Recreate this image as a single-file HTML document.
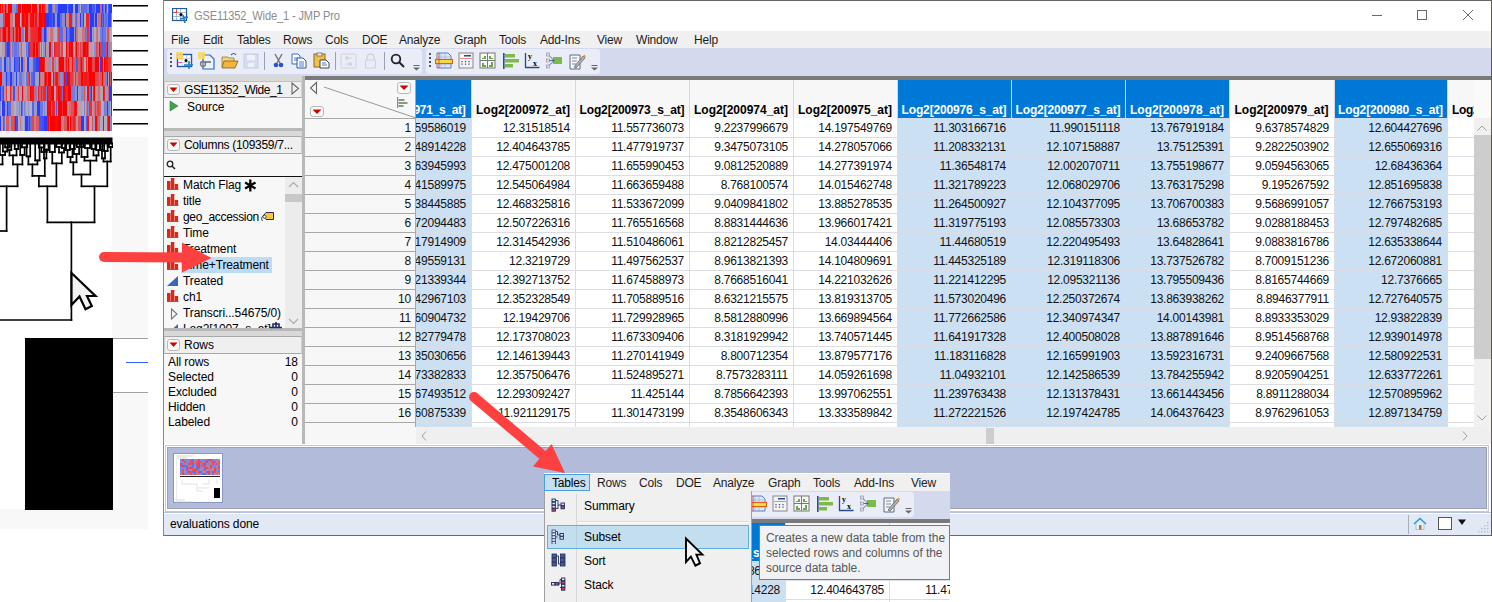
<!DOCTYPE html><html><head><meta charset="utf-8"><style>
html,body{margin:0;padding:0;}
body{width:1492px;height:602px;position:relative;overflow:hidden;background:#fff;font-family:"Liberation Sans",sans-serif;}
div,span,svg{position:absolute;box-sizing:border-box;}
.t{white-space:nowrap;line-height:14px;}
</style></head><body>

<div style="left:0px;top:131px;width:112px;height:7px;background:#f4f4f4;"></div>
<div style="left:112px;top:137px;width:36px;height:392px;background:#f8f8f8;"></div>
<div style="left:0px;top:509px;width:148px;height:20px;background:#f8f8f8;"></div>
<svg style="left:0;top:0" width="112" height="131" shape-rendering="crispEdges"><rect x="0" y="4" width="1" height="9" fill="rgb(255, 0, 0)"/><rect x="1" y="4" width="1" height="9" fill="rgb(222, 73, 79)"/><rect x="2" y="4" width="1" height="9" fill="rgb(247, 16, 17)"/><rect x="3" y="4" width="2" height="9" fill="rgb(219, 82, 89)"/><rect x="5" y="4" width="1" height="9" fill="rgb(255, 0, 0)"/><rect x="6" y="4" width="1" height="9" fill="rgb(220, 79, 85)"/><rect x="7" y="4" width="1" height="9" fill="rgb(207, 110, 118)"/><rect x="8" y="4" width="2" height="9" fill="rgb(255, 0, 0)"/><rect x="10" y="4" width="1" height="9" fill="rgb(255, 0, 0)"/><rect x="11" y="4" width="1" height="9" fill="rgb(255, 0, 0)"/><rect x="12" y="4" width="2" height="9" fill="rgb(139, 145, 209)"/><rect x="14" y="4" width="2" height="9" fill="rgb(135, 141, 211)"/><rect x="16" y="4" width="2" height="9" fill="rgb(97, 108, 228)"/><rect x="18" y="4" width="1" height="9" fill="rgb(255, 0, 0)"/><rect x="19" y="4" width="2" height="9" fill="rgb(255, 0, 0)"/><rect x="21" y="4" width="1" height="9" fill="rgb(207, 109, 118)"/><rect x="22" y="4" width="2" height="9" fill="rgb(255, 0, 0)"/><rect x="24" y="4" width="3" height="9" fill="rgb(255, 0, 0)"/><rect x="27" y="4" width="2" height="9" fill="rgb(255, 0, 0)"/><rect x="29" y="4" width="2" height="9" fill="rgb(255, 0, 0)"/><rect x="31" y="4" width="1" height="9" fill="rgb(196, 136, 146)"/><rect x="32" y="4" width="1" height="9" fill="rgb(255, 0, 0)"/><rect x="33" y="4" width="2" height="9" fill="rgb(255, 0, 0)"/><rect x="35" y="4" width="2" height="9" fill="rgb(250, 9, 10)"/><rect x="37" y="4" width="2" height="9" fill="rgb(200, 125, 135)"/><rect x="39" y="4" width="2" height="9" fill="rgb(255, 0, 0)"/><rect x="41" y="4" width="1" height="9" fill="rgb(214, 92, 99)"/><rect x="42" y="4" width="1" height="9" fill="rgb(255, 0, 0)"/><rect x="43" y="4" width="2" height="9" fill="rgb(242, 29, 31)"/><rect x="45" y="4" width="1" height="9" fill="rgb(218, 83, 89)"/><rect x="46" y="4" width="2" height="9" fill="rgb(194, 140, 151)"/><rect x="48" y="4" width="1" height="9" fill="rgb(79, 93, 237)"/><rect x="49" y="4" width="1" height="9" fill="rgb(50, 68, 250)"/><rect x="50" y="4" width="2" height="9" fill="rgb(55, 72, 248)"/><rect x="52" y="4" width="1" height="9" fill="rgb(117, 125, 219)"/><rect x="53" y="4" width="1" height="9" fill="rgb(145, 149, 207)"/><rect x="54" y="4" width="1" height="9" fill="rgb(191, 147, 158)"/><rect x="55" y="4" width="3" height="9" fill="rgb(108, 118, 223)"/><rect x="58" y="4" width="2" height="9" fill="rgb(40, 60, 255)"/><rect x="60" y="4" width="1" height="9" fill="rgb(40, 60, 255)"/><rect x="61" y="4" width="1" height="9" fill="rgb(40, 60, 255)"/><rect x="62" y="4" width="2" height="9" fill="rgb(40, 60, 255)"/><rect x="64" y="4" width="3" height="9" fill="rgb(40, 60, 255)"/><rect x="67" y="4" width="1" height="9" fill="rgb(121, 129, 217)"/><rect x="68" y="4" width="1" height="9" fill="rgb(66, 82, 243)"/><rect x="69" y="4" width="2" height="9" fill="rgb(46, 65, 252)"/><rect x="71" y="4" width="2" height="9" fill="rgb(40, 60, 255)"/><rect x="73" y="4" width="2" height="9" fill="rgb(180, 171, 185)"/><rect x="75" y="4" width="3" height="9" fill="rgb(40, 60, 255)"/><rect x="78" y="4" width="2" height="9" fill="rgb(122, 130, 217)"/><rect x="80" y="4" width="1" height="9" fill="rgb(172, 173, 194)"/><rect x="81" y="4" width="1" height="9" fill="rgb(90, 102, 232)"/><rect x="82" y="4" width="2" height="9" fill="rgb(99, 110, 228)"/><rect x="84" y="4" width="3" height="9" fill="rgb(96, 108, 229)"/><rect x="87" y="4" width="1" height="9" fill="rgb(121, 129, 217)"/><rect x="88" y="4" width="1" height="9" fill="rgb(124, 131, 216)"/><rect x="89" y="4" width="3" height="9" fill="rgb(40, 60, 255)"/><rect x="92" y="4" width="1" height="9" fill="rgb(77, 92, 237)"/><rect x="93" y="4" width="2" height="9" fill="rgb(68, 84, 242)"/><rect x="95" y="4" width="1" height="9" fill="rgb(123, 130, 217)"/><rect x="96" y="4" width="3" height="9" fill="rgb(40, 60, 255)"/><rect x="99" y="4" width="1" height="9" fill="rgb(40, 60, 255)"/><rect x="100" y="4" width="2" height="9" fill="rgb(212, 98, 105)"/><rect x="102" y="4" width="1" height="9" fill="rgb(40, 60, 255)"/><rect x="103" y="4" width="1" height="9" fill="rgb(104, 115, 225)"/><rect x="104" y="4" width="1" height="9" fill="rgb(133, 139, 212)"/><rect x="105" y="4" width="1" height="9" fill="rgb(40, 60, 255)"/><rect x="106" y="4" width="1" height="9" fill="rgb(87, 100, 233)"/><rect x="107" y="4" width="1" height="9" fill="rgb(167, 168, 196)"/><rect x="108" y="4" width="1" height="9" fill="rgb(78, 93, 237)"/><rect x="109" y="4" width="2" height="9" fill="rgb(40, 60, 255)"/><rect x="111" y="4" width="2" height="9" fill="rgb(40, 60, 255)"/><rect x="0" y="13" width="3" height="14" fill="rgb(152, 155, 203)"/><rect x="3" y="13" width="2" height="14" fill="rgb(224, 71, 77)"/><rect x="5" y="13" width="2" height="14" fill="rgb(255, 0, 0)"/><rect x="7" y="13" width="3" height="14" fill="rgb(255, 0, 0)"/><rect x="10" y="13" width="3" height="14" fill="rgb(204, 117, 126)"/><rect x="13" y="13" width="1" height="14" fill="rgb(171, 172, 195)"/><rect x="14" y="13" width="1" height="14" fill="rgb(186, 157, 170)"/><rect x="15" y="13" width="1" height="14" fill="rgb(255, 0, 0)"/><rect x="16" y="13" width="1" height="14" fill="rgb(255, 0, 0)"/><rect x="17" y="13" width="1" height="14" fill="rgb(255, 0, 0)"/><rect x="18" y="13" width="1" height="14" fill="rgb(255, 0, 0)"/><rect x="19" y="13" width="1" height="14" fill="rgb(255, 0, 0)"/><rect x="20" y="13" width="1" height="14" fill="rgb(173, 174, 193)"/><rect x="21" y="13" width="1" height="14" fill="rgb(206, 113, 122)"/><rect x="22" y="13" width="2" height="14" fill="rgb(255, 0, 0)"/><rect x="24" y="13" width="2" height="14" fill="rgb(246, 20, 21)"/><rect x="26" y="13" width="1" height="14" fill="rgb(252, 5, 6)"/><rect x="27" y="13" width="1" height="14" fill="rgb(255, 0, 0)"/><rect x="28" y="13" width="2" height="14" fill="rgb(214, 94, 101)"/><rect x="30" y="13" width="3" height="14" fill="rgb(249, 13, 14)"/><rect x="33" y="13" width="1" height="14" fill="rgb(255, 0, 0)"/><rect x="34" y="13" width="1" height="14" fill="rgb(228, 61, 66)"/><rect x="35" y="13" width="1" height="14" fill="rgb(249, 11, 12)"/><rect x="36" y="13" width="1" height="14" fill="rgb(242, 29, 32)"/><rect x="37" y="13" width="2" height="14" fill="rgb(222, 76, 82)"/><rect x="39" y="13" width="1" height="14" fill="rgb(255, 0, 0)"/><rect x="40" y="13" width="2" height="14" fill="rgb(255, 0, 0)"/><rect x="42" y="13" width="2" height="14" fill="rgb(247, 16, 18)"/><rect x="44" y="13" width="1" height="14" fill="rgb(255, 0, 0)"/><rect x="45" y="13" width="1" height="14" fill="rgb(255, 0, 0)"/><rect x="46" y="13" width="3" height="14" fill="rgb(40, 60, 255)"/><rect x="49" y="13" width="3" height="14" fill="rgb(55, 73, 247)"/><rect x="52" y="13" width="1" height="14" fill="rgb(75, 90, 238)"/><rect x="53" y="13" width="1" height="14" fill="rgb(40, 60, 255)"/><rect x="54" y="13" width="1" height="14" fill="rgb(60, 77, 245)"/><rect x="55" y="13" width="2" height="14" fill="rgb(146, 151, 206)"/><rect x="57" y="13" width="3" height="14" fill="rgb(40, 60, 255)"/><rect x="60" y="13" width="2" height="14" fill="rgb(96, 108, 229)"/><rect x="62" y="13" width="3" height="14" fill="rgb(133, 139, 212)"/><rect x="65" y="13" width="1" height="14" fill="rgb(40, 60, 255)"/><rect x="66" y="13" width="3" height="14" fill="rgb(197, 133, 143)"/><rect x="69" y="13" width="3" height="14" fill="rgb(243, 27, 29)"/><rect x="72" y="13" width="1" height="14" fill="rgb(129, 136, 214)"/><rect x="73" y="13" width="2" height="14" fill="rgb(187, 156, 168)"/><rect x="75" y="13" width="1" height="14" fill="rgb(219, 83, 89)"/><rect x="76" y="13" width="1" height="14" fill="rgb(88, 101, 232)"/><rect x="77" y="13" width="1" height="14" fill="rgb(139, 144, 209)"/><rect x="78" y="13" width="1" height="14" fill="rgb(195, 137, 148)"/><rect x="79" y="13" width="1" height="14" fill="rgb(148, 152, 205)"/><rect x="80" y="13" width="1" height="14" fill="rgb(40, 60, 255)"/><rect x="81" y="13" width="1" height="14" fill="rgb(133, 140, 212)"/><rect x="82" y="13" width="1" height="14" fill="rgb(117, 126, 219)"/><rect x="83" y="13" width="1" height="14" fill="rgb(46, 65, 252)"/><rect x="84" y="13" width="2" height="14" fill="rgb(180, 171, 184)"/><rect x="86" y="13" width="3" height="14" fill="rgb(239, 35, 37)"/><rect x="89" y="13" width="1" height="14" fill="rgb(100, 111, 227)"/><rect x="90" y="13" width="3" height="14" fill="rgb(40, 60, 255)"/><rect x="93" y="13" width="1" height="14" fill="rgb(40, 60, 255)"/><rect x="94" y="13" width="1" height="14" fill="rgb(127, 134, 215)"/><rect x="95" y="13" width="1" height="14" fill="rgb(40, 60, 255)"/><rect x="96" y="13" width="1" height="14" fill="rgb(40, 60, 255)"/><rect x="97" y="13" width="1" height="14" fill="rgb(148, 152, 205)"/><rect x="98" y="13" width="3" height="14" fill="rgb(206, 111, 120)"/><rect x="101" y="13" width="1" height="14" fill="rgb(52, 70, 249)"/><rect x="102" y="13" width="1" height="14" fill="rgb(96, 108, 229)"/><rect x="103" y="13" width="1" height="14" fill="rgb(61, 78, 245)"/><rect x="104" y="13" width="1" height="14" fill="rgb(118, 127, 219)"/><rect x="105" y="13" width="2" height="14" fill="rgb(97, 109, 228)"/><rect x="107" y="13" width="1" height="14" fill="rgb(115, 124, 220)"/><rect x="108" y="13" width="3" height="14" fill="rgb(52, 70, 249)"/><rect x="111" y="13" width="2" height="14" fill="rgb(203, 117, 127)"/><rect x="0" y="27" width="1" height="15" fill="rgb(225, 67, 72)"/><rect x="1" y="27" width="1" height="15" fill="rgb(210, 103, 112)"/><rect x="2" y="27" width="1" height="15" fill="rgb(226, 65, 70)"/><rect x="3" y="27" width="3" height="15" fill="rgb(255, 0, 0)"/><rect x="6" y="27" width="2" height="15" fill="rgb(221, 76, 82)"/><rect x="8" y="27" width="2" height="15" fill="rgb(255, 0, 0)"/><rect x="10" y="27" width="3" height="15" fill="rgb(213, 95, 103)"/><rect x="13" y="27" width="1" height="15" fill="rgb(249, 11, 12)"/><rect x="14" y="27" width="1" height="15" fill="rgb(204, 115, 124)"/><rect x="15" y="27" width="1" height="15" fill="rgb(224, 69, 74)"/><rect x="16" y="27" width="2" height="15" fill="rgb(255, 0, 0)"/><rect x="18" y="27" width="1" height="15" fill="rgb(231, 54, 58)"/><rect x="19" y="27" width="1" height="15" fill="rgb(255, 0, 0)"/><rect x="20" y="27" width="1" height="15" fill="rgb(255, 0, 0)"/><rect x="21" y="27" width="1" height="15" fill="rgb(210, 103, 111)"/><rect x="22" y="27" width="2" height="15" fill="rgb(116, 125, 220)"/><rect x="24" y="27" width="1" height="15" fill="rgb(182, 168, 181)"/><rect x="25" y="27" width="3" height="15" fill="rgb(255, 0, 0)"/><rect x="28" y="27" width="2" height="15" fill="rgb(206, 112, 121)"/><rect x="30" y="27" width="1" height="15" fill="rgb(225, 68, 74)"/><rect x="31" y="27" width="1" height="15" fill="rgb(233, 50, 54)"/><rect x="32" y="27" width="3" height="15" fill="rgb(236, 43, 46)"/><rect x="35" y="27" width="3" height="15" fill="rgb(238, 38, 41)"/><rect x="38" y="27" width="1" height="15" fill="rgb(255, 0, 0)"/><rect x="39" y="27" width="2" height="15" fill="rgb(255, 0, 0)"/><rect x="41" y="27" width="1" height="15" fill="rgb(76, 91, 238)"/><rect x="42" y="27" width="2" height="15" fill="rgb(122, 130, 217)"/><rect x="44" y="27" width="2" height="15" fill="rgb(40, 60, 255)"/><rect x="46" y="27" width="1" height="15" fill="rgb(97, 108, 228)"/><rect x="47" y="27" width="2" height="15" fill="rgb(191, 146, 158)"/><rect x="49" y="27" width="1" height="15" fill="rgb(168, 170, 196)"/><rect x="50" y="27" width="3" height="15" fill="rgb(205, 114, 123)"/><rect x="53" y="27" width="1" height="15" fill="rgb(192, 144, 155)"/><rect x="54" y="27" width="3" height="15" fill="rgb(173, 174, 193)"/><rect x="57" y="27" width="1" height="15" fill="rgb(129, 136, 214)"/><rect x="58" y="27" width="2" height="15" fill="rgb(227, 64, 69)"/><rect x="60" y="27" width="1" height="15" fill="rgb(93, 105, 230)"/><rect x="61" y="27" width="2" height="15" fill="rgb(95, 107, 229)"/><rect x="63" y="27" width="3" height="15" fill="rgb(198, 130, 140)"/><rect x="66" y="27" width="1" height="15" fill="rgb(47, 66, 251)"/><rect x="67" y="27" width="2" height="15" fill="rgb(109, 119, 223)"/><rect x="69" y="27" width="1" height="15" fill="rgb(232, 52, 56)"/><rect x="70" y="27" width="1" height="15" fill="rgb(40, 60, 255)"/><rect x="71" y="27" width="3" height="15" fill="rgb(40, 60, 255)"/><rect x="74" y="27" width="1" height="15" fill="rgb(142, 147, 208)"/><rect x="75" y="27" width="1" height="15" fill="rgb(60, 77, 245)"/><rect x="76" y="27" width="1" height="15" fill="rgb(207, 109, 117)"/><rect x="77" y="27" width="1" height="15" fill="rgb(129, 136, 213)"/><rect x="78" y="27" width="1" height="15" fill="rgb(181, 169, 182)"/><rect x="79" y="27" width="3" height="15" fill="rgb(185, 161, 174)"/><rect x="82" y="27" width="2" height="15" fill="rgb(205, 115, 124)"/><rect x="84" y="27" width="1" height="15" fill="rgb(204, 117, 126)"/><rect x="85" y="27" width="1" height="15" fill="rgb(220, 80, 86)"/><rect x="86" y="27" width="1" height="15" fill="rgb(111, 121, 222)"/><rect x="87" y="27" width="1" height="15" fill="rgb(74, 89, 239)"/><rect x="88" y="27" width="1" height="15" fill="rgb(233, 50, 54)"/><rect x="89" y="27" width="1" height="15" fill="rgb(102, 113, 226)"/><rect x="90" y="27" width="2" height="15" fill="rgb(40, 60, 255)"/><rect x="92" y="27" width="1" height="15" fill="rgb(156, 159, 201)"/><rect x="93" y="27" width="1" height="15" fill="rgb(138, 144, 210)"/><rect x="94" y="27" width="2" height="15" fill="rgb(181, 169, 182)"/><rect x="96" y="27" width="1" height="15" fill="rgb(202, 120, 130)"/><rect x="97" y="27" width="1" height="15" fill="rgb(126, 133, 215)"/><rect x="98" y="27" width="2" height="15" fill="rgb(184, 162, 174)"/><rect x="100" y="27" width="2" height="15" fill="rgb(121, 129, 217)"/><rect x="102" y="27" width="1" height="15" fill="rgb(81, 95, 236)"/><rect x="103" y="27" width="3" height="15" fill="rgb(110, 120, 222)"/><rect x="106" y="27" width="1" height="15" fill="rgb(153, 156, 203)"/><rect x="107" y="27" width="1" height="15" fill="rgb(105, 116, 225)"/><rect x="108" y="27" width="1" height="15" fill="rgb(223, 73, 79)"/><rect x="109" y="27" width="1" height="15" fill="rgb(149, 154, 204)"/><rect x="110" y="27" width="3" height="15" fill="rgb(175, 175, 193)"/><rect x="0" y="42" width="2" height="15" fill="rgb(178, 176, 190)"/><rect x="2" y="42" width="3" height="15" fill="rgb(188, 154, 166)"/><rect x="5" y="42" width="2" height="15" fill="rgb(83, 96, 235)"/><rect x="7" y="42" width="2" height="15" fill="rgb(40, 60, 255)"/><rect x="9" y="42" width="1" height="15" fill="rgb(54, 72, 248)"/><rect x="10" y="42" width="1" height="15" fill="rgb(210, 101, 109)"/><rect x="11" y="42" width="1" height="15" fill="rgb(159, 162, 200)"/><rect x="12" y="42" width="1" height="15" fill="rgb(110, 120, 222)"/><rect x="13" y="42" width="1" height="15" fill="rgb(128, 135, 214)"/><rect x="14" y="42" width="3" height="15" fill="rgb(104, 115, 225)"/><rect x="17" y="42" width="1" height="15" fill="rgb(207, 108, 117)"/><rect x="18" y="42" width="1" height="15" fill="rgb(108, 118, 223)"/><rect x="19" y="42" width="1" height="15" fill="rgb(156, 159, 201)"/><rect x="20" y="42" width="1" height="15" fill="rgb(192, 145, 156)"/><rect x="21" y="42" width="1" height="15" fill="rgb(109, 119, 223)"/><rect x="22" y="42" width="2" height="15" fill="rgb(182, 167, 180)"/><rect x="24" y="42" width="1" height="15" fill="rgb(184, 162, 175)"/><rect x="25" y="42" width="1" height="15" fill="rgb(178, 176, 190)"/><rect x="26" y="42" width="1" height="15" fill="rgb(99, 111, 227)"/><rect x="27" y="42" width="1" height="15" fill="rgb(203, 118, 127)"/><rect x="28" y="42" width="2" height="15" fill="rgb(62, 79, 244)"/><rect x="30" y="42" width="3" height="15" fill="rgb(232, 51, 55)"/><rect x="33" y="42" width="2" height="15" fill="rgb(255, 0, 0)"/><rect x="35" y="42" width="1" height="15" fill="rgb(207, 110, 119)"/><rect x="36" y="42" width="1" height="15" fill="rgb(255, 0, 0)"/><rect x="37" y="42" width="1" height="15" fill="rgb(255, 0, 0)"/><rect x="38" y="42" width="2" height="15" fill="rgb(226, 67, 72)"/><rect x="40" y="42" width="1" height="15" fill="rgb(182, 168, 181)"/><rect x="41" y="42" width="1" height="15" fill="rgb(215, 92, 99)"/><rect x="42" y="42" width="1" height="15" fill="rgb(180, 173, 186)"/><rect x="43" y="42" width="2" height="15" fill="rgb(144, 149, 207)"/><rect x="45" y="42" width="1" height="15" fill="rgb(75, 90, 238)"/><rect x="46" y="42" width="2" height="15" fill="rgb(189, 151, 163)"/><rect x="48" y="42" width="1" height="15" fill="rgb(156, 159, 201)"/><rect x="49" y="42" width="1" height="15" fill="rgb(40, 60, 255)"/><rect x="50" y="42" width="1" height="15" fill="rgb(255, 0, 0)"/><rect x="51" y="42" width="2" height="15" fill="rgb(132, 138, 212)"/><rect x="53" y="42" width="1" height="15" fill="rgb(181, 170, 183)"/><rect x="54" y="42" width="1" height="15" fill="rgb(243, 26, 28)"/><rect x="55" y="42" width="3" height="15" fill="rgb(231, 55, 59)"/><rect x="58" y="42" width="2" height="15" fill="rgb(231, 53, 57)"/><rect x="60" y="42" width="1" height="15" fill="rgb(203, 118, 128)"/><rect x="61" y="42" width="2" height="15" fill="rgb(225, 68, 73)"/><rect x="63" y="42" width="3" height="15" fill="rgb(174, 175, 193)"/><rect x="66" y="42" width="1" height="15" fill="rgb(255, 0, 0)"/><rect x="67" y="42" width="2" height="15" fill="rgb(220, 79, 86)"/><rect x="69" y="42" width="1" height="15" fill="rgb(255, 0, 0)"/><rect x="70" y="42" width="1" height="15" fill="rgb(247, 17, 19)"/><rect x="71" y="42" width="1" height="15" fill="rgb(255, 0, 0)"/><rect x="72" y="42" width="1" height="15" fill="rgb(255, 0, 0)"/><rect x="73" y="42" width="2" height="15" fill="rgb(187, 156, 168)"/><rect x="75" y="42" width="1" height="15" fill="rgb(222, 74, 80)"/><rect x="76" y="42" width="1" height="15" fill="rgb(255, 0, 0)"/><rect x="77" y="42" width="1" height="15" fill="rgb(217, 87, 94)"/><rect x="78" y="42" width="1" height="15" fill="rgb(220, 80, 86)"/><rect x="79" y="42" width="1" height="15" fill="rgb(148, 153, 205)"/><rect x="80" y="42" width="1" height="15" fill="rgb(227, 63, 68)"/><rect x="81" y="42" width="1" height="15" fill="rgb(213, 95, 103)"/><rect x="82" y="42" width="1" height="15" fill="rgb(218, 84, 91)"/><rect x="83" y="42" width="3" height="15" fill="rgb(255, 0, 0)"/><rect x="86" y="42" width="1" height="15" fill="rgb(244, 24, 25)"/><rect x="87" y="42" width="1" height="15" fill="rgb(255, 0, 0)"/><rect x="88" y="42" width="1" height="15" fill="rgb(224, 71, 76)"/><rect x="89" y="42" width="1" height="15" fill="rgb(158, 161, 200)"/><rect x="90" y="42" width="3" height="15" fill="rgb(187, 155, 167)"/><rect x="93" y="42" width="1" height="15" fill="rgb(174, 175, 193)"/><rect x="94" y="42" width="2" height="15" fill="rgb(135, 141, 211)"/><rect x="96" y="42" width="1" height="15" fill="rgb(225, 68, 73)"/><rect x="97" y="42" width="1" height="15" fill="rgb(112, 121, 222)"/><rect x="98" y="42" width="1" height="15" fill="rgb(204, 117, 126)"/><rect x="99" y="42" width="1" height="15" fill="rgb(255, 0, 0)"/><rect x="100" y="42" width="1" height="15" fill="rgb(229, 60, 64)"/><rect x="101" y="42" width="2" height="15" fill="rgb(84, 97, 234)"/><rect x="103" y="42" width="2" height="15" fill="rgb(85, 98, 234)"/><rect x="105" y="42" width="2" height="15" fill="rgb(226, 65, 70)"/><rect x="107" y="42" width="1" height="15" fill="rgb(255, 0, 0)"/><rect x="108" y="42" width="2" height="15" fill="rgb(129, 136, 214)"/><rect x="110" y="42" width="3" height="15" fill="rgb(197, 132, 143)"/><rect x="0" y="57" width="2" height="15" fill="rgb(112, 122, 221)"/><rect x="2" y="57" width="2" height="15" fill="rgb(167, 169, 196)"/><rect x="4" y="57" width="2" height="15" fill="rgb(40, 60, 255)"/><rect x="6" y="57" width="2" height="15" fill="rgb(130, 136, 213)"/><rect x="8" y="57" width="1" height="15" fill="rgb(148, 153, 205)"/><rect x="9" y="57" width="2" height="15" fill="rgb(101, 112, 227)"/><rect x="11" y="57" width="3" height="15" fill="rgb(158, 161, 200)"/><rect x="14" y="57" width="1" height="15" fill="rgb(40, 60, 255)"/><rect x="15" y="57" width="2" height="15" fill="rgb(83, 97, 235)"/><rect x="17" y="57" width="2" height="15" fill="rgb(84, 98, 234)"/><rect x="19" y="57" width="1" height="15" fill="rgb(40, 60, 255)"/><rect x="20" y="57" width="1" height="15" fill="rgb(169, 171, 195)"/><rect x="21" y="57" width="2" height="15" fill="rgb(40, 60, 255)"/><rect x="23" y="57" width="2" height="15" fill="rgb(199, 128, 138)"/><rect x="25" y="57" width="2" height="15" fill="rgb(182, 168, 181)"/><rect x="27" y="57" width="2" height="15" fill="rgb(40, 60, 255)"/><rect x="29" y="57" width="3" height="15" fill="rgb(153, 156, 203)"/><rect x="32" y="57" width="1" height="15" fill="rgb(141, 146, 208)"/><rect x="33" y="57" width="1" height="15" fill="rgb(230, 55, 60)"/><rect x="34" y="57" width="2" height="15" fill="rgb(70, 86, 241)"/><rect x="36" y="57" width="3" height="15" fill="rgb(49, 67, 250)"/><rect x="39" y="57" width="1" height="15" fill="rgb(255, 0, 0)"/><rect x="40" y="57" width="1" height="15" fill="rgb(255, 0, 0)"/><rect x="41" y="57" width="3" height="15" fill="rgb(255, 0, 0)"/><rect x="44" y="57" width="1" height="15" fill="rgb(242, 29, 31)"/><rect x="45" y="57" width="1" height="15" fill="rgb(187, 156, 169)"/><rect x="46" y="57" width="2" height="15" fill="rgb(196, 134, 144)"/><rect x="48" y="57" width="2" height="15" fill="rgb(198, 130, 140)"/><rect x="50" y="57" width="1" height="15" fill="rgb(144, 149, 207)"/><rect x="51" y="57" width="1" height="15" fill="rgb(158, 160, 201)"/><rect x="52" y="57" width="2" height="15" fill="rgb(228, 60, 65)"/><rect x="54" y="57" width="1" height="15" fill="rgb(196, 135, 145)"/><rect x="55" y="57" width="1" height="15" fill="rgb(135, 141, 211)"/><rect x="56" y="57" width="2" height="15" fill="rgb(161, 163, 199)"/><rect x="58" y="57" width="1" height="15" fill="rgb(216, 88, 95)"/><rect x="59" y="57" width="3" height="15" fill="rgb(255, 0, 0)"/><rect x="62" y="57" width="1" height="15" fill="rgb(255, 0, 0)"/><rect x="63" y="57" width="1" height="15" fill="rgb(255, 0, 0)"/><rect x="64" y="57" width="1" height="15" fill="rgb(206, 111, 120)"/><rect x="65" y="57" width="1" height="15" fill="rgb(102, 113, 226)"/><rect x="66" y="57" width="1" height="15" fill="rgb(245, 22, 24)"/><rect x="67" y="57" width="1" height="15" fill="rgb(110, 120, 222)"/><rect x="68" y="57" width="1" height="15" fill="rgb(255, 0, 0)"/><rect x="69" y="57" width="1" height="15" fill="rgb(199, 129, 139)"/><rect x="70" y="57" width="2" height="15" fill="rgb(209, 105, 113)"/><rect x="72" y="57" width="1" height="15" fill="rgb(247, 18, 19)"/><rect x="73" y="57" width="3" height="15" fill="rgb(214, 92, 99)"/><rect x="76" y="57" width="2" height="15" fill="rgb(76, 91, 238)"/><rect x="78" y="57" width="2" height="15" fill="rgb(216, 88, 94)"/><rect x="80" y="57" width="1" height="15" fill="rgb(234, 47, 50)"/><rect x="81" y="57" width="1" height="15" fill="rgb(255, 0, 0)"/><rect x="82" y="57" width="1" height="15" fill="rgb(226, 65, 70)"/><rect x="83" y="57" width="1" height="15" fill="rgb(223, 73, 79)"/><rect x="84" y="57" width="2" height="15" fill="rgb(183, 165, 178)"/><rect x="86" y="57" width="1" height="15" fill="rgb(234, 46, 49)"/><rect x="87" y="57" width="1" height="15" fill="rgb(198, 129, 139)"/><rect x="88" y="57" width="3" height="15" fill="rgb(255, 0, 0)"/><rect x="91" y="57" width="1" height="15" fill="rgb(255, 0, 0)"/><rect x="92" y="57" width="3" height="15" fill="rgb(223, 73, 78)"/><rect x="95" y="57" width="1" height="15" fill="rgb(255, 0, 0)"/><rect x="96" y="57" width="2" height="15" fill="rgb(255, 0, 0)"/><rect x="98" y="57" width="1" height="15" fill="rgb(255, 0, 0)"/><rect x="99" y="57" width="1" height="15" fill="rgb(199, 128, 139)"/><rect x="100" y="57" width="1" height="15" fill="rgb(40, 60, 255)"/><rect x="101" y="57" width="2" height="15" fill="rgb(255, 0, 0)"/><rect x="103" y="57" width="1" height="15" fill="rgb(189, 151, 163)"/><rect x="104" y="57" width="1" height="15" fill="rgb(255, 0, 0)"/><rect x="105" y="57" width="3" height="15" fill="rgb(243, 25, 27)"/><rect x="108" y="57" width="3" height="15" fill="rgb(229, 59, 64)"/><rect x="111" y="57" width="2" height="15" fill="rgb(197, 133, 143)"/><rect x="0" y="72" width="1" height="14" fill="rgb(252, 6, 6)"/><rect x="1" y="72" width="1" height="14" fill="rgb(43, 62, 253)"/><rect x="2" y="72" width="3" height="14" fill="rgb(142, 147, 208)"/><rect x="5" y="72" width="1" height="14" fill="rgb(132, 139, 212)"/><rect x="6" y="72" width="1" height="14" fill="rgb(40, 60, 255)"/><rect x="7" y="72" width="3" height="14" fill="rgb(119, 127, 218)"/><rect x="10" y="72" width="2" height="14" fill="rgb(40, 60, 255)"/><rect x="12" y="72" width="2" height="14" fill="rgb(123, 131, 217)"/><rect x="14" y="72" width="2" height="14" fill="rgb(146, 151, 206)"/><rect x="16" y="72" width="1" height="14" fill="rgb(40, 60, 255)"/><rect x="17" y="72" width="2" height="14" fill="rgb(156, 160, 201)"/><rect x="19" y="72" width="3" height="14" fill="rgb(106, 116, 224)"/><rect x="22" y="72" width="2" height="14" fill="rgb(139, 145, 209)"/><rect x="24" y="72" width="1" height="14" fill="rgb(155, 158, 202)"/><rect x="25" y="72" width="1" height="14" fill="rgb(185, 160, 172)"/><rect x="26" y="72" width="1" height="14" fill="rgb(107, 117, 224)"/><rect x="27" y="72" width="2" height="14" fill="rgb(221, 78, 84)"/><rect x="29" y="72" width="1" height="14" fill="rgb(59, 76, 246)"/><rect x="30" y="72" width="1" height="14" fill="rgb(148, 152, 205)"/><rect x="31" y="72" width="2" height="14" fill="rgb(91, 103, 231)"/><rect x="33" y="72" width="2" height="14" fill="rgb(74, 89, 239)"/><rect x="35" y="72" width="1" height="14" fill="rgb(192, 144, 155)"/><rect x="36" y="72" width="3" height="14" fill="rgb(159, 162, 200)"/><rect x="39" y="72" width="1" height="14" fill="rgb(40, 60, 255)"/><rect x="40" y="72" width="1" height="14" fill="rgb(205, 113, 122)"/><rect x="41" y="72" width="3" height="14" fill="rgb(197, 133, 144)"/><rect x="44" y="72" width="1" height="14" fill="rgb(230, 56, 60)"/><rect x="45" y="72" width="1" height="14" fill="rgb(255, 0, 0)"/><rect x="46" y="72" width="1" height="14" fill="rgb(246, 19, 21)"/><rect x="47" y="72" width="1" height="14" fill="rgb(225, 69, 74)"/><rect x="48" y="72" width="2" height="14" fill="rgb(255, 0, 0)"/><rect x="50" y="72" width="1" height="14" fill="rgb(255, 0, 0)"/><rect x="51" y="72" width="1" height="14" fill="rgb(163, 165, 198)"/><rect x="52" y="72" width="1" height="14" fill="rgb(166, 168, 197)"/><rect x="53" y="72" width="1" height="14" fill="rgb(252, 4, 5)"/><rect x="54" y="72" width="1" height="14" fill="rgb(213, 96, 103)"/><rect x="55" y="72" width="1" height="14" fill="rgb(237, 41, 44)"/><rect x="56" y="72" width="2" height="14" fill="rgb(247, 18, 19)"/><rect x="58" y="72" width="2" height="14" fill="rgb(217, 86, 93)"/><rect x="60" y="72" width="2" height="14" fill="rgb(138, 144, 209)"/><rect x="62" y="72" width="1" height="14" fill="rgb(131, 138, 213)"/><rect x="63" y="72" width="1" height="14" fill="rgb(217, 86, 93)"/><rect x="64" y="72" width="1" height="14" fill="rgb(255, 0, 0)"/><rect x="65" y="72" width="2" height="14" fill="rgb(54, 72, 248)"/><rect x="67" y="72" width="3" height="14" fill="rgb(255, 0, 0)"/><rect x="70" y="72" width="3" height="14" fill="rgb(229, 58, 63)"/><rect x="73" y="72" width="1" height="14" fill="rgb(215, 92, 99)"/><rect x="74" y="72" width="1" height="14" fill="rgb(196, 135, 145)"/><rect x="75" y="72" width="1" height="14" fill="rgb(78, 93, 237)"/><rect x="76" y="72" width="2" height="14" fill="rgb(203, 118, 128)"/><rect x="78" y="72" width="3" height="14" fill="rgb(223, 72, 78)"/><rect x="81" y="72" width="2" height="14" fill="rgb(255, 0, 0)"/><rect x="83" y="72" width="1" height="14" fill="rgb(74, 89, 239)"/><rect x="84" y="72" width="3" height="14" fill="rgb(244, 24, 26)"/><rect x="87" y="72" width="2" height="14" fill="rgb(240, 34, 36)"/><rect x="89" y="72" width="2" height="14" fill="rgb(255, 0, 0)"/><rect x="91" y="72" width="2" height="14" fill="rgb(255, 0, 0)"/><rect x="93" y="72" width="2" height="14" fill="rgb(255, 0, 0)"/><rect x="95" y="72" width="1" height="14" fill="rgb(106, 116, 224)"/><rect x="96" y="72" width="2" height="14" fill="rgb(222, 74, 80)"/><rect x="98" y="72" width="1" height="14" fill="rgb(219, 80, 87)"/><rect x="99" y="72" width="1" height="14" fill="rgb(210, 103, 111)"/><rect x="100" y="72" width="2" height="14" fill="rgb(216, 88, 95)"/><rect x="102" y="72" width="1" height="14" fill="rgb(255, 0, 0)"/><rect x="103" y="72" width="2" height="14" fill="rgb(206, 112, 120)"/><rect x="105" y="72" width="2" height="14" fill="rgb(121, 129, 217)"/><rect x="107" y="72" width="1" height="14" fill="rgb(254, 2, 2)"/><rect x="108" y="72" width="1" height="14" fill="rgb(186, 158, 171)"/><rect x="109" y="72" width="1" height="14" fill="rgb(255, 0, 0)"/><rect x="110" y="72" width="1" height="14" fill="rgb(216, 88, 95)"/><rect x="111" y="72" width="1" height="14" fill="rgb(255, 0, 0)"/><rect x="0" y="86" width="1" height="15" fill="rgb(40, 60, 255)"/><rect x="1" y="86" width="1" height="15" fill="rgb(131, 138, 213)"/><rect x="2" y="86" width="1" height="15" fill="rgb(88, 101, 232)"/><rect x="3" y="86" width="1" height="15" fill="rgb(57, 74, 247)"/><rect x="4" y="86" width="2" height="15" fill="rgb(193, 141, 153)"/><rect x="6" y="86" width="1" height="15" fill="rgb(226, 65, 71)"/><rect x="7" y="86" width="2" height="15" fill="rgb(180, 172, 185)"/><rect x="9" y="86" width="1" height="15" fill="rgb(176, 176, 192)"/><rect x="10" y="86" width="1" height="15" fill="rgb(242, 28, 30)"/><rect x="11" y="86" width="1" height="15" fill="rgb(116, 125, 220)"/><rect x="12" y="86" width="1" height="15" fill="rgb(197, 133, 144)"/><rect x="13" y="86" width="1" height="15" fill="rgb(240, 33, 35)"/><rect x="14" y="86" width="1" height="15" fill="rgb(65, 82, 243)"/><rect x="15" y="86" width="2" height="15" fill="rgb(193, 142, 153)"/><rect x="17" y="86" width="1" height="15" fill="rgb(143, 148, 207)"/><rect x="18" y="86" width="1" height="15" fill="rgb(227, 64, 69)"/><rect x="19" y="86" width="3" height="15" fill="rgb(155, 159, 202)"/><rect x="22" y="86" width="1" height="15" fill="rgb(255, 0, 0)"/><rect x="23" y="86" width="1" height="15" fill="rgb(141, 146, 208)"/><rect x="24" y="86" width="3" height="15" fill="rgb(191, 147, 159)"/><rect x="27" y="86" width="3" height="15" fill="rgb(208, 106, 115)"/><rect x="30" y="86" width="1" height="15" fill="rgb(255, 0, 0)"/><rect x="31" y="86" width="3" height="15" fill="rgb(244, 24, 26)"/><rect x="34" y="86" width="2" height="15" fill="rgb(211, 100, 108)"/><rect x="36" y="86" width="1" height="15" fill="rgb(122, 130, 217)"/><rect x="37" y="86" width="1" height="15" fill="rgb(146, 151, 206)"/><rect x="38" y="86" width="1" height="15" fill="rgb(240, 33, 36)"/><rect x="39" y="86" width="2" height="15" fill="rgb(217, 86, 93)"/><rect x="41" y="86" width="1" height="15" fill="rgb(240, 32, 35)"/><rect x="42" y="86" width="1" height="15" fill="rgb(218, 83, 90)"/><rect x="43" y="86" width="2" height="15" fill="rgb(236, 42, 46)"/><rect x="45" y="86" width="1" height="15" fill="rgb(238, 37, 40)"/><rect x="46" y="86" width="1" height="15" fill="rgb(119, 127, 218)"/><rect x="47" y="86" width="1" height="15" fill="rgb(255, 0, 0)"/><rect x="48" y="86" width="2" height="15" fill="rgb(241, 31, 33)"/><rect x="50" y="86" width="1" height="15" fill="rgb(239, 36, 38)"/><rect x="51" y="86" width="1" height="15" fill="rgb(252, 6, 7)"/><rect x="52" y="86" width="2" height="15" fill="rgb(255, 0, 0)"/><rect x="54" y="86" width="2" height="15" fill="rgb(185, 160, 173)"/><rect x="56" y="86" width="2" height="15" fill="rgb(234, 46, 49)"/><rect x="58" y="86" width="1" height="15" fill="rgb(255, 0, 0)"/><rect x="59" y="86" width="1" height="15" fill="rgb(51, 69, 249)"/><rect x="60" y="86" width="1" height="15" fill="rgb(241, 30, 33)"/><rect x="61" y="86" width="1" height="15" fill="rgb(238, 37, 40)"/><rect x="62" y="86" width="1" height="15" fill="rgb(106, 116, 224)"/><rect x="63" y="86" width="2" height="15" fill="rgb(255, 0, 0)"/><rect x="65" y="86" width="3" height="15" fill="rgb(238, 38, 40)"/><rect x="68" y="86" width="3" height="15" fill="rgb(255, 0, 0)"/><rect x="71" y="86" width="1" height="15" fill="rgb(212, 97, 105)"/><rect x="72" y="86" width="1" height="15" fill="rgb(116, 125, 220)"/><rect x="73" y="86" width="2" height="15" fill="rgb(116, 125, 219)"/><rect x="75" y="86" width="1" height="15" fill="rgb(197, 131, 142)"/><rect x="76" y="86" width="1" height="15" fill="rgb(136, 142, 210)"/><rect x="77" y="86" width="1" height="15" fill="rgb(255, 0, 0)"/><rect x="78" y="86" width="1" height="15" fill="rgb(155, 158, 202)"/><rect x="79" y="86" width="2" height="15" fill="rgb(151, 155, 204)"/><rect x="81" y="86" width="3" height="15" fill="rgb(130, 136, 213)"/><rect x="84" y="86" width="1" height="15" fill="rgb(216, 88, 95)"/><rect x="85" y="86" width="1" height="15" fill="rgb(195, 136, 147)"/><rect x="86" y="86" width="1" height="15" fill="rgb(170, 171, 195)"/><rect x="87" y="86" width="2" height="15" fill="rgb(251, 8, 9)"/><rect x="89" y="86" width="1" height="15" fill="rgb(215, 91, 98)"/><rect x="90" y="86" width="1" height="15" fill="rgb(90, 102, 232)"/><rect x="91" y="86" width="1" height="15" fill="rgb(255, 0, 0)"/><rect x="92" y="86" width="1" height="15" fill="rgb(188, 153, 165)"/><rect x="93" y="86" width="1" height="15" fill="rgb(66, 82, 242)"/><rect x="94" y="86" width="1" height="15" fill="rgb(255, 0, 0)"/><rect x="95" y="86" width="3" height="15" fill="rgb(192, 145, 156)"/><rect x="98" y="86" width="2" height="15" fill="rgb(206, 111, 119)"/><rect x="100" y="86" width="3" height="15" fill="rgb(184, 163, 176)"/><rect x="103" y="86" width="1" height="15" fill="rgb(250, 11, 11)"/><rect x="104" y="86" width="1" height="15" fill="rgb(238, 38, 42)"/><rect x="105" y="86" width="3" height="15" fill="rgb(149, 153, 204)"/><rect x="108" y="86" width="1" height="15" fill="rgb(214, 94, 101)"/><rect x="109" y="86" width="3" height="15" fill="rgb(40, 60, 255)"/><rect x="0" y="101" width="1" height="15" fill="rgb(135, 141, 211)"/><rect x="1" y="101" width="1" height="15" fill="rgb(173, 174, 194)"/><rect x="2" y="101" width="3" height="15" fill="rgb(40, 60, 255)"/><rect x="5" y="101" width="2" height="15" fill="rgb(144, 149, 207)"/><rect x="7" y="101" width="1" height="15" fill="rgb(40, 60, 255)"/><rect x="8" y="101" width="3" height="15" fill="rgb(92, 104, 231)"/><rect x="11" y="101" width="3" height="15" fill="rgb(191, 147, 158)"/><rect x="14" y="101" width="2" height="15" fill="rgb(177, 177, 192)"/><rect x="16" y="101" width="3" height="15" fill="rgb(154, 158, 202)"/><rect x="19" y="101" width="1" height="15" fill="rgb(127, 135, 214)"/><rect x="20" y="101" width="1" height="15" fill="rgb(159, 161, 200)"/><rect x="21" y="101" width="1" height="15" fill="rgb(54, 72, 248)"/><rect x="22" y="101" width="1" height="15" fill="rgb(102, 113, 226)"/><rect x="23" y="101" width="1" height="15" fill="rgb(187, 155, 167)"/><rect x="24" y="101" width="1" height="15" fill="rgb(122, 130, 217)"/><rect x="25" y="101" width="1" height="15" fill="rgb(196, 135, 145)"/><rect x="26" y="101" width="2" height="15" fill="rgb(182, 168, 181)"/><rect x="28" y="101" width="1" height="15" fill="rgb(148, 153, 205)"/><rect x="29" y="101" width="1" height="15" fill="rgb(168, 169, 196)"/><rect x="30" y="101" width="2" height="15" fill="rgb(176, 176, 192)"/><rect x="32" y="101" width="2" height="15" fill="rgb(87, 100, 233)"/><rect x="34" y="101" width="3" height="15" fill="rgb(149, 153, 205)"/><rect x="37" y="101" width="3" height="15" fill="rgb(40, 60, 255)"/><rect x="40" y="101" width="3" height="15" fill="rgb(108, 118, 223)"/><rect x="43" y="101" width="1" height="15" fill="rgb(187, 156, 168)"/><rect x="44" y="101" width="1" height="15" fill="rgb(125, 133, 215)"/><rect x="45" y="101" width="1" height="15" fill="rgb(187, 156, 168)"/><rect x="46" y="101" width="1" height="15" fill="rgb(152, 156, 203)"/><rect x="47" y="101" width="1" height="15" fill="rgb(255, 0, 0)"/><rect x="48" y="101" width="2" height="15" fill="rgb(249, 12, 13)"/><rect x="50" y="101" width="1" height="15" fill="rgb(255, 0, 0)"/><rect x="51" y="101" width="1" height="15" fill="rgb(207, 109, 118)"/><rect x="52" y="101" width="3" height="15" fill="rgb(241, 32, 34)"/><rect x="55" y="101" width="1" height="15" fill="rgb(141, 146, 208)"/><rect x="56" y="101" width="1" height="15" fill="rgb(74, 89, 239)"/><rect x="57" y="101" width="1" height="15" fill="rgb(135, 141, 211)"/><rect x="58" y="101" width="3" height="15" fill="rgb(255, 0, 0)"/><rect x="61" y="101" width="1" height="15" fill="rgb(254, 0, 0)"/><rect x="62" y="101" width="1" height="15" fill="rgb(235, 44, 48)"/><rect x="63" y="101" width="1" height="15" fill="rgb(255, 0, 0)"/><rect x="64" y="101" width="3" height="15" fill="rgb(255, 0, 0)"/><rect x="67" y="101" width="2" height="15" fill="rgb(196, 134, 145)"/><rect x="69" y="101" width="2" height="15" fill="rgb(208, 108, 116)"/><rect x="71" y="101" width="3" height="15" fill="rgb(219, 83, 89)"/><rect x="74" y="101" width="3" height="15" fill="rgb(249, 12, 13)"/><rect x="77" y="101" width="3" height="15" fill="rgb(187, 156, 168)"/><rect x="80" y="101" width="2" height="15" fill="rgb(185, 160, 173)"/><rect x="82" y="101" width="2" height="15" fill="rgb(178, 176, 189)"/><rect x="84" y="101" width="1" height="15" fill="rgb(121, 129, 217)"/><rect x="85" y="101" width="1" height="15" fill="rgb(182, 168, 181)"/><rect x="86" y="101" width="1" height="15" fill="rgb(202, 121, 131)"/><rect x="87" y="101" width="1" height="15" fill="rgb(97, 109, 228)"/><rect x="88" y="101" width="1" height="15" fill="rgb(125, 133, 215)"/><rect x="89" y="101" width="3" height="15" fill="rgb(233, 50, 54)"/><rect x="92" y="101" width="2" height="15" fill="rgb(193, 142, 154)"/><rect x="94" y="101" width="1" height="15" fill="rgb(206, 111, 120)"/><rect x="95" y="101" width="1" height="15" fill="rgb(228, 60, 65)"/><rect x="96" y="101" width="1" height="15" fill="rgb(207, 110, 118)"/><rect x="97" y="101" width="1" height="15" fill="rgb(94, 106, 230)"/><rect x="98" y="101" width="1" height="15" fill="rgb(229, 59, 64)"/><rect x="99" y="101" width="2" height="15" fill="rgb(219, 83, 89)"/><rect x="101" y="101" width="1" height="15" fill="rgb(175, 175, 193)"/><rect x="102" y="101" width="1" height="15" fill="rgb(170, 171, 195)"/><rect x="103" y="101" width="1" height="15" fill="rgb(169, 170, 195)"/><rect x="104" y="101" width="1" height="15" fill="rgb(115, 124, 220)"/><rect x="105" y="101" width="2" height="15" fill="rgb(123, 131, 216)"/><rect x="107" y="101" width="1" height="15" fill="rgb(255, 0, 0)"/><rect x="108" y="101" width="2" height="15" fill="rgb(125, 132, 216)"/><rect x="110" y="101" width="1" height="15" fill="rgb(166, 168, 197)"/><rect x="111" y="101" width="1" height="15" fill="rgb(255, 0, 0)"/><rect x="0" y="116" width="1" height="15" fill="rgb(40, 60, 255)"/><rect x="1" y="116" width="2" height="15" fill="rgb(187, 156, 168)"/><rect x="3" y="116" width="1" height="15" fill="rgb(235, 44, 47)"/><rect x="4" y="116" width="1" height="15" fill="rgb(102, 113, 226)"/><rect x="5" y="116" width="1" height="15" fill="rgb(169, 170, 195)"/><rect x="6" y="116" width="3" height="15" fill="rgb(215, 91, 98)"/><rect x="9" y="116" width="1" height="15" fill="rgb(196, 136, 146)"/><rect x="10" y="116" width="1" height="15" fill="rgb(155, 158, 202)"/><rect x="11" y="116" width="1" height="15" fill="rgb(103, 114, 225)"/><rect x="12" y="116" width="2" height="15" fill="rgb(216, 88, 95)"/><rect x="14" y="116" width="1" height="15" fill="rgb(230, 56, 61)"/><rect x="15" y="116" width="1" height="15" fill="rgb(40, 60, 255)"/><rect x="16" y="116" width="2" height="15" fill="rgb(61, 77, 245)"/><rect x="18" y="116" width="2" height="15" fill="rgb(183, 166, 179)"/><rect x="20" y="116" width="1" height="15" fill="rgb(201, 123, 133)"/><rect x="21" y="116" width="2" height="15" fill="rgb(164, 166, 198)"/><rect x="23" y="116" width="1" height="15" fill="rgb(177, 177, 192)"/><rect x="24" y="116" width="1" height="15" fill="rgb(152, 156, 203)"/><rect x="25" y="116" width="3" height="15" fill="rgb(40, 60, 255)"/><rect x="28" y="116" width="1" height="15" fill="rgb(96, 108, 229)"/><rect x="29" y="116" width="1" height="15" fill="rgb(249, 12, 13)"/><rect x="30" y="116" width="1" height="15" fill="rgb(102, 113, 226)"/><rect x="31" y="116" width="2" height="15" fill="rgb(222, 74, 80)"/><rect x="33" y="116" width="1" height="15" fill="rgb(227, 63, 68)"/><rect x="34" y="116" width="2" height="15" fill="rgb(201, 124, 133)"/><rect x="36" y="116" width="3" height="15" fill="rgb(215, 91, 98)"/><rect x="39" y="116" width="3" height="15" fill="rgb(70, 86, 241)"/><rect x="42" y="116" width="1" height="15" fill="rgb(62, 78, 244)"/><rect x="43" y="116" width="1" height="15" fill="rgb(66, 82, 243)"/><rect x="44" y="116" width="3" height="15" fill="rgb(40, 60, 255)"/><rect x="47" y="116" width="1" height="15" fill="rgb(245, 22, 24)"/><rect x="48" y="116" width="1" height="15" fill="rgb(255, 0, 0)"/><rect x="49" y="116" width="1" height="15" fill="rgb(223, 71, 77)"/><rect x="50" y="116" width="1" height="15" fill="rgb(255, 0, 0)"/><rect x="51" y="116" width="3" height="15" fill="rgb(255, 0, 0)"/><rect x="54" y="116" width="1" height="15" fill="rgb(255, 0, 0)"/><rect x="55" y="116" width="3" height="15" fill="rgb(250, 10, 11)"/><rect x="58" y="116" width="2" height="15" fill="rgb(255, 0, 0)"/><rect x="60" y="116" width="1" height="15" fill="rgb(255, 0, 0)"/><rect x="61" y="116" width="1" height="15" fill="rgb(184, 162, 174)"/><rect x="62" y="116" width="2" height="15" fill="rgb(198, 130, 140)"/><rect x="64" y="116" width="3" height="15" fill="rgb(217, 87, 94)"/><rect x="67" y="116" width="2" height="15" fill="rgb(255, 0, 0)"/><rect x="69" y="116" width="1" height="15" fill="rgb(165, 167, 197)"/><rect x="70" y="116" width="1" height="15" fill="rgb(255, 0, 0)"/><rect x="71" y="116" width="2" height="15" fill="rgb(224, 69, 75)"/><rect x="73" y="116" width="2" height="15" fill="rgb(238, 37, 40)"/><rect x="75" y="116" width="1" height="15" fill="rgb(92, 105, 230)"/><rect x="76" y="116" width="2" height="15" fill="rgb(193, 142, 153)"/><rect x="78" y="116" width="3" height="15" fill="rgb(220, 79, 85)"/><rect x="81" y="116" width="3" height="15" fill="rgb(40, 60, 255)"/><rect x="84" y="116" width="1" height="15" fill="rgb(158, 161, 200)"/><rect x="85" y="116" width="1" height="15" fill="rgb(192, 144, 155)"/><rect x="86" y="116" width="1" height="15" fill="rgb(81, 95, 236)"/><rect x="87" y="116" width="2" height="15" fill="rgb(247, 17, 18)"/><rect x="89" y="116" width="2" height="15" fill="rgb(171, 172, 194)"/><rect x="91" y="116" width="1" height="15" fill="rgb(164, 166, 198)"/><rect x="92" y="116" width="1" height="15" fill="rgb(219, 82, 89)"/><rect x="93" y="116" width="2" height="15" fill="rgb(149, 153, 204)"/><rect x="95" y="116" width="2" height="15" fill="rgb(253, 4, 4)"/><rect x="97" y="116" width="1" height="15" fill="rgb(221, 78, 84)"/><rect x="98" y="116" width="2" height="15" fill="rgb(207, 110, 119)"/><rect x="100" y="116" width="3" height="15" fill="rgb(170, 171, 195)"/><rect x="103" y="116" width="1" height="15" fill="rgb(255, 0, 0)"/><rect x="104" y="116" width="3" height="15" fill="rgb(180, 173, 186)"/><rect x="107" y="116" width="1" height="15" fill="rgb(229, 58, 63)"/><rect x="108" y="116" width="1" height="15" fill="rgb(255, 0, 0)"/><rect x="109" y="116" width="1" height="15" fill="rgb(255, 0, 0)"/><rect x="110" y="116" width="1" height="15" fill="rgb(133, 139, 212)"/><rect x="111" y="116" width="2" height="15" fill="rgb(208, 106, 115)"/></svg>
<div style="left:113px;top:5px;width:35px;height:1px;background:#000;"></div>
<div style="left:113px;top:6px;width:35px;height:1px;background:#777;"></div>
<div style="left:113px;top:20px;width:35px;height:1px;background:#000;"></div>
<div style="left:113px;top:21px;width:35px;height:1px;background:#777;"></div>
<div style="left:113px;top:35px;width:35px;height:1px;background:#000;"></div>
<div style="left:113px;top:36px;width:35px;height:1px;background:#777;"></div>
<div style="left:113px;top:50px;width:35px;height:1px;background:#000;"></div>
<div style="left:113px;top:51px;width:35px;height:1px;background:#777;"></div>
<div style="left:113px;top:64px;width:35px;height:1px;background:#000;"></div>
<div style="left:113px;top:65px;width:35px;height:1px;background:#777;"></div>
<div style="left:113px;top:79px;width:35px;height:1px;background:#000;"></div>
<div style="left:113px;top:80px;width:35px;height:1px;background:#777;"></div>
<div style="left:113px;top:94px;width:35px;height:1px;background:#000;"></div>
<div style="left:113px;top:95px;width:35px;height:1px;background:#777;"></div>
<div style="left:113px;top:109px;width:35px;height:1px;background:#000;"></div>
<div style="left:113px;top:110px;width:35px;height:1px;background:#777;"></div>
<div style="left:113px;top:123px;width:35px;height:1px;background:#000;"></div>
<div style="left:113px;top:124px;width:35px;height:1px;background:#777;"></div>
<svg style="left:0;top:0" width="113" height="340"><rect x="0" y="137.5" width="112.5" height="7" fill="#000"/><line x1="2.5" y1="155" x2="2.5" y2="164.4" stroke="#000" stroke-width="1.7" stroke-linecap="square"/><line x1="0" y1="164.4" x2="2.5" y2="164.4" stroke="#000" stroke-width="1.7" stroke-linecap="square"/><line x1="-0.10000000000000009" y1="155" x2="5.1" y2="155" stroke="#000" stroke-width="1.7" stroke-linecap="square"/><line x1="-0.10000000000000009" y1="155" x2="-0.10000000000000009" y2="143" stroke="#000" stroke-width="1.7" stroke-linecap="square"/><line x1="2.8999999999999995" y1="151.5" x2="7.3" y2="151.5" stroke="#000" stroke-width="1.7" stroke-linecap="square"/><line x1="2.8999999999999995" y1="151.5" x2="2.8999999999999995" y2="143" stroke="#000" stroke-width="1.7" stroke-linecap="square"/><line x1="5.1" y1="147.3" x2="9.5" y2="147.3" stroke="#000" stroke-width="1.7" stroke-linecap="square"/><line x1="5.1" y1="147.3" x2="5.1" y2="143" stroke="#000" stroke-width="1.7" stroke-linecap="square"/><line x1="9.5" y1="143" x2="9.5" y2="144.99" stroke="#000" stroke-width="1.7" stroke-linecap="square"/><line x1="9.5" y1="147.3" x2="9.5" y2="144.99" stroke="#000" stroke-width="1.7" stroke-linecap="square"/><line x1="7.3" y1="151.5" x2="7.3" y2="147.3" stroke="#000" stroke-width="1.7" stroke-linecap="square"/><line x1="5.1" y1="155" x2="5.1" y2="151.5" stroke="#000" stroke-width="1.7" stroke-linecap="square"/><line x1="9.5" y1="155.4" x2="16.5" y2="155.4" stroke="#000" stroke-width="1.7" stroke-linecap="square"/><line x1="7.7" y1="150" x2="11.3" y2="150" stroke="#000" stroke-width="1.7" stroke-linecap="square"/><line x1="7.7" y1="143" x2="7.7" y2="145.8" stroke="#000" stroke-width="1.7" stroke-linecap="square"/><line x1="7.7" y1="150" x2="7.7" y2="145.8" stroke="#000" stroke-width="1.7" stroke-linecap="square"/><line x1="11.3" y1="143" x2="11.3" y2="145.8" stroke="#000" stroke-width="1.7" stroke-linecap="square"/><line x1="11.3" y1="150" x2="11.3" y2="145.8" stroke="#000" stroke-width="1.7" stroke-linecap="square"/><line x1="14.7" y1="149" x2="18.3" y2="149" stroke="#000" stroke-width="1.7" stroke-linecap="square"/><line x1="14.7" y1="143" x2="14.7" y2="145.5" stroke="#000" stroke-width="1.7" stroke-linecap="square"/><line x1="14.7" y1="149" x2="14.7" y2="145.5" stroke="#000" stroke-width="1.7" stroke-linecap="square"/><line x1="18.3" y1="143" x2="18.3" y2="145.5" stroke="#000" stroke-width="1.7" stroke-linecap="square"/><line x1="18.3" y1="149" x2="18.3" y2="145.5" stroke="#000" stroke-width="1.7" stroke-linecap="square"/><line x1="9.5" y1="155.4" x2="9.5" y2="150" stroke="#000" stroke-width="1.7" stroke-linecap="square"/><line x1="16.5" y1="155.4" x2="16.5" y2="149" stroke="#000" stroke-width="1.7" stroke-linecap="square"/><line x1="13" y1="155.4" x2="13" y2="164.4" stroke="#000" stroke-width="1.7" stroke-linecap="square"/><line x1="22.4" y1="155" x2="22.4" y2="164.4" stroke="#000" stroke-width="1.7" stroke-linecap="square"/><line x1="20.2" y1="155" x2="24.599999999999998" y2="155" stroke="#000" stroke-width="1.7" stroke-linecap="square"/><line x1="20.2" y1="155" x2="20.2" y2="143" stroke="#000" stroke-width="1.7" stroke-linecap="square"/><line x1="21.999999999999996" y1="147.3" x2="27.2" y2="147.3" stroke="#000" stroke-width="1.7" stroke-linecap="square"/><line x1="21.999999999999996" y1="143" x2="21.999999999999996" y2="144.99" stroke="#000" stroke-width="1.7" stroke-linecap="square"/><line x1="21.999999999999996" y1="147.3" x2="21.999999999999996" y2="144.99" stroke="#000" stroke-width="1.7" stroke-linecap="square"/><line x1="27.2" y1="143" x2="27.2" y2="144.99" stroke="#000" stroke-width="1.7" stroke-linecap="square"/><line x1="27.2" y1="147.3" x2="27.2" y2="144.99" stroke="#000" stroke-width="1.7" stroke-linecap="square"/><line x1="24.599999999999998" y1="155" x2="24.599999999999998" y2="147.3" stroke="#000" stroke-width="1.7" stroke-linecap="square"/><line x1="13" y1="164.4" x2="22.4" y2="164.4" stroke="#000" stroke-width="1.7" stroke-linecap="square"/><line x1="17.5" y1="164.4" x2="17.5" y2="186.3" stroke="#000" stroke-width="1.7" stroke-linecap="square"/><line x1="28.4" y1="156.4" x2="28.4" y2="164.4" stroke="#000" stroke-width="1.7" stroke-linecap="square"/><line x1="26.599999999999998" y1="156.4" x2="30.2" y2="156.4" stroke="#000" stroke-width="1.7" stroke-linecap="square"/><line x1="26.599999999999998" y1="156.4" x2="26.599999999999998" y2="143" stroke="#000" stroke-width="1.7" stroke-linecap="square"/><line x1="30.2" y1="156.4" x2="30.2" y2="143" stroke="#000" stroke-width="1.7" stroke-linecap="square"/><line x1="37.4" y1="160.4" x2="37.4" y2="164.4" stroke="#000" stroke-width="1.7" stroke-linecap="square"/><line x1="35.199999999999996" y1="160.4" x2="39.6" y2="160.4" stroke="#000" stroke-width="1.7" stroke-linecap="square"/><line x1="35.199999999999996" y1="160.4" x2="35.199999999999996" y2="143" stroke="#000" stroke-width="1.7" stroke-linecap="square"/><line x1="39.6" y1="160.4" x2="39.6" y2="143" stroke="#000" stroke-width="1.7" stroke-linecap="square"/><line x1="28.4" y1="164.4" x2="37.4" y2="164.4" stroke="#000" stroke-width="1.7" stroke-linecap="square"/><line x1="32.4" y1="164.4" x2="32.4" y2="175.9" stroke="#000" stroke-width="1.7" stroke-linecap="square"/><line x1="44" y1="158.4" x2="46.4" y2="158.4" stroke="#000" stroke-width="1.7" stroke-linecap="square"/><line x1="41.4" y1="152" x2="46.6" y2="152" stroke="#000" stroke-width="1.7" stroke-linecap="square"/><line x1="38.8" y1="147.45" x2="44.0" y2="147.45" stroke="#000" stroke-width="1.7" stroke-linecap="square"/><line x1="38.8" y1="143" x2="38.8" y2="145.035" stroke="#000" stroke-width="1.7" stroke-linecap="square"/><line x1="38.8" y1="147.45" x2="38.8" y2="145.035" stroke="#000" stroke-width="1.7" stroke-linecap="square"/><line x1="44.0" y1="147.45" x2="44.0" y2="143" stroke="#000" stroke-width="1.7" stroke-linecap="square"/><line x1="41.4" y1="152" x2="41.4" y2="147.45" stroke="#000" stroke-width="1.7" stroke-linecap="square"/><line x1="44.4" y1="149.55" x2="48.800000000000004" y2="149.55" stroke="#000" stroke-width="1.7" stroke-linecap="square"/><line x1="44.4" y1="143" x2="44.4" y2="145.665" stroke="#000" stroke-width="1.7" stroke-linecap="square"/><line x1="44.4" y1="149.55" x2="44.4" y2="145.665" stroke="#000" stroke-width="1.7" stroke-linecap="square"/><line x1="48.800000000000004" y1="149.55" x2="48.800000000000004" y2="143" stroke="#000" stroke-width="1.7" stroke-linecap="square"/><line x1="46.6" y1="152" x2="46.6" y2="149.55" stroke="#000" stroke-width="1.7" stroke-linecap="square"/><line x1="44.199999999999996" y1="150" x2="48.6" y2="150" stroke="#000" stroke-width="1.7" stroke-linecap="square"/><line x1="44.199999999999996" y1="143" x2="44.199999999999996" y2="145.8" stroke="#000" stroke-width="1.7" stroke-linecap="square"/><line x1="44.199999999999996" y1="150" x2="44.199999999999996" y2="145.8" stroke="#000" stroke-width="1.7" stroke-linecap="square"/><line x1="48.6" y1="143" x2="48.6" y2="145.8" stroke="#000" stroke-width="1.7" stroke-linecap="square"/><line x1="48.6" y1="150" x2="48.6" y2="145.8" stroke="#000" stroke-width="1.7" stroke-linecap="square"/><line x1="44" y1="158.4" x2="44" y2="152" stroke="#000" stroke-width="1.7" stroke-linecap="square"/><line x1="46.4" y1="158.4" x2="46.4" y2="150" stroke="#000" stroke-width="1.7" stroke-linecap="square"/><line x1="44.8" y1="158.4" x2="44.8" y2="175.9" stroke="#000" stroke-width="1.7" stroke-linecap="square"/><line x1="32.4" y1="175.9" x2="44.8" y2="175.9" stroke="#000" stroke-width="1.7" stroke-linecap="square"/><line x1="38.9" y1="175.9" x2="38.9" y2="186.3" stroke="#000" stroke-width="1.7" stroke-linecap="square"/><line x1="52.3" y1="152" x2="52.3" y2="163.4" stroke="#000" stroke-width="1.7" stroke-linecap="square"/><line x1="49.699999999999996" y1="152" x2="54.9" y2="152" stroke="#000" stroke-width="1.7" stroke-linecap="square"/><line x1="49.699999999999996" y1="152" x2="49.699999999999996" y2="143" stroke="#000" stroke-width="1.7" stroke-linecap="square"/><line x1="54.9" y1="143" x2="54.9" y2="146.4" stroke="#000" stroke-width="1.7" stroke-linecap="square"/><line x1="54.9" y1="152" x2="54.9" y2="146.4" stroke="#000" stroke-width="1.7" stroke-linecap="square"/><line x1="59" y1="152.5" x2="64" y2="152.5" stroke="#000" stroke-width="1.7" stroke-linecap="square"/><line x1="56.4" y1="147" x2="61.6" y2="147" stroke="#000" stroke-width="1.7" stroke-linecap="square"/><line x1="56.4" y1="143" x2="56.4" y2="144" stroke="#000" stroke-width="1.7" stroke-linecap="square"/><line x1="56.4" y1="147" x2="56.4" y2="144" stroke="#000" stroke-width="1.7" stroke-linecap="square"/><line x1="61.6" y1="143" x2="61.6" y2="144" stroke="#000" stroke-width="1.7" stroke-linecap="square"/><line x1="61.6" y1="147" x2="61.6" y2="144" stroke="#000" stroke-width="1.7" stroke-linecap="square"/><line x1="61.8" y1="148" x2="66.2" y2="148" stroke="#000" stroke-width="1.7" stroke-linecap="square"/><line x1="61.8" y1="143" x2="61.8" y2="145.2" stroke="#000" stroke-width="1.7" stroke-linecap="square"/><line x1="61.8" y1="148" x2="61.8" y2="145.2" stroke="#000" stroke-width="1.7" stroke-linecap="square"/><line x1="66.2" y1="143" x2="66.2" y2="145.2" stroke="#000" stroke-width="1.7" stroke-linecap="square"/><line x1="66.2" y1="148" x2="66.2" y2="145.2" stroke="#000" stroke-width="1.7" stroke-linecap="square"/><line x1="59" y1="152.5" x2="59" y2="147" stroke="#000" stroke-width="1.7" stroke-linecap="square"/><line x1="64" y1="152.5" x2="64" y2="148" stroke="#000" stroke-width="1.7" stroke-linecap="square"/><line x1="61.8" y1="152.5" x2="61.8" y2="163.4" stroke="#000" stroke-width="1.7" stroke-linecap="square"/><line x1="52.3" y1="163.4" x2="61.8" y2="163.4" stroke="#000" stroke-width="1.7" stroke-linecap="square"/><line x1="56.4" y1="163.4" x2="56.4" y2="186.3" stroke="#000" stroke-width="1.7" stroke-linecap="square"/><line x1="0" y1="186.3" x2="17.5" y2="186.3" stroke="#000" stroke-width="1.7" stroke-linecap="square"/><line x1="38.9" y1="186.3" x2="56.4" y2="186.3" stroke="#000" stroke-width="1.7" stroke-linecap="square"/><line x1="6.6" y1="186.3" x2="6.6" y2="231" stroke="#000" stroke-width="1.7" stroke-linecap="square"/><line x1="0" y1="231" x2="6.6" y2="231" stroke="#000" stroke-width="1.7" stroke-linecap="square"/><line x1="67.5" y1="157" x2="72.5" y2="157" stroke="#000" stroke-width="1.7" stroke-linecap="square"/><line x1="65.3" y1="150" x2="69.7" y2="150" stroke="#000" stroke-width="1.7" stroke-linecap="square"/><line x1="65.3" y1="143" x2="65.3" y2="145.8" stroke="#000" stroke-width="1.7" stroke-linecap="square"/><line x1="65.3" y1="150" x2="65.3" y2="145.8" stroke="#000" stroke-width="1.7" stroke-linecap="square"/><line x1="69.7" y1="143" x2="69.7" y2="145.8" stroke="#000" stroke-width="1.7" stroke-linecap="square"/><line x1="69.7" y1="150" x2="69.7" y2="145.8" stroke="#000" stroke-width="1.7" stroke-linecap="square"/><line x1="70.3" y1="149" x2="74.7" y2="149" stroke="#000" stroke-width="1.7" stroke-linecap="square"/><line x1="70.3" y1="149" x2="70.3" y2="143" stroke="#000" stroke-width="1.7" stroke-linecap="square"/><line x1="74.7" y1="143" x2="74.7" y2="145.5" stroke="#000" stroke-width="1.7" stroke-linecap="square"/><line x1="74.7" y1="149" x2="74.7" y2="145.5" stroke="#000" stroke-width="1.7" stroke-linecap="square"/><line x1="67.5" y1="157" x2="67.5" y2="150" stroke="#000" stroke-width="1.7" stroke-linecap="square"/><line x1="72.5" y1="157" x2="72.5" y2="149" stroke="#000" stroke-width="1.7" stroke-linecap="square"/><line x1="70.5" y1="157" x2="70.5" y2="162.3" stroke="#000" stroke-width="1.7" stroke-linecap="square"/><line x1="76.5" y1="154" x2="76.5" y2="162.3" stroke="#000" stroke-width="1.7" stroke-linecap="square"/><line x1="73.9" y1="154" x2="79.1" y2="154" stroke="#000" stroke-width="1.7" stroke-linecap="square"/><line x1="73.9" y1="154" x2="73.9" y2="143" stroke="#000" stroke-width="1.7" stroke-linecap="square"/><line x1="76.89999999999999" y1="147.0" x2="81.3" y2="147.0" stroke="#000" stroke-width="1.7" stroke-linecap="square"/><line x1="76.89999999999999" y1="143" x2="76.89999999999999" y2="144" stroke="#000" stroke-width="1.7" stroke-linecap="square"/><line x1="76.89999999999999" y1="147.0" x2="76.89999999999999" y2="144" stroke="#000" stroke-width="1.7" stroke-linecap="square"/><line x1="81.3" y1="143" x2="81.3" y2="144" stroke="#000" stroke-width="1.7" stroke-linecap="square"/><line x1="81.3" y1="147.0" x2="81.3" y2="144" stroke="#000" stroke-width="1.7" stroke-linecap="square"/><line x1="79.1" y1="154" x2="79.1" y2="147.0" stroke="#000" stroke-width="1.7" stroke-linecap="square"/><line x1="70.5" y1="162.3" x2="76.5" y2="162.3" stroke="#000" stroke-width="1.7" stroke-linecap="square"/><line x1="73.3" y1="162.3" x2="73.3" y2="174.5" stroke="#000" stroke-width="1.7" stroke-linecap="square"/><line x1="81.5" y1="147" x2="81.5" y2="156.9" stroke="#000" stroke-width="1.7" stroke-linecap="square"/><line x1="79.7" y1="147" x2="83.3" y2="147" stroke="#000" stroke-width="1.7" stroke-linecap="square"/><line x1="79.7" y1="143" x2="79.7" y2="144" stroke="#000" stroke-width="1.7" stroke-linecap="square"/><line x1="79.7" y1="147" x2="79.7" y2="144" stroke="#000" stroke-width="1.7" stroke-linecap="square"/><line x1="83.3" y1="147" x2="83.3" y2="143" stroke="#000" stroke-width="1.7" stroke-linecap="square"/><line x1="87.5" y1="148" x2="87.5" y2="156.9" stroke="#000" stroke-width="1.7" stroke-linecap="square"/><line x1="84.9" y1="148" x2="90.1" y2="148" stroke="#000" stroke-width="1.7" stroke-linecap="square"/><line x1="84.9" y1="148" x2="84.9" y2="143" stroke="#000" stroke-width="1.7" stroke-linecap="square"/><line x1="90.1" y1="143" x2="90.1" y2="145.2" stroke="#000" stroke-width="1.7" stroke-linecap="square"/><line x1="90.1" y1="148" x2="90.1" y2="145.2" stroke="#000" stroke-width="1.7" stroke-linecap="square"/><line x1="81.5" y1="156.9" x2="87.5" y2="156.9" stroke="#000" stroke-width="1.7" stroke-linecap="square"/><line x1="84.5" y1="156.9" x2="84.5" y2="160.6" stroke="#000" stroke-width="1.7" stroke-linecap="square"/><line x1="93.5" y1="155.4" x2="98.5" y2="155.4" stroke="#000" stroke-width="1.7" stroke-linecap="square"/><line x1="91.7" y1="149" x2="95.3" y2="149" stroke="#000" stroke-width="1.7" stroke-linecap="square"/><line x1="91.7" y1="149" x2="91.7" y2="143" stroke="#000" stroke-width="1.7" stroke-linecap="square"/><line x1="95.3" y1="149" x2="95.3" y2="143" stroke="#000" stroke-width="1.7" stroke-linecap="square"/><line x1="96.3" y1="150" x2="100.7" y2="150" stroke="#000" stroke-width="1.7" stroke-linecap="square"/><line x1="96.3" y1="143" x2="96.3" y2="145.8" stroke="#000" stroke-width="1.7" stroke-linecap="square"/><line x1="96.3" y1="150" x2="96.3" y2="145.8" stroke="#000" stroke-width="1.7" stroke-linecap="square"/><line x1="100.7" y1="150" x2="100.7" y2="143" stroke="#000" stroke-width="1.7" stroke-linecap="square"/><line x1="93.5" y1="155.4" x2="93.5" y2="149" stroke="#000" stroke-width="1.7" stroke-linecap="square"/><line x1="98.5" y1="155.4" x2="98.5" y2="150" stroke="#000" stroke-width="1.7" stroke-linecap="square"/><line x1="96.4" y1="155.4" x2="96.4" y2="160.6" stroke="#000" stroke-width="1.7" stroke-linecap="square"/><line x1="84.5" y1="160.6" x2="96.4" y2="160.6" stroke="#000" stroke-width="1.7" stroke-linecap="square"/><line x1="90.3" y1="160.6" x2="90.3" y2="174.5" stroke="#000" stroke-width="1.7" stroke-linecap="square"/><line x1="73.3" y1="174.5" x2="90.3" y2="174.5" stroke="#000" stroke-width="1.7" stroke-linecap="square"/><line x1="81.5" y1="174.5" x2="81.5" y2="186.3" stroke="#000" stroke-width="1.7" stroke-linecap="square"/><line x1="102" y1="158.4" x2="105" y2="158.4" stroke="#000" stroke-width="1.7" stroke-linecap="square"/><line x1="99.8" y1="150" x2="104.2" y2="150" stroke="#000" stroke-width="1.7" stroke-linecap="square"/><line x1="99.8" y1="150" x2="99.8" y2="143" stroke="#000" stroke-width="1.7" stroke-linecap="square"/><line x1="104.2" y1="143" x2="104.2" y2="145.8" stroke="#000" stroke-width="1.7" stroke-linecap="square"/><line x1="104.2" y1="150" x2="104.2" y2="145.8" stroke="#000" stroke-width="1.7" stroke-linecap="square"/><line x1="102.4" y1="151" x2="107.6" y2="151" stroke="#000" stroke-width="1.7" stroke-linecap="square"/><line x1="102.4" y1="151" x2="102.4" y2="143" stroke="#000" stroke-width="1.7" stroke-linecap="square"/><line x1="107.6" y1="143" x2="107.6" y2="146.1" stroke="#000" stroke-width="1.7" stroke-linecap="square"/><line x1="107.6" y1="151" x2="107.6" y2="146.1" stroke="#000" stroke-width="1.7" stroke-linecap="square"/><line x1="102" y1="158.4" x2="102" y2="150" stroke="#000" stroke-width="1.7" stroke-linecap="square"/><line x1="105" y1="158.4" x2="105" y2="151" stroke="#000" stroke-width="1.7" stroke-linecap="square"/><line x1="103.5" y1="158.4" x2="103.5" y2="161.5" stroke="#000" stroke-width="1.7" stroke-linecap="square"/><line x1="110.7" y1="147" x2="110.7" y2="161.5" stroke="#000" stroke-width="1.7" stroke-linecap="square"/><line x1="108.9" y1="147" x2="112.5" y2="147" stroke="#000" stroke-width="1.7" stroke-linecap="square"/><line x1="108.9" y1="143" x2="108.9" y2="144" stroke="#000" stroke-width="1.7" stroke-linecap="square"/><line x1="108.9" y1="147" x2="108.9" y2="144" stroke="#000" stroke-width="1.7" stroke-linecap="square"/><line x1="112.5" y1="143" x2="112.5" y2="144" stroke="#000" stroke-width="1.7" stroke-linecap="square"/><line x1="112.5" y1="147" x2="112.5" y2="144" stroke="#000" stroke-width="1.7" stroke-linecap="square"/><line x1="103.5" y1="161.5" x2="110.7" y2="161.5" stroke="#000" stroke-width="1.7" stroke-linecap="square"/><line x1="107.3" y1="161.5" x2="107.3" y2="186.3" stroke="#000" stroke-width="1.7" stroke-linecap="square"/><line x1="81.5" y1="186.3" x2="107.3" y2="186.3" stroke="#000" stroke-width="1.7" stroke-linecap="square"/><line x1="47.4" y1="186.3" x2="47.4" y2="222.3" stroke="#000" stroke-width="1.7" stroke-linecap="square"/><line x1="94.5" y1="186.3" x2="94.5" y2="222.3" stroke="#000" stroke-width="1.7" stroke-linecap="square"/><line x1="47.4" y1="222.3" x2="94.5" y2="222.3" stroke="#000" stroke-width="1.7" stroke-linecap="square"/><line x1="71.4" y1="222.3" x2="71.4" y2="320" stroke="#000" stroke-width="1.7" stroke-linecap="square"/><line x1="0" y1="320" x2="71.4" y2="320" stroke="#000" stroke-width="1.7" stroke-linecap="square"/></svg>
<div style="left:25px;top:338px;width:88px;height:172px;background:#000;"></div>
<div style="left:113px;top:338px;width:35px;height:55px;background:#fff;border-top:1px solid #a0a0a0;border-bottom:1px solid #a0a0a0;"></div>
<div style="left:126px;top:362px;width:22px;height:1px;background:#3060ff;"></div>
<div style="left:163px;top:0px;width:1329px;height:536px;background:#fff;border-left:1px solid #8a8a8a;border-top:1px solid #666;border-right:1px solid #5a5a4a;border-bottom:1px solid #6a6a6a;"></div>
<svg style="left:172px;top:8px" width="17" height="16"><rect x="0.5" y="0.5" width="14" height="12" fill="#fff" stroke="#1e5aa8" stroke-width="1.2"/><path d="M1 4.5H14M1 8.5H14M4.5 1V12M8.5 1V12" stroke="#9ab" stroke-width="0.8"/><path d="M1 4.5H5M4.5 1V5" stroke="#e33" stroke-width="0.8"/><circle cx="9" cy="6.5" r="1.6" fill="#000"/><path d="M8 11L16 9M11 7L13 15" stroke="#1e7ad0" stroke-width="1.6"/></svg>
<span class="t" style="left:194px;top:9px;font-size:12.3px;color:#8c8c8c;font-weight:400;letter-spacing:-0.15px;transform:scaleX(0.9);transform-origin:0 0;">GSE11352_Wide_1 - JMP Pro</span>
<div style="left:1372px;top:15px;width:10px;height:1px;background:#6a6a6a;"></div>
<div style="left:1417px;top:10px;width:10px;height:10px;background:transparent;border:1px solid #6a6a6a;"></div>
<svg style="left:1462px;top:9px" width="12" height="12"><path d="M1 1L11 11M11 1L1 11" stroke="#6a6a6a" stroke-width="1"/></svg>
<div style="left:164px;top:31px;width:1327px;height:17px;background:#f0f0f0;"></div>
<span class="t" style="left:171px;top:33px;font-size:12px;color:#1c1c1c;font-weight:400;letter-spacing:-0.2px;">File</span>
<span class="t" style="left:203px;top:33px;font-size:12px;color:#1c1c1c;font-weight:400;letter-spacing:-0.2px;">Edit</span>
<span class="t" style="left:237px;top:33px;font-size:12px;color:#1c1c1c;font-weight:400;letter-spacing:-0.2px;">Tables</span>
<span class="t" style="left:283px;top:33px;font-size:12px;color:#1c1c1c;font-weight:400;letter-spacing:-0.2px;">Rows</span>
<span class="t" style="left:325px;top:33px;font-size:12px;color:#1c1c1c;font-weight:400;letter-spacing:-0.2px;">Cols</span>
<span class="t" style="left:362px;top:33px;font-size:12px;color:#1c1c1c;font-weight:400;letter-spacing:-0.2px;">DOE</span>
<span class="t" style="left:399px;top:33px;font-size:12px;color:#1c1c1c;font-weight:400;letter-spacing:-0.2px;">Analyze</span>
<span class="t" style="left:454px;top:33px;font-size:12px;color:#1c1c1c;font-weight:400;letter-spacing:-0.2px;">Graph</span>
<span class="t" style="left:499px;top:33px;font-size:12px;color:#1c1c1c;font-weight:400;letter-spacing:-0.2px;">Tools</span>
<span class="t" style="left:540px;top:33px;font-size:12px;color:#1c1c1c;font-weight:400;letter-spacing:-0.2px;">Add-Ins</span>
<span class="t" style="left:597px;top:33px;font-size:12px;color:#1c1c1c;font-weight:400;letter-spacing:-0.2px;">View</span>
<span class="t" style="left:636px;top:33px;font-size:12px;color:#1c1c1c;font-weight:400;letter-spacing:-0.2px;">Window</span>
<span class="t" style="left:694px;top:33px;font-size:12px;color:#1c1c1c;font-weight:400;letter-spacing:-0.2px;">Help</span>
<div style="left:164px;top:48px;width:1327px;height:28px;background:#d4daed;"></div>
<div style="left:167px;top:49px;width:255px;height:25px;background:#eaedf7;border-radius:3px;"></div>
<div style="left:426px;top:49px;width:174px;height:25px;background:#eaedf7;border-radius:3px;"></div>
<div style="left:170px;top:53px;width:2px;height:2px;background:#555;"></div>
<div style="left:170px;top:57px;width:2px;height:2px;background:#555;"></div>
<div style="left:170px;top:61px;width:2px;height:2px;background:#555;"></div>
<div style="left:170px;top:65px;width:2px;height:2px;background:#555;"></div>
<div style="left:429px;top:53px;width:2px;height:2px;background:#555;"></div>
<div style="left:429px;top:57px;width:2px;height:2px;background:#555;"></div>
<div style="left:429px;top:61px;width:2px;height:2px;background:#555;"></div>
<div style="left:429px;top:65px;width:2px;height:2px;background:#555;"></div>
<svg style="left:176px;top:52px" width="18" height="18"><rect x="1.5" y="2.5" width="14" height="12" fill="#fff" stroke="#1d5cad" stroke-width="1.4"/><path d="M2 6.5H15M2 10.5H15M6 3V14M10.5 3V14" stroke="#c9d4e6" stroke-width="1"/><path d="M2 6.5H6M2 10.5H6" stroke="#f29" stroke-width="0.7"/><rect x="0" y="0" width="7" height="7" fill="#f7d768" opacity="0.9"/><circle cx="10" cy="8.5" r="1.5" fill="#000"/><path d="M8 13H17M13 9V17" stroke="#1d7fd0" stroke-width="1.6"/></svg>
<svg style="left:198px;top:52px" width="18" height="18"><path d="M5 3H12L16 7V17H5Z" fill="#eaf2fb" stroke="#2b6cc0" stroke-width="1.2"/><rect x="0" y="0" width="7" height="7" fill="#f7d768" opacity="0.9"/><circle cx="5" cy="12" r="2.5" fill="none" stroke="#777" stroke-width="1.3"/><path d="M7 10H13" stroke="#666" stroke-width="1.5"/></svg>
<svg style="left:221px;top:52px" width="18" height="18"><path d="M1 5H7L8 6H13V15H1Z" fill="#f5d27a" stroke="#8c7a40" stroke-width="0.8"/><path d="M3 9H17L14 16H1Z" fill="#f2b53a" stroke="#7a6020" stroke-width="0.8"/><path d="M10 3Q13 0 15 3" stroke="#2a5aa0" fill="none" stroke-width="1.2"/></svg>
<svg style="left:243px;top:53px" width="16" height="16"><rect x="1" y="1" width="14" height="14" fill="#d8dcf0" stroke="#c6cbe6"/><rect x="4" y="2" width="8" height="5" fill="#eef0fa"/><rect x="5" y="10" width="6" height="4" fill="#eef0fa"/></svg>
<div style="left:264px;top:52px;width:1px;height:18px;background:#9aa0b4;"></div>
<svg style="left:272px;top:53px" width="13" height="16"><path d="M3 1L8 10M10 1L5 10" stroke="#777" stroke-width="1.5"/><circle cx="4" cy="12" r="2.3" fill="#2a55c0"/><circle cx="9" cy="12" r="2.3" fill="#2a55c0"/></svg>
<svg style="left:291px;top:53px" width="17" height="16"><path d="M1 1H7L9 3V11H1Z" fill="#fff" stroke="#3a6cc8"/><path d="M6 5H12L15 8V15H6Z" fill="#fff" stroke="#2a55b0"/><path d="M3 5H7M3 7H7M8 9H13M8 11H13M8 13H13" stroke="#3a6cc8" stroke-width="0.9"/></svg>
<svg style="left:313px;top:52px" width="18" height="17"><rect x="1" y="2" width="11" height="13" fill="#f2c04a" stroke="#8a6a20"/><rect x="4" y="1" width="5" height="3" fill="#eee" stroke="#666" stroke-width="0.8"/><path d="M7 8H13L16 11V16H7Z" fill="#fff" stroke="#444"/><path d="M9 11H13M9 13H14" stroke="#3a6cc8" stroke-width="0.9"/></svg>
<div style="left:335px;top:52px;width:1px;height:18px;background:#9aa0b4;"></div>
<svg style="left:340px;top:53px" width="17" height="16"><rect x="1" y="1" width="15" height="14" rx="1.5" fill="none" stroke="#cfd2dc"/><path d="M5 5H12M5 11H12" stroke="#cfd2dc"/><circle cx="7" cy="5" r="1.5" fill="none" stroke="#cfd2dc"/><circle cx="10" cy="11" r="1.5" fill="none" stroke="#cfd2dc"/></svg>
<svg style="left:364px;top:53px" width="14" height="16"><path d="M3 7V4.5A3.5 3.5 0 0 1 10 4.5V7" fill="none" stroke="#d0d3dd" stroke-width="1.4"/><rect x="1.5" y="7" width="10" height="8" rx="1" fill="none" stroke="#d0d3dd" stroke-width="1.2"/></svg>
<div style="left:384px;top:52px;width:1px;height:18px;background:#9aa0b4;"></div>
<svg style="left:390px;top:53px" width="16" height="16"><circle cx="6" cy="6" r="4.3" fill="none" stroke="#222" stroke-width="1.8"/><path d="M9 9L14 14" stroke="#222" stroke-width="2"/></svg>
<svg style="left:413px;top:64px" width="7" height="7"><path d="M0.5 1.5H6.5" stroke="#666" stroke-width="1"/><path d="M0 3.5H7L3.5 6.5Z" fill="#666"/></svg>
<svg style="left:591px;top:64px" width="7" height="7"><path d="M0.5 1.5H6.5" stroke="#666" stroke-width="1"/><path d="M0 3.5H7L3.5 6.5Z" fill="#666"/></svg>
<svg style="left:435px;top:52px" width="18" height="17"><path d="M2 1H13L16 4V16H2Z" fill="#dfe8f6" stroke="#5a7ec0" stroke-width="1"/><path d="M2 5H16M2 12H16M6 1V16M10 1V16" stroke="#9fb7de" stroke-width="0.8"/><rect x="0.5" y="7.5" width="17" height="4" fill="#f4e04a" stroke="#e0601a" stroke-width="1.2"/><path d="M4 1V16" stroke="#e33" stroke-width="0.8"/></svg>
<svg style="left:458px;top:52px" width="16" height="17"><rect x="1" y="1" width="14" height="15" fill="#f4f4f4" stroke="#888"/><rect x="6" y="3" width="7" height="1.5" fill="#2a4a8a"/><path d="M2 6.5H14" stroke="#e88" stroke-width="1"/><path d="M4 9V14M7.5 9V14M11 9V14" stroke="#2a4a8a" stroke-width="1.2" stroke-dasharray="1.2 1.3"/></svg>
<svg style="left:479px;top:52px" width="17" height="17"><rect x="1" y="1" width="15" height="15" fill="#f7f7f7" stroke="#777"/><path d="M8.5 1V16M1 8.5H16" stroke="#777"/><path d="M3 7H7V4H5V6H3Z" fill="#6aa84f"/><path d="M10 4V7H14V6H12V4Z" fill="#6aa84f"/><path d="M3 11V15H7V13H5V11Z" fill="#6aa84f"/><path d="M10 15H14V10H12V13H10Z" fill="#6aa84f"/></svg>
<svg style="left:502px;top:53px" width="17" height="16"><rect x="1" y="0" width="1.6" height="16" fill="#2a4a8a"/><rect x="3" y="1" width="10" height="3.5" fill="#7cba4a"/><rect x="3" y="6" width="14" height="3.5" fill="#7cba4a"/><rect x="3" y="11" width="8" height="3.5" fill="#7cba4a"/></svg>
<svg style="left:524px;top:52px" width="16" height="17"><path d="M1.5 1V15.5H15.5" fill="none" stroke="#2a4a8a" stroke-width="1.3"/><text x="4" y="7" font-family="Liberation Serif" font-weight="700" font-size="8" fill="#000">y</text><text x="9" y="14" font-family="Liberation Serif" font-weight="700" font-size="8" fill="#000">x</text></svg>
<svg style="left:546px;top:52px" width="17" height="17"><rect x="7" y="5" width="9" height="7" fill="#7cba4a"/><path d="M2.5 3L8 8.5M2.5 8.5H8M2.5 14L8 8.5" stroke="#3a5a8a" stroke-width="0.9"/><rect x="0.5" y="1" width="3" height="3" fill="#dde" stroke="#889" stroke-width="0.6"/><rect x="0.5" y="7" width="3" height="3" fill="#dde" stroke="#889" stroke-width="0.6"/><rect x="0.5" y="13" width="3" height="3" fill="#dde" stroke="#889" stroke-width="0.6"/></svg>
<svg style="left:569px;top:52px" width="17" height="18"><path d="M1 3H11V17H1Z" fill="#f6f8fb" stroke="#5a6a80"/><path d="M3 6H8M3 9H8M3 12H7" stroke="#5a6a80" stroke-width="0.8"/><path d="M5 15L14 4L16 6L7 16Z" fill="#b0b0b0" stroke="#555" stroke-width="0.7"/><path d="M14 4L15.5 2.5L17 4L16 6Z" fill="#f39a3a"/></svg>
<div style="left:164px;top:76px;width:1327px;height:459px;background:#d9d9d9;"></div>
<div style="left:305px;top:76px;width:1186px;height:4px;background:#7a7a7a;"></div>
<div style="left:302px;top:76px;width:3px;height:370px;background:#b8b8b8;"></div>
<div style="left:164px;top:81px;width:138px;height:17px;background:#efefef;border-top:1px solid #c0c0c0;border-bottom:1px solid #a8a8a8;border-left:1px solid #d0d0d0;border-right:1px solid #d0d0d0;"></div>
<div style="left:167px;top:84px;width:13px;height:11px;background:#fafafa;border:1px solid #b8b8b8;border-radius:3px;"></div>
<svg style="left:169px;top:87px" width="9" height="6"><path d="M0.5 0.5H8.5L4.5 5Z" fill="#d40000"/></svg>
<span class="t" style="left:184px;top:83px;font-size:12px;color:#000;font-weight:400;letter-spacing:-0.45px;">GSE11352_Wide_1</span>
<svg style="left:291px;top:82px" width="9" height="13"><path d="M1 1L7.5 6.5L1 12Z" fill="none" stroke="#666" stroke-width="1.1"/></svg>
<div style="left:164px;top:98px;width:138px;height:30px;background:#f7f7f7;"></div>
<svg style="left:169px;top:100px" width="10" height="12"><path d="M1 1L9 6L1 11Z" fill="#3fa34d" stroke="#2b7a36" stroke-width="0.6"/></svg>
<span class="t" style="left:187px;top:100px;font-size:12px;color:#000;font-weight:400;letter-spacing:-0.1px;">Source</span>
<div style="left:164px;top:128px;width:138px;height:3px;background:#b8b8b8;"></div>
<div style="left:164px;top:136px;width:138px;height:18px;background:#efefef;border-top:1px solid #a8a8a8;border-bottom:1px solid #a8a8a8;border-left:1px solid #d0d0d0;border-right:1px solid #d0d0d0;"></div>
<div style="left:167px;top:139px;width:13px;height:12px;background:#fafafa;border:1px solid #b8b8b8;border-radius:3px;"></div>
<svg style="left:169px;top:142px" width="9" height="6"><path d="M0.5 0.5H8.5L4.5 5Z" fill="#d40000"/></svg>
<span class="t" style="left:184px;top:138px;font-size:12px;color:#000;font-weight:400;letter-spacing:-0.3px;">Columns (109359/7...</span>
<div style="left:164px;top:154px;width:138px;height:22px;background:#f7f7f7;"></div>
<svg style="left:166px;top:160px" width="10" height="10"><circle cx="4" cy="4" r="2.8" fill="none" stroke="#222" stroke-width="1.3"/><path d="M6 6L9 9" stroke="#222" stroke-width="1.5"/></svg>
<div style="left:164px;top:176px;width:138px;height:1px;background:#111;"></div>
<div style="left:164px;top:177px;width:138px;height:151px;background:#f7f7f7;"></div>
<div style="left:285px;top:177px;width:17px;height:151px;background:#ececec;"></div>
<svg style="left:288px;top:181px" width="11" height="7"><path d="M1 6L5.5 1.5L10 6" fill="none" stroke="#aaa" stroke-width="1.1"/></svg>
<div style="left:285px;top:194px;width:17px;height:8px;background:#c8c8c8;"></div>
<svg style="left:288px;top:318px" width="11" height="7"><path d="M1 1L5.5 5.5L10 1" fill="none" stroke="#aaa" stroke-width="1.1"/></svg>
<div style="left:181px;top:257px;width:91px;height:16px;background:#bcdcf8;"></div>
<svg style="left:166px;top:178px" width="13" height="12"><rect x="1" y="3" width="3.5" height="8" fill="#d42a1a"/><rect x="4.8" y="0" width="3.5" height="11" fill="#d42a1a"/><rect x="8.6" y="6" width="3.5" height="5" fill="#d42a1a"/><path d="M1 11.5H12.5" stroke="#6a3a30" stroke-width="0.8"/></svg>
<span class="t" style="left:183px;top:178px;font-size:12px;color:#000;font-weight:400;letter-spacing:-0.12px;">Match Flag</span>
<svg style="left:166px;top:194px" width="13" height="12"><rect x="1" y="3" width="3.5" height="8" fill="#d42a1a"/><rect x="4.8" y="0" width="3.5" height="11" fill="#d42a1a"/><rect x="8.6" y="6" width="3.5" height="5" fill="#d42a1a"/><path d="M1 11.5H12.5" stroke="#6a3a30" stroke-width="0.8"/></svg>
<span class="t" style="left:183px;top:194px;font-size:12px;color:#000;font-weight:400;letter-spacing:-0.12px;">title</span>
<svg style="left:166px;top:210px" width="13" height="12"><rect x="1" y="3" width="3.5" height="8" fill="#d42a1a"/><rect x="4.8" y="0" width="3.5" height="11" fill="#d42a1a"/><rect x="8.6" y="6" width="3.5" height="5" fill="#d42a1a"/><path d="M1 11.5H12.5" stroke="#6a3a30" stroke-width="0.8"/></svg>
<span class="t" style="left:183px;top:210px;font-size:12px;color:#000;font-weight:400;letter-spacing:-0.32px;">geo_accession</span>
<svg style="left:166px;top:226px" width="13" height="12"><rect x="1" y="3" width="3.5" height="8" fill="#d42a1a"/><rect x="4.8" y="0" width="3.5" height="11" fill="#d42a1a"/><rect x="8.6" y="6" width="3.5" height="5" fill="#d42a1a"/><path d="M1 11.5H12.5" stroke="#6a3a30" stroke-width="0.8"/></svg>
<span class="t" style="left:183px;top:226px;font-size:12px;color:#000;font-weight:400;letter-spacing:-0.12px;">Time</span>
<svg style="left:166px;top:242px" width="13" height="12"><rect x="1" y="3" width="3.5" height="8" fill="#d42a1a"/><rect x="4.8" y="0" width="3.5" height="11" fill="#d42a1a"/><rect x="8.6" y="6" width="3.5" height="5" fill="#d42a1a"/><path d="M1 11.5H12.5" stroke="#6a3a30" stroke-width="0.8"/></svg>
<span class="t" style="left:183px;top:242px;font-size:12px;color:#000;font-weight:400;letter-spacing:-0.12px;">Treatment</span>
<svg style="left:166px;top:258px" width="13" height="12"><rect x="1" y="3" width="3.5" height="8" fill="#d42a1a"/><rect x="4.8" y="0" width="3.5" height="11" fill="#d42a1a"/><rect x="8.6" y="6" width="3.5" height="5" fill="#d42a1a"/><path d="M1 11.5H12.5" stroke="#6a3a30" stroke-width="0.8"/></svg>
<span class="t" style="left:183px;top:258px;font-size:12px;color:#000;font-weight:400;letter-spacing:-0.12px;">Time+Treatment</span>
<svg style="left:166px;top:275px" width="13" height="12"><path d="M1 11L12 1V11Z" fill="#3566b8"/></svg>
<span class="t" style="left:183px;top:274px;font-size:12px;color:#000;font-weight:400;letter-spacing:-0.12px;">Treated</span>
<svg style="left:166px;top:290px" width="13" height="12"><rect x="1" y="3" width="3.5" height="8" fill="#d42a1a"/><rect x="4.8" y="0" width="3.5" height="11" fill="#d42a1a"/><rect x="8.6" y="6" width="3.5" height="5" fill="#d42a1a"/><path d="M1 11.5H12.5" stroke="#6a3a30" stroke-width="0.8"/></svg>
<span class="t" style="left:183px;top:290px;font-size:12px;color:#000;font-weight:400;letter-spacing:-0.12px;">ch1</span>
<svg style="left:170px;top:308px" width="9" height="13"><path d="M1.5 1L7 6L1.5 11Z" fill="none" stroke="#777" stroke-width="1.1"/></svg>
<span class="t" style="left:183px;top:306px;font-size:12px;color:#000;font-weight:400;letter-spacing:-0.12px;">Transcri...54675/0)</span>
<svg style="left:166px;top:323px" width="13" height="12"><path d="M1 11L12 1V11Z" fill="#3566b8"/></svg>
<span class="t" style="left:183px;top:322px;font-size:12px;color:#000;font-weight:400;letter-spacing:-0.12px;">Log2[1007_s_at]</span>
<svg style="left:244px;top:179px" width="13" height="13"><path d="M6.3 0.5V12.5M1.1 3.5L11.5 9.5M1.1 9.5L11.5 3.5" stroke="#000" stroke-width="2.3"/></svg>
<svg style="left:259px;top:210px" width="16" height="13"><path d="M4 6L7 2.5H14.5V9.5H7Z" fill="#f7c53a" stroke="#2a2a50" stroke-width="1"/><path d="M6.5 5.5A1.6 1.6 0 1 0 6.6 5.6" fill="#fff" stroke="#222" stroke-width="0.8"/><path d="M5.5 5Q1 7 3.5 11" fill="none" stroke="#2a2a50" stroke-width="0.9"/></svg>
<div style="left:164px;top:328px;width:138px;height:8px;background:#d8d8d8;"></div>
<div style="left:164px;top:328px;width:138px;height:3px;background:#b8b8b8;"></div>
<svg style="left:269px;top:321px" width="14" height="8"><path d="M1 6.5H13M7 1V6.5M4 6.5V3H10V6.5" stroke="#1e2a60" stroke-width="1.6" fill="none"/></svg>
<div style="left:164px;top:336px;width:138px;height:18px;background:#efefef;border-top:1px solid #a8a8a8;border-bottom:1px solid #a8a8a8;border-left:1px solid #d0d0d0;border-right:1px solid #d0d0d0;"></div>
<div style="left:167px;top:339px;width:13px;height:12px;background:#fafafa;border:1px solid #b8b8b8;border-radius:3px;"></div>
<svg style="left:169px;top:342px" width="9" height="6"><path d="M0.5 0.5H8.5L4.5 5Z" fill="#d40000"/></svg>
<span class="t" style="left:184px;top:338px;font-size:12px;color:#000;font-weight:400;letter-spacing:0px;">Rows</span>
<div style="left:164px;top:354px;width:138px;height:91px;background:#f7f7f7;"></div>
<span class="t" style="left:168px;top:355px;font-size:12px;color:#000;font-weight:400;letter-spacing:-0.1px;">All rows</span>
<span class="t" style="right:1194px;top:355px;font-size:12px;color:#000;font-weight:400;letter-spacing:0px;">18</span>
<span class="t" style="left:168px;top:370px;font-size:12px;color:#000;font-weight:400;letter-spacing:-0.1px;">Selected</span>
<span class="t" style="right:1194px;top:370px;font-size:12px;color:#000;font-weight:400;letter-spacing:0px;">0</span>
<span class="t" style="left:168px;top:385px;font-size:12px;color:#000;font-weight:400;letter-spacing:-0.1px;">Excluded</span>
<span class="t" style="right:1194px;top:385px;font-size:12px;color:#000;font-weight:400;letter-spacing:0px;">0</span>
<span class="t" style="left:168px;top:400px;font-size:12px;color:#000;font-weight:400;letter-spacing:-0.1px;">Hidden</span>
<span class="t" style="right:1194px;top:400px;font-size:12px;color:#000;font-weight:400;letter-spacing:0px;">0</span>
<span class="t" style="left:168px;top:415px;font-size:12px;color:#000;font-weight:400;letter-spacing:-0.1px;">Labeled</span>
<span class="t" style="right:1194px;top:415px;font-size:12px;color:#000;font-weight:400;letter-spacing:0px;">0</span>
<div style="left:305px;top:80px;width:111px;height:364px;background:#f7f7f7;"></div>
<div style="left:416px;top:80px;width:1058px;height:38px;background:#f7f7f7;"></div>
<div style="left:416px;top:118px;width:1058px;height:309px;background:#fff;"></div>
<div style="left:416px;top:80px;width:55px;height:38px;background:#0078d7;"></div>
<div style="left:416px;top:118px;width:55px;height:309px;background:#cce0f4;"></div>
<div style="left:897px;top:80px;width:114px;height:38px;background:#0078d7;"></div>
<div style="left:897px;top:118px;width:114px;height:309px;background:#cce0f4;"></div>
<div style="left:1011px;top:80px;width:114px;height:38px;background:#0078d7;"></div>
<div style="left:1011px;top:118px;width:114px;height:309px;background:#cce0f4;"></div>
<div style="left:1125px;top:80px;width:104px;height:38px;background:#0078d7;"></div>
<div style="left:1125px;top:118px;width:104px;height:309px;background:#cce0f4;"></div>
<div style="left:1334px;top:80px;width:113px;height:38px;background:#0078d7;"></div>
<div style="left:1334px;top:118px;width:113px;height:309px;background:#cce0f4;"></div>
<div style="left:416px;top:137px;width:1058px;height:1px;background:#dcdce4;"></div>
<div style="left:305px;top:137px;width:111px;height:1px;background:#a8a8a8;"></div>
<div style="left:416px;top:156px;width:1058px;height:1px;background:#dcdce4;"></div>
<div style="left:305px;top:156px;width:111px;height:1px;background:#a8a8a8;"></div>
<div style="left:416px;top:175px;width:1058px;height:1px;background:#dcdce4;"></div>
<div style="left:305px;top:175px;width:111px;height:1px;background:#a8a8a8;"></div>
<div style="left:416px;top:194px;width:1058px;height:1px;background:#dcdce4;"></div>
<div style="left:305px;top:194px;width:111px;height:1px;background:#a8a8a8;"></div>
<div style="left:416px;top:213px;width:1058px;height:1px;background:#dcdce4;"></div>
<div style="left:305px;top:213px;width:111px;height:1px;background:#a8a8a8;"></div>
<div style="left:416px;top:232px;width:1058px;height:1px;background:#dcdce4;"></div>
<div style="left:305px;top:232px;width:111px;height:1px;background:#a8a8a8;"></div>
<div style="left:416px;top:251px;width:1058px;height:1px;background:#dcdce4;"></div>
<div style="left:305px;top:251px;width:111px;height:1px;background:#a8a8a8;"></div>
<div style="left:416px;top:270px;width:1058px;height:1px;background:#dcdce4;"></div>
<div style="left:305px;top:270px;width:111px;height:1px;background:#a8a8a8;"></div>
<div style="left:416px;top:289px;width:1058px;height:1px;background:#dcdce4;"></div>
<div style="left:305px;top:289px;width:111px;height:1px;background:#a8a8a8;"></div>
<div style="left:416px;top:308px;width:1058px;height:1px;background:#dcdce4;"></div>
<div style="left:305px;top:308px;width:111px;height:1px;background:#a8a8a8;"></div>
<div style="left:416px;top:327px;width:1058px;height:1px;background:#dcdce4;"></div>
<div style="left:305px;top:327px;width:111px;height:1px;background:#a8a8a8;"></div>
<div style="left:416px;top:346px;width:1058px;height:1px;background:#dcdce4;"></div>
<div style="left:305px;top:346px;width:111px;height:1px;background:#a8a8a8;"></div>
<div style="left:416px;top:365px;width:1058px;height:1px;background:#dcdce4;"></div>
<div style="left:305px;top:365px;width:111px;height:1px;background:#a8a8a8;"></div>
<div style="left:416px;top:384px;width:1058px;height:1px;background:#dcdce4;"></div>
<div style="left:305px;top:384px;width:111px;height:1px;background:#a8a8a8;"></div>
<div style="left:416px;top:403px;width:1058px;height:1px;background:#dcdce4;"></div>
<div style="left:305px;top:403px;width:111px;height:1px;background:#a8a8a8;"></div>
<div style="left:416px;top:422px;width:1058px;height:1px;background:#dcdce4;"></div>
<div style="left:305px;top:422px;width:111px;height:1px;background:#a8a8a8;"></div>
<div style="left:305px;top:118px;width:111px;height:1px;background:#a8a8a8;"></div>
<div style="left:471px;top:80px;width:1px;height:38px;background:#d8d8d8;"></div>
<div style="left:471px;top:118px;width:1px;height:309px;background:#dcdce4;"></div>
<div style="left:575px;top:80px;width:1px;height:38px;background:#d8d8d8;"></div>
<div style="left:575px;top:118px;width:1px;height:309px;background:#dcdce4;"></div>
<div style="left:689px;top:80px;width:1px;height:38px;background:#d8d8d8;"></div>
<div style="left:689px;top:118px;width:1px;height:309px;background:#dcdce4;"></div>
<div style="left:793px;top:80px;width:1px;height:38px;background:#d8d8d8;"></div>
<div style="left:793px;top:118px;width:1px;height:309px;background:#dcdce4;"></div>
<div style="left:897px;top:80px;width:1px;height:38px;background:#d8d8d8;"></div>
<div style="left:897px;top:118px;width:1px;height:309px;background:#dcdce4;"></div>
<div style="left:1011px;top:80px;width:1px;height:38px;background:#d8d8d8;"></div>
<div style="left:1011px;top:118px;width:1px;height:309px;background:#dcdce4;"></div>
<div style="left:1125px;top:80px;width:1px;height:38px;background:#d8d8d8;"></div>
<div style="left:1125px;top:118px;width:1px;height:309px;background:#dcdce4;"></div>
<div style="left:1229px;top:80px;width:1px;height:38px;background:#d8d8d8;"></div>
<div style="left:1229px;top:118px;width:1px;height:309px;background:#dcdce4;"></div>
<div style="left:1334px;top:80px;width:1px;height:38px;background:#d8d8d8;"></div>
<div style="left:1334px;top:118px;width:1px;height:309px;background:#dcdce4;"></div>
<div style="left:1447px;top:80px;width:1px;height:38px;background:#d8d8d8;"></div>
<div style="left:1447px;top:118px;width:1px;height:309px;background:#dcdce4;"></div>
<div style="left:415px;top:80px;width:1px;height:347px;background:#a8a8a8;"></div>
<div style="left:416px;top:80px;width:1058px;height:347px;overflow:hidden">
<span class="t" style="right:1008.5px;top:22.5px;font-size:12px;font-weight:700;color:#fff;letter-spacing:-0.3px">Log2[200971_s_at]</span>
<span class="t" style="right:1008px;top:41px;font-size:12px;color:#111;letter-spacing:-0.25px">59586019</span>
<span class="t" style="right:1008px;top:60px;font-size:12px;color:#111;letter-spacing:-0.25px">48914228</span>
<span class="t" style="right:1008px;top:79px;font-size:12px;color:#111;letter-spacing:-0.25px">63945993</span>
<span class="t" style="right:1008px;top:98px;font-size:12px;color:#111;letter-spacing:-0.25px">41589975</span>
<span class="t" style="right:1008px;top:117px;font-size:12px;color:#111;letter-spacing:-0.25px">38445885</span>
<span class="t" style="right:1008px;top:136px;font-size:12px;color:#111;letter-spacing:-0.25px">72094483</span>
<span class="t" style="right:1008px;top:155px;font-size:12px;color:#111;letter-spacing:-0.25px">17914909</span>
<span class="t" style="right:1008px;top:174px;font-size:12px;color:#111;letter-spacing:-0.25px">49559131</span>
<span class="t" style="right:1008px;top:193px;font-size:12px;color:#111;letter-spacing:-0.25px">21339344</span>
<span class="t" style="right:1008px;top:212px;font-size:12px;color:#111;letter-spacing:-0.25px">42967103</span>
<span class="t" style="right:1008px;top:231px;font-size:12px;color:#111;letter-spacing:-0.25px">60904732</span>
<span class="t" style="right:1008px;top:250px;font-size:12px;color:#111;letter-spacing:-0.25px">82779478</span>
<span class="t" style="right:1008px;top:269px;font-size:12px;color:#111;letter-spacing:-0.25px">35030656</span>
<span class="t" style="right:1008px;top:288px;font-size:12px;color:#111;letter-spacing:-0.25px">73382833</span>
<span class="t" style="right:1008px;top:307px;font-size:12px;color:#111;letter-spacing:-0.25px">67493512</span>
<span class="t" style="right:1008px;top:326px;font-size:12px;color:#111;letter-spacing:-0.25px">60875339</span>
<div style="left:55px;top:22.5px;width:104px;height:16px;text-align:center;font-size:12px;line-height:14px;white-space:nowrap;"><span class="t" style="position:static;font-size:12px;font-weight:700;color:#000;letter-spacing:0px">Log2[200972_at]</span></div>
<span class="t" style="right:904px;top:41px;font-size:12px;color:#111;letter-spacing:-0.25px">12.31518514</span>
<span class="t" style="right:904px;top:60px;font-size:12px;color:#111;letter-spacing:-0.25px">12.404643785</span>
<span class="t" style="right:904px;top:79px;font-size:12px;color:#111;letter-spacing:-0.25px">12.475001208</span>
<span class="t" style="right:904px;top:98px;font-size:12px;color:#111;letter-spacing:-0.25px">12.545064984</span>
<span class="t" style="right:904px;top:117px;font-size:12px;color:#111;letter-spacing:-0.25px">12.468325816</span>
<span class="t" style="right:904px;top:136px;font-size:12px;color:#111;letter-spacing:-0.25px">12.507226316</span>
<span class="t" style="right:904px;top:155px;font-size:12px;color:#111;letter-spacing:-0.25px">12.314542936</span>
<span class="t" style="right:904px;top:174px;font-size:12px;color:#111;letter-spacing:-0.25px">12.3219729</span>
<span class="t" style="right:904px;top:193px;font-size:12px;color:#111;letter-spacing:-0.25px">12.392713752</span>
<span class="t" style="right:904px;top:212px;font-size:12px;color:#111;letter-spacing:-0.25px">12.352328549</span>
<span class="t" style="right:904px;top:231px;font-size:12px;color:#111;letter-spacing:-0.25px">12.19429706</span>
<span class="t" style="right:904px;top:250px;font-size:12px;color:#111;letter-spacing:-0.25px">12.173708023</span>
<span class="t" style="right:904px;top:269px;font-size:12px;color:#111;letter-spacing:-0.25px">12.146139443</span>
<span class="t" style="right:904px;top:288px;font-size:12px;color:#111;letter-spacing:-0.25px">12.357506476</span>
<span class="t" style="right:904px;top:307px;font-size:12px;color:#111;letter-spacing:-0.25px">12.293092427</span>
<span class="t" style="right:904px;top:326px;font-size:12px;color:#111;letter-spacing:-0.25px">11.921129175</span>
<div style="left:159px;top:22.5px;width:114px;height:16px;text-align:center;font-size:12px;line-height:14px;white-space:nowrap;"><span class="t" style="position:static;font-size:12px;font-weight:700;color:#000;letter-spacing:-0.15px">Log2[200973_s_at]</span></div>
<span class="t" style="right:790px;top:41px;font-size:12px;color:#111;letter-spacing:-0.25px">11.557736073</span>
<span class="t" style="right:790px;top:60px;font-size:12px;color:#111;letter-spacing:-0.25px">11.477919737</span>
<span class="t" style="right:790px;top:79px;font-size:12px;color:#111;letter-spacing:-0.25px">11.655990453</span>
<span class="t" style="right:790px;top:98px;font-size:12px;color:#111;letter-spacing:-0.25px">11.663659488</span>
<span class="t" style="right:790px;top:117px;font-size:12px;color:#111;letter-spacing:-0.25px">11.533672099</span>
<span class="t" style="right:790px;top:136px;font-size:12px;color:#111;letter-spacing:-0.25px">11.765516568</span>
<span class="t" style="right:790px;top:155px;font-size:12px;color:#111;letter-spacing:-0.25px">11.510486061</span>
<span class="t" style="right:790px;top:174px;font-size:12px;color:#111;letter-spacing:-0.25px">11.497562537</span>
<span class="t" style="right:790px;top:193px;font-size:12px;color:#111;letter-spacing:-0.25px">11.674588973</span>
<span class="t" style="right:790px;top:212px;font-size:12px;color:#111;letter-spacing:-0.25px">11.705889516</span>
<span class="t" style="right:790px;top:231px;font-size:12px;color:#111;letter-spacing:-0.25px">11.729928965</span>
<span class="t" style="right:790px;top:250px;font-size:12px;color:#111;letter-spacing:-0.25px">11.673309406</span>
<span class="t" style="right:790px;top:269px;font-size:12px;color:#111;letter-spacing:-0.25px">11.270141949</span>
<span class="t" style="right:790px;top:288px;font-size:12px;color:#111;letter-spacing:-0.25px">11.524895271</span>
<span class="t" style="right:790px;top:307px;font-size:12px;color:#111;letter-spacing:-0.25px">11.425144</span>
<span class="t" style="right:790px;top:326px;font-size:12px;color:#111;letter-spacing:-0.25px">11.301473199</span>
<div style="left:273px;top:22.5px;width:104px;height:16px;text-align:center;font-size:12px;line-height:14px;white-space:nowrap;"><span class="t" style="position:static;font-size:12px;font-weight:700;color:#000;letter-spacing:0px">Log2[200974_at]</span></div>
<span class="t" style="right:686px;top:41px;font-size:12px;color:#111;letter-spacing:-0.25px">9.2237996679</span>
<span class="t" style="right:686px;top:60px;font-size:12px;color:#111;letter-spacing:-0.25px">9.3475073105</span>
<span class="t" style="right:686px;top:79px;font-size:12px;color:#111;letter-spacing:-0.25px">9.0812520889</span>
<span class="t" style="right:686px;top:98px;font-size:12px;color:#111;letter-spacing:-0.25px">8.768100574</span>
<span class="t" style="right:686px;top:117px;font-size:12px;color:#111;letter-spacing:-0.25px">9.0409841802</span>
<span class="t" style="right:686px;top:136px;font-size:12px;color:#111;letter-spacing:-0.25px">8.8831444636</span>
<span class="t" style="right:686px;top:155px;font-size:12px;color:#111;letter-spacing:-0.25px">8.8212825457</span>
<span class="t" style="right:686px;top:174px;font-size:12px;color:#111;letter-spacing:-0.25px">8.9613821393</span>
<span class="t" style="right:686px;top:193px;font-size:12px;color:#111;letter-spacing:-0.25px">8.7668516041</span>
<span class="t" style="right:686px;top:212px;font-size:12px;color:#111;letter-spacing:-0.25px">8.6321215575</span>
<span class="t" style="right:686px;top:231px;font-size:12px;color:#111;letter-spacing:-0.25px">8.5812880996</span>
<span class="t" style="right:686px;top:250px;font-size:12px;color:#111;letter-spacing:-0.25px">8.3181929942</span>
<span class="t" style="right:686px;top:269px;font-size:12px;color:#111;letter-spacing:-0.25px">8.800712354</span>
<span class="t" style="right:686px;top:288px;font-size:12px;color:#111;letter-spacing:-0.25px">8.7573283111</span>
<span class="t" style="right:686px;top:307px;font-size:12px;color:#111;letter-spacing:-0.25px">8.7856642393</span>
<span class="t" style="right:686px;top:326px;font-size:12px;color:#111;letter-spacing:-0.25px">8.3548606343</span>
<div style="left:377px;top:22.5px;width:104px;height:16px;text-align:center;font-size:12px;line-height:14px;white-space:nowrap;"><span class="t" style="position:static;font-size:12px;font-weight:700;color:#000;letter-spacing:0px">Log2[200975_at]</span></div>
<span class="t" style="right:582px;top:41px;font-size:12px;color:#111;letter-spacing:-0.25px">14.197549769</span>
<span class="t" style="right:582px;top:60px;font-size:12px;color:#111;letter-spacing:-0.25px">14.278057066</span>
<span class="t" style="right:582px;top:79px;font-size:12px;color:#111;letter-spacing:-0.25px">14.277391974</span>
<span class="t" style="right:582px;top:98px;font-size:12px;color:#111;letter-spacing:-0.25px">14.015462748</span>
<span class="t" style="right:582px;top:117px;font-size:12px;color:#111;letter-spacing:-0.25px">13.885278535</span>
<span class="t" style="right:582px;top:136px;font-size:12px;color:#111;letter-spacing:-0.25px">13.966017421</span>
<span class="t" style="right:582px;top:155px;font-size:12px;color:#111;letter-spacing:-0.25px">14.03444406</span>
<span class="t" style="right:582px;top:174px;font-size:12px;color:#111;letter-spacing:-0.25px">14.104809691</span>
<span class="t" style="right:582px;top:193px;font-size:12px;color:#111;letter-spacing:-0.25px">14.221032626</span>
<span class="t" style="right:582px;top:212px;font-size:12px;color:#111;letter-spacing:-0.25px">13.819313705</span>
<span class="t" style="right:582px;top:231px;font-size:12px;color:#111;letter-spacing:-0.25px">13.669894564</span>
<span class="t" style="right:582px;top:250px;font-size:12px;color:#111;letter-spacing:-0.25px">13.740571445</span>
<span class="t" style="right:582px;top:269px;font-size:12px;color:#111;letter-spacing:-0.25px">13.879577176</span>
<span class="t" style="right:582px;top:288px;font-size:12px;color:#111;letter-spacing:-0.25px">14.059261698</span>
<span class="t" style="right:582px;top:307px;font-size:12px;color:#111;letter-spacing:-0.25px">13.997062551</span>
<span class="t" style="right:582px;top:326px;font-size:12px;color:#111;letter-spacing:-0.25px">13.333589842</span>
<div style="left:481px;top:22.5px;width:114px;height:16px;text-align:center;font-size:12px;line-height:14px;white-space:nowrap;"><span class="t" style="position:static;font-size:12px;font-weight:700;color:#fff;letter-spacing:-0.15px">Log2[200976_s_at]</span></div>
<span class="t" style="right:468px;top:41px;font-size:12px;color:#111;letter-spacing:-0.25px">11.303166716</span>
<span class="t" style="right:468px;top:60px;font-size:12px;color:#111;letter-spacing:-0.25px">11.208332131</span>
<span class="t" style="right:468px;top:79px;font-size:12px;color:#111;letter-spacing:-0.25px">11.36548174</span>
<span class="t" style="right:468px;top:98px;font-size:12px;color:#111;letter-spacing:-0.25px">11.321789223</span>
<span class="t" style="right:468px;top:117px;font-size:12px;color:#111;letter-spacing:-0.25px">11.264500927</span>
<span class="t" style="right:468px;top:136px;font-size:12px;color:#111;letter-spacing:-0.25px">11.319775193</span>
<span class="t" style="right:468px;top:155px;font-size:12px;color:#111;letter-spacing:-0.25px">11.44680519</span>
<span class="t" style="right:468px;top:174px;font-size:12px;color:#111;letter-spacing:-0.25px">11.445325189</span>
<span class="t" style="right:468px;top:193px;font-size:12px;color:#111;letter-spacing:-0.25px">11.221412295</span>
<span class="t" style="right:468px;top:212px;font-size:12px;color:#111;letter-spacing:-0.25px">11.573020496</span>
<span class="t" style="right:468px;top:231px;font-size:12px;color:#111;letter-spacing:-0.25px">11.772662586</span>
<span class="t" style="right:468px;top:250px;font-size:12px;color:#111;letter-spacing:-0.25px">11.641917328</span>
<span class="t" style="right:468px;top:269px;font-size:12px;color:#111;letter-spacing:-0.25px">11.183116828</span>
<span class="t" style="right:468px;top:288px;font-size:12px;color:#111;letter-spacing:-0.25px">11.04932101</span>
<span class="t" style="right:468px;top:307px;font-size:12px;color:#111;letter-spacing:-0.25px">11.239763438</span>
<span class="t" style="right:468px;top:326px;font-size:12px;color:#111;letter-spacing:-0.25px">11.272221526</span>
<div style="left:595px;top:22.5px;width:114px;height:16px;text-align:center;font-size:12px;line-height:14px;white-space:nowrap;"><span class="t" style="position:static;font-size:12px;font-weight:700;color:#fff;letter-spacing:-0.15px">Log2[200977_s_at]</span></div>
<span class="t" style="right:354px;top:41px;font-size:12px;color:#111;letter-spacing:-0.25px">11.990151118</span>
<span class="t" style="right:354px;top:60px;font-size:12px;color:#111;letter-spacing:-0.25px">12.107158887</span>
<span class="t" style="right:354px;top:79px;font-size:12px;color:#111;letter-spacing:-0.25px">12.002070711</span>
<span class="t" style="right:354px;top:98px;font-size:12px;color:#111;letter-spacing:-0.25px">12.068029706</span>
<span class="t" style="right:354px;top:117px;font-size:12px;color:#111;letter-spacing:-0.25px">12.104377095</span>
<span class="t" style="right:354px;top:136px;font-size:12px;color:#111;letter-spacing:-0.25px">12.085573303</span>
<span class="t" style="right:354px;top:155px;font-size:12px;color:#111;letter-spacing:-0.25px">12.220495493</span>
<span class="t" style="right:354px;top:174px;font-size:12px;color:#111;letter-spacing:-0.25px">12.319118306</span>
<span class="t" style="right:354px;top:193px;font-size:12px;color:#111;letter-spacing:-0.25px">12.095321136</span>
<span class="t" style="right:354px;top:212px;font-size:12px;color:#111;letter-spacing:-0.25px">12.250372674</span>
<span class="t" style="right:354px;top:231px;font-size:12px;color:#111;letter-spacing:-0.25px">12.340974347</span>
<span class="t" style="right:354px;top:250px;font-size:12px;color:#111;letter-spacing:-0.25px">12.400508028</span>
<span class="t" style="right:354px;top:269px;font-size:12px;color:#111;letter-spacing:-0.25px">12.165991903</span>
<span class="t" style="right:354px;top:288px;font-size:12px;color:#111;letter-spacing:-0.25px">12.142586539</span>
<span class="t" style="right:354px;top:307px;font-size:12px;color:#111;letter-spacing:-0.25px">12.131378431</span>
<span class="t" style="right:354px;top:326px;font-size:12px;color:#111;letter-spacing:-0.25px">12.197424785</span>
<div style="left:709px;top:22.5px;width:104px;height:16px;text-align:center;font-size:12px;line-height:14px;white-space:nowrap;"><span class="t" style="position:static;font-size:12px;font-weight:700;color:#fff;letter-spacing:0px">Log2[200978_at]</span></div>
<span class="t" style="right:250px;top:41px;font-size:12px;color:#111;letter-spacing:-0.25px">13.767919184</span>
<span class="t" style="right:250px;top:60px;font-size:12px;color:#111;letter-spacing:-0.25px">13.75125391</span>
<span class="t" style="right:250px;top:79px;font-size:12px;color:#111;letter-spacing:-0.25px">13.755198677</span>
<span class="t" style="right:250px;top:98px;font-size:12px;color:#111;letter-spacing:-0.25px">13.763175298</span>
<span class="t" style="right:250px;top:117px;font-size:12px;color:#111;letter-spacing:-0.25px">13.706700383</span>
<span class="t" style="right:250px;top:136px;font-size:12px;color:#111;letter-spacing:-0.25px">13.68653782</span>
<span class="t" style="right:250px;top:155px;font-size:12px;color:#111;letter-spacing:-0.25px">13.64828641</span>
<span class="t" style="right:250px;top:174px;font-size:12px;color:#111;letter-spacing:-0.25px">13.737526782</span>
<span class="t" style="right:250px;top:193px;font-size:12px;color:#111;letter-spacing:-0.25px">13.795509436</span>
<span class="t" style="right:250px;top:212px;font-size:12px;color:#111;letter-spacing:-0.25px">13.863938262</span>
<span class="t" style="right:250px;top:231px;font-size:12px;color:#111;letter-spacing:-0.25px">14.00143981</span>
<span class="t" style="right:250px;top:250px;font-size:12px;color:#111;letter-spacing:-0.25px">13.887891646</span>
<span class="t" style="right:250px;top:269px;font-size:12px;color:#111;letter-spacing:-0.25px">13.592316731</span>
<span class="t" style="right:250px;top:288px;font-size:12px;color:#111;letter-spacing:-0.25px">13.784255942</span>
<span class="t" style="right:250px;top:307px;font-size:12px;color:#111;letter-spacing:-0.25px">13.661443456</span>
<span class="t" style="right:250px;top:326px;font-size:12px;color:#111;letter-spacing:-0.25px">14.064376423</span>
<div style="left:813px;top:22.5px;width:105px;height:16px;text-align:center;font-size:12px;line-height:14px;white-space:nowrap;"><span class="t" style="position:static;font-size:12px;font-weight:700;color:#000;letter-spacing:0px">Log2[200979_at]</span></div>
<span class="t" style="right:145px;top:41px;font-size:12px;color:#111;letter-spacing:-0.25px">9.6378574829</span>
<span class="t" style="right:145px;top:60px;font-size:12px;color:#111;letter-spacing:-0.25px">9.2822503902</span>
<span class="t" style="right:145px;top:79px;font-size:12px;color:#111;letter-spacing:-0.25px">9.0594563065</span>
<span class="t" style="right:145px;top:98px;font-size:12px;color:#111;letter-spacing:-0.25px">9.195267592</span>
<span class="t" style="right:145px;top:117px;font-size:12px;color:#111;letter-spacing:-0.25px">9.5686991057</span>
<span class="t" style="right:145px;top:136px;font-size:12px;color:#111;letter-spacing:-0.25px">9.0288188453</span>
<span class="t" style="right:145px;top:155px;font-size:12px;color:#111;letter-spacing:-0.25px">9.0883816786</span>
<span class="t" style="right:145px;top:174px;font-size:12px;color:#111;letter-spacing:-0.25px">8.7009151236</span>
<span class="t" style="right:145px;top:193px;font-size:12px;color:#111;letter-spacing:-0.25px">8.8165744669</span>
<span class="t" style="right:145px;top:212px;font-size:12px;color:#111;letter-spacing:-0.25px">8.8946377911</span>
<span class="t" style="right:145px;top:231px;font-size:12px;color:#111;letter-spacing:-0.25px">8.8933353029</span>
<span class="t" style="right:145px;top:250px;font-size:12px;color:#111;letter-spacing:-0.25px">8.9514568768</span>
<span class="t" style="right:145px;top:269px;font-size:12px;color:#111;letter-spacing:-0.25px">9.2409667568</span>
<span class="t" style="right:145px;top:288px;font-size:12px;color:#111;letter-spacing:-0.25px">8.9205904251</span>
<span class="t" style="right:145px;top:307px;font-size:12px;color:#111;letter-spacing:-0.25px">8.8911288034</span>
<span class="t" style="right:145px;top:326px;font-size:12px;color:#111;letter-spacing:-0.25px">8.9762961053</span>
<div style="left:918px;top:22.5px;width:113px;height:16px;text-align:center;font-size:12px;line-height:14px;white-space:nowrap;"><span class="t" style="position:static;font-size:12px;font-weight:700;color:#fff;letter-spacing:-0.15px">Log2[200980_s_at]</span></div>
<span class="t" style="right:32px;top:41px;font-size:12px;color:#111;letter-spacing:-0.25px">12.604427696</span>
<span class="t" style="right:32px;top:60px;font-size:12px;color:#111;letter-spacing:-0.25px">12.655069316</span>
<span class="t" style="right:32px;top:79px;font-size:12px;color:#111;letter-spacing:-0.25px">12.68436364</span>
<span class="t" style="right:32px;top:98px;font-size:12px;color:#111;letter-spacing:-0.25px">12.851695838</span>
<span class="t" style="right:32px;top:117px;font-size:12px;color:#111;letter-spacing:-0.25px">12.766753193</span>
<span class="t" style="right:32px;top:136px;font-size:12px;color:#111;letter-spacing:-0.25px">12.797482685</span>
<span class="t" style="right:32px;top:155px;font-size:12px;color:#111;letter-spacing:-0.25px">12.635338644</span>
<span class="t" style="right:32px;top:174px;font-size:12px;color:#111;letter-spacing:-0.25px">12.672060881</span>
<span class="t" style="right:32px;top:193px;font-size:12px;color:#111;letter-spacing:-0.25px">12.7376665</span>
<span class="t" style="right:32px;top:212px;font-size:12px;color:#111;letter-spacing:-0.25px">12.727640575</span>
<span class="t" style="right:32px;top:231px;font-size:12px;color:#111;letter-spacing:-0.25px">12.93822839</span>
<span class="t" style="right:32px;top:250px;font-size:12px;color:#111;letter-spacing:-0.25px">12.939014978</span>
<span class="t" style="right:32px;top:269px;font-size:12px;color:#111;letter-spacing:-0.25px">12.580922531</span>
<span class="t" style="right:32px;top:288px;font-size:12px;color:#111;letter-spacing:-0.25px">12.633772261</span>
<span class="t" style="right:32px;top:307px;font-size:12px;color:#111;letter-spacing:-0.25px">12.570895962</span>
<span class="t" style="right:32px;top:326px;font-size:12px;color:#111;letter-spacing:-0.25px">12.897134759</span>
<span class="t" style="left:1036px;top:22.5px;font-size:12px;font-weight:700;color:#000;letter-spacing:-0.3px">Log2[200981_x_at]</span>
</div>
<span class="t" style="right:1081px;top:121px;font-size:12px;color:#111;font-weight:400;letter-spacing:-0.2px;">1</span>
<span class="t" style="right:1081px;top:140px;font-size:12px;color:#111;font-weight:400;letter-spacing:-0.2px;">2</span>
<span class="t" style="right:1081px;top:159px;font-size:12px;color:#111;font-weight:400;letter-spacing:-0.2px;">3</span>
<span class="t" style="right:1081px;top:178px;font-size:12px;color:#111;font-weight:400;letter-spacing:-0.2px;">4</span>
<span class="t" style="right:1081px;top:197px;font-size:12px;color:#111;font-weight:400;letter-spacing:-0.2px;">5</span>
<span class="t" style="right:1081px;top:216px;font-size:12px;color:#111;font-weight:400;letter-spacing:-0.2px;">6</span>
<span class="t" style="right:1081px;top:235px;font-size:12px;color:#111;font-weight:400;letter-spacing:-0.2px;">7</span>
<span class="t" style="right:1081px;top:254px;font-size:12px;color:#111;font-weight:400;letter-spacing:-0.2px;">8</span>
<span class="t" style="right:1081px;top:273px;font-size:12px;color:#111;font-weight:400;letter-spacing:-0.2px;">9</span>
<span class="t" style="right:1081px;top:292px;font-size:12px;color:#111;font-weight:400;letter-spacing:-0.2px;">10</span>
<span class="t" style="right:1081px;top:311px;font-size:12px;color:#111;font-weight:400;letter-spacing:-0.2px;">11</span>
<span class="t" style="right:1081px;top:330px;font-size:12px;color:#111;font-weight:400;letter-spacing:-0.2px;">12</span>
<span class="t" style="right:1081px;top:349px;font-size:12px;color:#111;font-weight:400;letter-spacing:-0.2px;">13</span>
<span class="t" style="right:1081px;top:368px;font-size:12px;color:#111;font-weight:400;letter-spacing:-0.2px;">14</span>
<span class="t" style="right:1081px;top:387px;font-size:12px;color:#111;font-weight:400;letter-spacing:-0.2px;">15</span>
<span class="t" style="right:1081px;top:406px;font-size:12px;color:#111;font-weight:400;letter-spacing:-0.2px;">16</span>
<svg style="left:309px;top:81px" width="10" height="15"><path d="M7.5 1.5L1.5 7L7.5 12.5Z" fill="none" stroke="#666" stroke-width="1.1"/></svg>
<svg style="left:305px;top:80px" width="112" height="40"><line x1="19" y1="7" x2="111" y2="38" stroke="#999" stroke-width="1"/></svg>
<div style="left:397px;top:82px;width:14px;height:12px;background:#fafafa;border:1px solid #b8b8b8;border-radius:3px;"></div>
<svg style="left:399px;top:85px" width="10" height="6"><path d="M0.5 0.5H9.5L5.0 5Z" fill="#d40000"/></svg>
<div style="left:310px;top:106px;width:14px;height:11px;background:#fafafa;border:1px solid #b8b8b8;border-radius:3px;"></div>
<svg style="left:312px;top:109px" width="10" height="6"><path d="M0.5 0.5H9.5L5.0 5Z" fill="#d40000"/></svg>
<svg style="left:396px;top:96px" width="14" height="14"><rect x="1" y="1" width="1.2" height="11" fill="#7a8ab0"/><rect x="2.5" y="3" width="6" height="2" fill="#8a9a80"/><rect x="2.5" y="6" width="9" height="2" fill="#8a9a80"/><rect x="2.5" y="9" width="5" height="2" fill="#8a9a80"/></svg>
<div style="left:1474px;top:118px;width:17px;height:309px;background:#f0f0f0;"></div>
<div style="left:1474px;top:80px;width:17px;height:38px;background:#fafafa;"></div>
<svg style="left:1476px;top:124px" width="12" height="8"><path d="M1.5 6.5L6 2L10.5 6.5" fill="none" stroke="#a0a0a0" stroke-width="1"/></svg>
<div style="left:1474px;top:135px;width:17px;height:224px;background:#cdcdcd;"></div>
<svg style="left:1476px;top:414px" width="12" height="8"><path d="M1.5 1.5L6 6L10.5 1.5" fill="none" stroke="#a0a0a0" stroke-width="1"/></svg>
<div style="left:416px;top:427px;width:1075px;height:18px;background:#efefef;"></div>
<svg style="left:420px;top:430px" width="8" height="12"><path d="M6 1.5L2 6L6 10.5" fill="none" stroke="#a0a0a0" stroke-width="1"/></svg>
<div style="left:986px;top:428px;width:8px;height:16px;background:#cdcdcd;"></div>
<svg style="left:1461px;top:430px" width="8" height="12"><path d="M2 1.5L6 6L2 10.5" fill="none" stroke="#a0a0a0" stroke-width="1"/></svg>
<div style="left:164px;top:444px;width:1327px;height:70px;background:#ffffff;"></div>
<div style="left:165px;top:445px;width:1324px;height:67px;background:transparent;border:1px solid #c0c8e4;"></div>
<div style="left:167px;top:447px;width:1320px;height:62px;background:#b3bbdb;border:1px solid #9ca0b0;"></div>
<div style="left:164px;top:512px;width:1327px;height:1px;background:#b8c2e0;"></div>
<div style="left:164px;top:514px;width:1327px;height:21px;background:#e3e9f4;"></div>
<div style="left:1408px;top:515px;width:1px;height:19px;background:#a8aec0;"></div>
<span class="t" style="left:170px;top:517px;font-size:12px;color:#000;font-weight:400;letter-spacing:-0.1px;">evaluations done</span>
<div style="left:173px;top:453px;width:50px;height:50px;background:#fff;border:1px solid #8a96c8;"></div>
<svg style="left:180px;top:459px" width="41" height="18" shape-rendering="crispEdges"><rect x="0" y="0" width="2" height="2" fill="#7886ea"/><rect x="2" y="0" width="2" height="2" fill="#ef4050"/><rect x="4" y="0" width="2" height="2" fill="#7886ea"/><rect x="6" y="0" width="2" height="2" fill="#7886ea"/><rect x="8" y="0" width="2" height="2" fill="#7886ea"/><rect x="10" y="0" width="2" height="2" fill="#e8505e"/><rect x="12" y="0" width="2" height="2" fill="#6070e8"/><rect x="14" y="0" width="2" height="2" fill="#a888b8"/><rect x="16" y="0" width="2" height="2" fill="#7886ea"/><rect x="18" y="0" width="2" height="2" fill="#ef4050"/><rect x="20" y="0" width="2" height="2" fill="#7886ea"/><rect x="22" y="0" width="2" height="2" fill="#7886ea"/><rect x="24" y="0" width="2" height="2" fill="#7886ea"/><rect x="26" y="0" width="2" height="2" fill="#e8505e"/><rect x="28" y="0" width="2" height="2" fill="#6070e8"/><rect x="30" y="0" width="2" height="2" fill="#ef4050"/><rect x="32" y="0" width="2" height="2" fill="#7886ea"/><rect x="34" y="0" width="2" height="2" fill="#7886ea"/><rect x="36" y="0" width="2" height="2" fill="#c07890"/><rect x="38" y="0" width="2" height="2" fill="#a888b8"/><rect x="0" y="2" width="2" height="2" fill="#a888b8"/><rect x="2" y="2" width="2" height="2" fill="#7886ea"/><rect x="4" y="2" width="2" height="2" fill="#e8505e"/><rect x="6" y="2" width="2" height="2" fill="#c07890"/><rect x="8" y="2" width="2" height="2" fill="#7886ea"/><rect x="10" y="2" width="2" height="2" fill="#e8505e"/><rect x="12" y="2" width="2" height="2" fill="#e8505e"/><rect x="14" y="2" width="2" height="2" fill="#c07890"/><rect x="16" y="2" width="2" height="2" fill="#e8505e"/><rect x="18" y="2" width="2" height="2" fill="#e8505e"/><rect x="20" y="2" width="2" height="2" fill="#e8505e"/><rect x="22" y="2" width="2" height="2" fill="#a888b8"/><rect x="24" y="2" width="2" height="2" fill="#e8505e"/><rect x="26" y="2" width="2" height="2" fill="#6070e8"/><rect x="28" y="2" width="2" height="2" fill="#c07890"/><rect x="30" y="2" width="2" height="2" fill="#c07890"/><rect x="32" y="2" width="2" height="2" fill="#ef4050"/><rect x="34" y="2" width="2" height="2" fill="#e8505e"/><rect x="36" y="2" width="2" height="2" fill="#a888b8"/><rect x="38" y="2" width="2" height="2" fill="#e8505e"/><rect x="0" y="4" width="2" height="2" fill="#ef4050"/><rect x="2" y="4" width="2" height="2" fill="#7886ea"/><rect x="4" y="4" width="2" height="2" fill="#7886ea"/><rect x="6" y="4" width="2" height="2" fill="#a888b8"/><rect x="8" y="4" width="2" height="2" fill="#ef4050"/><rect x="10" y="4" width="2" height="2" fill="#e8505e"/><rect x="12" y="4" width="2" height="2" fill="#6070e8"/><rect x="14" y="4" width="2" height="2" fill="#7886ea"/><rect x="16" y="4" width="2" height="2" fill="#e8505e"/><rect x="18" y="4" width="2" height="2" fill="#ef4050"/><rect x="20" y="4" width="2" height="2" fill="#7886ea"/><rect x="22" y="4" width="2" height="2" fill="#e8505e"/><rect x="24" y="4" width="2" height="2" fill="#6070e8"/><rect x="26" y="4" width="2" height="2" fill="#c07890"/><rect x="28" y="4" width="2" height="2" fill="#7886ea"/><rect x="30" y="4" width="2" height="2" fill="#c07890"/><rect x="32" y="4" width="2" height="2" fill="#e8505e"/><rect x="34" y="4" width="2" height="2" fill="#7886ea"/><rect x="36" y="4" width="2" height="2" fill="#e8505e"/><rect x="38" y="4" width="2" height="2" fill="#c07890"/><rect x="0" y="6" width="2" height="2" fill="#6070e8"/><rect x="2" y="6" width="2" height="2" fill="#ef4050"/><rect x="4" y="6" width="2" height="2" fill="#6070e8"/><rect x="6" y="6" width="2" height="2" fill="#6070e8"/><rect x="8" y="6" width="2" height="2" fill="#c07890"/><rect x="10" y="6" width="2" height="2" fill="#7886ea"/><rect x="12" y="6" width="2" height="2" fill="#6070e8"/><rect x="14" y="6" width="2" height="2" fill="#a888b8"/><rect x="16" y="6" width="2" height="2" fill="#6070e8"/><rect x="18" y="6" width="2" height="2" fill="#ef4050"/><rect x="20" y="6" width="2" height="2" fill="#7886ea"/><rect x="22" y="6" width="2" height="2" fill="#e8505e"/><rect x="24" y="6" width="2" height="2" fill="#e8505e"/><rect x="26" y="6" width="2" height="2" fill="#c07890"/><rect x="28" y="6" width="2" height="2" fill="#a888b8"/><rect x="30" y="6" width="2" height="2" fill="#ef4050"/><rect x="32" y="6" width="2" height="2" fill="#7886ea"/><rect x="34" y="6" width="2" height="2" fill="#7886ea"/><rect x="36" y="6" width="2" height="2" fill="#a888b8"/><rect x="38" y="6" width="2" height="2" fill="#6070e8"/><rect x="0" y="8" width="2" height="2" fill="#7886ea"/><rect x="2" y="8" width="2" height="2" fill="#7886ea"/><rect x="4" y="8" width="2" height="2" fill="#c07890"/><rect x="6" y="8" width="2" height="2" fill="#6070e8"/><rect x="8" y="8" width="2" height="2" fill="#e8505e"/><rect x="10" y="8" width="2" height="2" fill="#ef4050"/><rect x="12" y="8" width="2" height="2" fill="#e8505e"/><rect x="14" y="8" width="2" height="2" fill="#c07890"/><rect x="16" y="8" width="2" height="2" fill="#6070e8"/><rect x="18" y="8" width="2" height="2" fill="#6070e8"/><rect x="20" y="8" width="2" height="2" fill="#c07890"/><rect x="22" y="8" width="2" height="2" fill="#a888b8"/><rect x="24" y="8" width="2" height="2" fill="#6070e8"/><rect x="26" y="8" width="2" height="2" fill="#e8505e"/><rect x="28" y="8" width="2" height="2" fill="#c07890"/><rect x="30" y="8" width="2" height="2" fill="#e8505e"/><rect x="32" y="8" width="2" height="2" fill="#a888b8"/><rect x="34" y="8" width="2" height="2" fill="#e8505e"/><rect x="36" y="8" width="2" height="2" fill="#c07890"/><rect x="38" y="8" width="2" height="2" fill="#e8505e"/><rect x="0" y="10" width="2" height="2" fill="#7886ea"/><rect x="2" y="10" width="2" height="2" fill="#e8505e"/><rect x="4" y="10" width="2" height="2" fill="#a888b8"/><rect x="6" y="10" width="2" height="2" fill="#6070e8"/><rect x="8" y="10" width="2" height="2" fill="#c07890"/><rect x="10" y="10" width="2" height="2" fill="#a888b8"/><rect x="12" y="10" width="2" height="2" fill="#e8505e"/><rect x="14" y="10" width="2" height="2" fill="#ef4050"/><rect x="16" y="10" width="2" height="2" fill="#e8505e"/><rect x="18" y="10" width="2" height="2" fill="#7886ea"/><rect x="20" y="10" width="2" height="2" fill="#a888b8"/><rect x="22" y="10" width="2" height="2" fill="#7886ea"/><rect x="24" y="10" width="2" height="2" fill="#e8505e"/><rect x="26" y="10" width="2" height="2" fill="#a888b8"/><rect x="28" y="10" width="2" height="2" fill="#c07890"/><rect x="30" y="10" width="2" height="2" fill="#a888b8"/><rect x="32" y="10" width="2" height="2" fill="#a888b8"/><rect x="34" y="10" width="2" height="2" fill="#ef4050"/><rect x="36" y="10" width="2" height="2" fill="#7886ea"/><rect x="38" y="10" width="2" height="2" fill="#7886ea"/><rect x="0" y="12" width="2" height="2" fill="#7886ea"/><rect x="2" y="12" width="2" height="2" fill="#e8505e"/><rect x="4" y="12" width="2" height="2" fill="#a888b8"/><rect x="6" y="12" width="2" height="2" fill="#7886ea"/><rect x="8" y="12" width="2" height="2" fill="#ef4050"/><rect x="10" y="12" width="2" height="2" fill="#e8505e"/><rect x="12" y="12" width="2" height="2" fill="#6070e8"/><rect x="14" y="12" width="2" height="2" fill="#6070e8"/><rect x="16" y="12" width="2" height="2" fill="#c07890"/><rect x="18" y="12" width="2" height="2" fill="#ef4050"/><rect x="20" y="12" width="2" height="2" fill="#6070e8"/><rect x="22" y="12" width="2" height="2" fill="#a888b8"/><rect x="24" y="12" width="2" height="2" fill="#a888b8"/><rect x="26" y="12" width="2" height="2" fill="#6070e8"/><rect x="28" y="12" width="2" height="2" fill="#ef4050"/><rect x="30" y="12" width="2" height="2" fill="#c07890"/><rect x="32" y="12" width="2" height="2" fill="#6070e8"/><rect x="34" y="12" width="2" height="2" fill="#e8505e"/><rect x="36" y="12" width="2" height="2" fill="#c07890"/><rect x="38" y="12" width="2" height="2" fill="#e8505e"/><rect x="0" y="14" width="2" height="2" fill="#c07890"/><rect x="2" y="14" width="2" height="2" fill="#ef4050"/><rect x="4" y="14" width="2" height="2" fill="#7886ea"/><rect x="6" y="14" width="2" height="2" fill="#c07890"/><rect x="8" y="14" width="2" height="2" fill="#7886ea"/><rect x="10" y="14" width="2" height="2" fill="#e8505e"/><rect x="12" y="14" width="2" height="2" fill="#c07890"/><rect x="14" y="14" width="2" height="2" fill="#e8505e"/><rect x="16" y="14" width="2" height="2" fill="#c07890"/><rect x="18" y="14" width="2" height="2" fill="#c07890"/><rect x="20" y="14" width="2" height="2" fill="#7886ea"/><rect x="22" y="14" width="2" height="2" fill="#6070e8"/><rect x="24" y="14" width="2" height="2" fill="#6070e8"/><rect x="26" y="14" width="2" height="2" fill="#c07890"/><rect x="28" y="14" width="2" height="2" fill="#6070e8"/><rect x="30" y="14" width="2" height="2" fill="#a888b8"/><rect x="32" y="14" width="2" height="2" fill="#e8505e"/><rect x="34" y="14" width="2" height="2" fill="#a888b8"/><rect x="36" y="14" width="2" height="2" fill="#c07890"/><rect x="38" y="14" width="2" height="2" fill="#a888b8"/><rect x="0" y="17" width="40" height="1" fill="#222"/></svg>
<svg style="left:173px;top:453px" width="50" height="50"><path d="M9 27V31H24V35H36M24 35V38H30M29 31H36V26M44 26V31" stroke="#ccc" stroke-width="0.6" fill="none"/><path d="M3 3H20M4 5H14M3 47H12M3 49H20" stroke="#bbb" stroke-width="0.6"/><path d="M3.5 5V47" stroke="#ddd" stroke-width="0.6"/></svg>
<div style="left:214px;top:488px;width:6px;height:10px;background:#000;"></div>
<svg style="left:1413px;top:517px" width="14" height="13"><path d="M3 6.5V12.5H11V6.5" fill="#e4f2fb" stroke="#7cc0e8" stroke-width="0.8"/><path d="M1 7L7 1.5L13 7" fill="none" stroke="#2a9ad8" stroke-width="1.6"/><rect x="6" y="8" width="2.5" height="4.5" fill="#b8741a"/></svg>
<div style="left:1438px;top:517px;width:14px;height:13px;background:#fff;border:1px solid #555;"></div>
<svg style="left:1458px;top:519px" width="8" height="7"><path d="M0 0.5H8L4 6Z" fill="#111"/></svg>
<svg style="left:1478px;top:521px" width="12" height="12"><g fill="#b8bcc8"><rect x="9" y="1" width="1.4" height="1.4"/><rect x="6" y="4" width="1.4" height="1.4"/><rect x="9" y="4" width="1.4" height="1.4"/><rect x="3" y="7" width="1.4" height="1.4"/><rect x="6" y="7" width="1.4" height="1.4"/><rect x="9" y="7" width="1.4" height="1.4"/><rect x="0" y="10" width="1.4" height="1.4"/><rect x="3" y="10" width="1.4" height="1.4"/><rect x="6" y="10" width="1.4" height="1.4"/><rect x="9" y="10" width="1.4" height="1.4"/></g></svg>
<div style="left:544px;top:473px;width:406px;height:129px;overflow:hidden;background:#fff">
<div style="left:-230px;top:-30px;width:1492px;height:602px;">
<div style="left:163px;top:0px;width:1329px;height:536px;background:#fff;border-left:1px solid #8a8a8a;border-top:1px solid #666;border-right:1px solid #5a5a4a;border-bottom:1px solid #6a6a6a;"></div>
<svg style="left:172px;top:8px" width="17" height="16"><rect x="0.5" y="0.5" width="14" height="12" fill="#fff" stroke="#1e5aa8" stroke-width="1.2"/><path d="M1 4.5H14M1 8.5H14M4.5 1V12M8.5 1V12" stroke="#9ab" stroke-width="0.8"/><path d="M1 4.5H5M4.5 1V5" stroke="#e33" stroke-width="0.8"/><circle cx="9" cy="6.5" r="1.6" fill="#000"/><path d="M8 11L16 9M11 7L13 15" stroke="#1e7ad0" stroke-width="1.6"/></svg>
<span class="t" style="left:194px;top:9px;font-size:12.3px;color:#8c8c8c;font-weight:400;letter-spacing:-0.15px;transform:scaleX(0.9);transform-origin:0 0;">GSE11352_Wide_1 - JMP Pro</span>
<div style="left:1372px;top:15px;width:10px;height:1px;background:#6a6a6a;"></div>
<div style="left:1417px;top:10px;width:10px;height:10px;background:transparent;border:1px solid #6a6a6a;"></div>
<svg style="left:1462px;top:9px" width="12" height="12"><path d="M1 1L11 11M11 1L1 11" stroke="#6a6a6a" stroke-width="1"/></svg>
<div style="left:164px;top:31px;width:1327px;height:17px;background:#f0f0f0;"></div>
<span class="t" style="left:171px;top:33px;font-size:12px;color:#1c1c1c;font-weight:400;letter-spacing:-0.2px;">File</span>
<span class="t" style="left:203px;top:33px;font-size:12px;color:#1c1c1c;font-weight:400;letter-spacing:-0.2px;">Edit</span>
<span class="t" style="left:237px;top:33px;font-size:12px;color:#1c1c1c;font-weight:400;letter-spacing:-0.2px;">Tables</span>
<span class="t" style="left:283px;top:33px;font-size:12px;color:#1c1c1c;font-weight:400;letter-spacing:-0.2px;">Rows</span>
<span class="t" style="left:325px;top:33px;font-size:12px;color:#1c1c1c;font-weight:400;letter-spacing:-0.2px;">Cols</span>
<span class="t" style="left:362px;top:33px;font-size:12px;color:#1c1c1c;font-weight:400;letter-spacing:-0.2px;">DOE</span>
<span class="t" style="left:399px;top:33px;font-size:12px;color:#1c1c1c;font-weight:400;letter-spacing:-0.2px;">Analyze</span>
<span class="t" style="left:454px;top:33px;font-size:12px;color:#1c1c1c;font-weight:400;letter-spacing:-0.2px;">Graph</span>
<span class="t" style="left:499px;top:33px;font-size:12px;color:#1c1c1c;font-weight:400;letter-spacing:-0.2px;">Tools</span>
<span class="t" style="left:540px;top:33px;font-size:12px;color:#1c1c1c;font-weight:400;letter-spacing:-0.2px;">Add-Ins</span>
<span class="t" style="left:597px;top:33px;font-size:12px;color:#1c1c1c;font-weight:400;letter-spacing:-0.2px;">View</span>
<span class="t" style="left:636px;top:33px;font-size:12px;color:#1c1c1c;font-weight:400;letter-spacing:-0.2px;">Window</span>
<span class="t" style="left:694px;top:33px;font-size:12px;color:#1c1c1c;font-weight:400;letter-spacing:-0.2px;">Help</span>
<div style="left:164px;top:48px;width:1327px;height:28px;background:#d4daed;"></div>
<div style="left:167px;top:49px;width:255px;height:25px;background:#eaedf7;border-radius:3px;"></div>
<div style="left:426px;top:49px;width:174px;height:25px;background:#eaedf7;border-radius:3px;"></div>
<div style="left:170px;top:53px;width:2px;height:2px;background:#555;"></div>
<div style="left:170px;top:57px;width:2px;height:2px;background:#555;"></div>
<div style="left:170px;top:61px;width:2px;height:2px;background:#555;"></div>
<div style="left:170px;top:65px;width:2px;height:2px;background:#555;"></div>
<div style="left:429px;top:53px;width:2px;height:2px;background:#555;"></div>
<div style="left:429px;top:57px;width:2px;height:2px;background:#555;"></div>
<div style="left:429px;top:61px;width:2px;height:2px;background:#555;"></div>
<div style="left:429px;top:65px;width:2px;height:2px;background:#555;"></div>
<svg style="left:176px;top:52px" width="18" height="18"><rect x="1.5" y="2.5" width="14" height="12" fill="#fff" stroke="#1d5cad" stroke-width="1.4"/><path d="M2 6.5H15M2 10.5H15M6 3V14M10.5 3V14" stroke="#c9d4e6" stroke-width="1"/><path d="M2 6.5H6M2 10.5H6" stroke="#f29" stroke-width="0.7"/><rect x="0" y="0" width="7" height="7" fill="#f7d768" opacity="0.9"/><circle cx="10" cy="8.5" r="1.5" fill="#000"/><path d="M8 13H17M13 9V17" stroke="#1d7fd0" stroke-width="1.6"/></svg>
<svg style="left:198px;top:52px" width="18" height="18"><path d="M5 3H12L16 7V17H5Z" fill="#eaf2fb" stroke="#2b6cc0" stroke-width="1.2"/><rect x="0" y="0" width="7" height="7" fill="#f7d768" opacity="0.9"/><circle cx="5" cy="12" r="2.5" fill="none" stroke="#777" stroke-width="1.3"/><path d="M7 10H13" stroke="#666" stroke-width="1.5"/></svg>
<svg style="left:221px;top:52px" width="18" height="18"><path d="M1 5H7L8 6H13V15H1Z" fill="#f5d27a" stroke="#8c7a40" stroke-width="0.8"/><path d="M3 9H17L14 16H1Z" fill="#f2b53a" stroke="#7a6020" stroke-width="0.8"/><path d="M10 3Q13 0 15 3" stroke="#2a5aa0" fill="none" stroke-width="1.2"/></svg>
<svg style="left:243px;top:53px" width="16" height="16"><rect x="1" y="1" width="14" height="14" fill="#d8dcf0" stroke="#c6cbe6"/><rect x="4" y="2" width="8" height="5" fill="#eef0fa"/><rect x="5" y="10" width="6" height="4" fill="#eef0fa"/></svg>
<div style="left:264px;top:52px;width:1px;height:18px;background:#9aa0b4;"></div>
<svg style="left:272px;top:53px" width="13" height="16"><path d="M3 1L8 10M10 1L5 10" stroke="#777" stroke-width="1.5"/><circle cx="4" cy="12" r="2.3" fill="#2a55c0"/><circle cx="9" cy="12" r="2.3" fill="#2a55c0"/></svg>
<svg style="left:291px;top:53px" width="17" height="16"><path d="M1 1H7L9 3V11H1Z" fill="#fff" stroke="#3a6cc8"/><path d="M6 5H12L15 8V15H6Z" fill="#fff" stroke="#2a55b0"/><path d="M3 5H7M3 7H7M8 9H13M8 11H13M8 13H13" stroke="#3a6cc8" stroke-width="0.9"/></svg>
<svg style="left:313px;top:52px" width="18" height="17"><rect x="1" y="2" width="11" height="13" fill="#f2c04a" stroke="#8a6a20"/><rect x="4" y="1" width="5" height="3" fill="#eee" stroke="#666" stroke-width="0.8"/><path d="M7 8H13L16 11V16H7Z" fill="#fff" stroke="#444"/><path d="M9 11H13M9 13H14" stroke="#3a6cc8" stroke-width="0.9"/></svg>
<div style="left:335px;top:52px;width:1px;height:18px;background:#9aa0b4;"></div>
<svg style="left:340px;top:53px" width="17" height="16"><rect x="1" y="1" width="15" height="14" rx="1.5" fill="none" stroke="#cfd2dc"/><path d="M5 5H12M5 11H12" stroke="#cfd2dc"/><circle cx="7" cy="5" r="1.5" fill="none" stroke="#cfd2dc"/><circle cx="10" cy="11" r="1.5" fill="none" stroke="#cfd2dc"/></svg>
<svg style="left:364px;top:53px" width="14" height="16"><path d="M3 7V4.5A3.5 3.5 0 0 1 10 4.5V7" fill="none" stroke="#d0d3dd" stroke-width="1.4"/><rect x="1.5" y="7" width="10" height="8" rx="1" fill="none" stroke="#d0d3dd" stroke-width="1.2"/></svg>
<div style="left:384px;top:52px;width:1px;height:18px;background:#9aa0b4;"></div>
<svg style="left:390px;top:53px" width="16" height="16"><circle cx="6" cy="6" r="4.3" fill="none" stroke="#222" stroke-width="1.8"/><path d="M9 9L14 14" stroke="#222" stroke-width="2"/></svg>
<svg style="left:413px;top:64px" width="7" height="7"><path d="M0.5 1.5H6.5" stroke="#666" stroke-width="1"/><path d="M0 3.5H7L3.5 6.5Z" fill="#666"/></svg>
<svg style="left:591px;top:64px" width="7" height="7"><path d="M0.5 1.5H6.5" stroke="#666" stroke-width="1"/><path d="M0 3.5H7L3.5 6.5Z" fill="#666"/></svg>
<svg style="left:435px;top:52px" width="18" height="17"><path d="M2 1H13L16 4V16H2Z" fill="#dfe8f6" stroke="#5a7ec0" stroke-width="1"/><path d="M2 5H16M2 12H16M6 1V16M10 1V16" stroke="#9fb7de" stroke-width="0.8"/><rect x="0.5" y="7.5" width="17" height="4" fill="#f4e04a" stroke="#e0601a" stroke-width="1.2"/><path d="M4 1V16" stroke="#e33" stroke-width="0.8"/></svg>
<svg style="left:458px;top:52px" width="16" height="17"><rect x="1" y="1" width="14" height="15" fill="#f4f4f4" stroke="#888"/><rect x="6" y="3" width="7" height="1.5" fill="#2a4a8a"/><path d="M2 6.5H14" stroke="#e88" stroke-width="1"/><path d="M4 9V14M7.5 9V14M11 9V14" stroke="#2a4a8a" stroke-width="1.2" stroke-dasharray="1.2 1.3"/></svg>
<svg style="left:479px;top:52px" width="17" height="17"><rect x="1" y="1" width="15" height="15" fill="#f7f7f7" stroke="#777"/><path d="M8.5 1V16M1 8.5H16" stroke="#777"/><path d="M3 7H7V4H5V6H3Z" fill="#6aa84f"/><path d="M10 4V7H14V6H12V4Z" fill="#6aa84f"/><path d="M3 11V15H7V13H5V11Z" fill="#6aa84f"/><path d="M10 15H14V10H12V13H10Z" fill="#6aa84f"/></svg>
<svg style="left:502px;top:53px" width="17" height="16"><rect x="1" y="0" width="1.6" height="16" fill="#2a4a8a"/><rect x="3" y="1" width="10" height="3.5" fill="#7cba4a"/><rect x="3" y="6" width="14" height="3.5" fill="#7cba4a"/><rect x="3" y="11" width="8" height="3.5" fill="#7cba4a"/></svg>
<svg style="left:524px;top:52px" width="16" height="17"><path d="M1.5 1V15.5H15.5" fill="none" stroke="#2a4a8a" stroke-width="1.3"/><text x="4" y="7" font-family="Liberation Serif" font-weight="700" font-size="8" fill="#000">y</text><text x="9" y="14" font-family="Liberation Serif" font-weight="700" font-size="8" fill="#000">x</text></svg>
<svg style="left:546px;top:52px" width="17" height="17"><rect x="7" y="5" width="9" height="7" fill="#7cba4a"/><path d="M2.5 3L8 8.5M2.5 8.5H8M2.5 14L8 8.5" stroke="#3a5a8a" stroke-width="0.9"/><rect x="0.5" y="1" width="3" height="3" fill="#dde" stroke="#889" stroke-width="0.6"/><rect x="0.5" y="7" width="3" height="3" fill="#dde" stroke="#889" stroke-width="0.6"/><rect x="0.5" y="13" width="3" height="3" fill="#dde" stroke="#889" stroke-width="0.6"/></svg>
<svg style="left:569px;top:52px" width="17" height="18"><path d="M1 3H11V17H1Z" fill="#f6f8fb" stroke="#5a6a80"/><path d="M3 6H8M3 9H8M3 12H7" stroke="#5a6a80" stroke-width="0.8"/><path d="M5 15L14 4L16 6L7 16Z" fill="#b0b0b0" stroke="#555" stroke-width="0.7"/><path d="M14 4L15.5 2.5L17 4L16 6Z" fill="#f39a3a"/></svg>
<div style="left:164px;top:76px;width:1327px;height:459px;background:#d9d9d9;"></div>
<div style="left:305px;top:76px;width:1186px;height:4px;background:#7a7a7a;"></div>
<div style="left:302px;top:76px;width:3px;height:370px;background:#b8b8b8;"></div>
<div style="left:164px;top:81px;width:138px;height:17px;background:#efefef;border-top:1px solid #c0c0c0;border-bottom:1px solid #a8a8a8;border-left:1px solid #d0d0d0;border-right:1px solid #d0d0d0;"></div>
<div style="left:167px;top:84px;width:13px;height:11px;background:#fafafa;border:1px solid #b8b8b8;border-radius:3px;"></div>
<svg style="left:169px;top:87px" width="9" height="6"><path d="M0.5 0.5H8.5L4.5 5Z" fill="#d40000"/></svg>
<span class="t" style="left:184px;top:83px;font-size:12px;color:#000;font-weight:400;letter-spacing:-0.45px;">GSE11352_Wide_1</span>
<svg style="left:291px;top:82px" width="9" height="13"><path d="M1 1L7.5 6.5L1 12Z" fill="none" stroke="#666" stroke-width="1.1"/></svg>
<div style="left:164px;top:98px;width:138px;height:30px;background:#f7f7f7;"></div>
<svg style="left:169px;top:100px" width="10" height="12"><path d="M1 1L9 6L1 11Z" fill="#3fa34d" stroke="#2b7a36" stroke-width="0.6"/></svg>
<span class="t" style="left:187px;top:100px;font-size:12px;color:#000;font-weight:400;letter-spacing:-0.1px;">Source</span>
<div style="left:164px;top:128px;width:138px;height:3px;background:#b8b8b8;"></div>
<div style="left:164px;top:136px;width:138px;height:18px;background:#efefef;border-top:1px solid #a8a8a8;border-bottom:1px solid #a8a8a8;border-left:1px solid #d0d0d0;border-right:1px solid #d0d0d0;"></div>
<div style="left:167px;top:139px;width:13px;height:12px;background:#fafafa;border:1px solid #b8b8b8;border-radius:3px;"></div>
<svg style="left:169px;top:142px" width="9" height="6"><path d="M0.5 0.5H8.5L4.5 5Z" fill="#d40000"/></svg>
<span class="t" style="left:184px;top:138px;font-size:12px;color:#000;font-weight:400;letter-spacing:-0.3px;">Columns (109359/7...</span>
<div style="left:164px;top:154px;width:138px;height:22px;background:#f7f7f7;"></div>
<svg style="left:166px;top:160px" width="10" height="10"><circle cx="4" cy="4" r="2.8" fill="none" stroke="#222" stroke-width="1.3"/><path d="M6 6L9 9" stroke="#222" stroke-width="1.5"/></svg>
<div style="left:164px;top:176px;width:138px;height:1px;background:#111;"></div>
<div style="left:164px;top:177px;width:138px;height:151px;background:#f7f7f7;"></div>
<div style="left:285px;top:177px;width:17px;height:151px;background:#ececec;"></div>
<svg style="left:288px;top:181px" width="11" height="7"><path d="M1 6L5.5 1.5L10 6" fill="none" stroke="#aaa" stroke-width="1.1"/></svg>
<div style="left:285px;top:194px;width:17px;height:8px;background:#c8c8c8;"></div>
<svg style="left:288px;top:318px" width="11" height="7"><path d="M1 1L5.5 5.5L10 1" fill="none" stroke="#aaa" stroke-width="1.1"/></svg>
<div style="left:181px;top:257px;width:91px;height:16px;background:#bcdcf8;"></div>
<svg style="left:166px;top:178px" width="13" height="12"><rect x="1" y="3" width="3.5" height="8" fill="#d42a1a"/><rect x="4.8" y="0" width="3.5" height="11" fill="#d42a1a"/><rect x="8.6" y="6" width="3.5" height="5" fill="#d42a1a"/><path d="M1 11.5H12.5" stroke="#6a3a30" stroke-width="0.8"/></svg>
<span class="t" style="left:183px;top:178px;font-size:12px;color:#000;font-weight:400;letter-spacing:-0.12px;">Match Flag</span>
<svg style="left:166px;top:194px" width="13" height="12"><rect x="1" y="3" width="3.5" height="8" fill="#d42a1a"/><rect x="4.8" y="0" width="3.5" height="11" fill="#d42a1a"/><rect x="8.6" y="6" width="3.5" height="5" fill="#d42a1a"/><path d="M1 11.5H12.5" stroke="#6a3a30" stroke-width="0.8"/></svg>
<span class="t" style="left:183px;top:194px;font-size:12px;color:#000;font-weight:400;letter-spacing:-0.12px;">title</span>
<svg style="left:166px;top:210px" width="13" height="12"><rect x="1" y="3" width="3.5" height="8" fill="#d42a1a"/><rect x="4.8" y="0" width="3.5" height="11" fill="#d42a1a"/><rect x="8.6" y="6" width="3.5" height="5" fill="#d42a1a"/><path d="M1 11.5H12.5" stroke="#6a3a30" stroke-width="0.8"/></svg>
<span class="t" style="left:183px;top:210px;font-size:12px;color:#000;font-weight:400;letter-spacing:-0.32px;">geo_accession</span>
<svg style="left:166px;top:226px" width="13" height="12"><rect x="1" y="3" width="3.5" height="8" fill="#d42a1a"/><rect x="4.8" y="0" width="3.5" height="11" fill="#d42a1a"/><rect x="8.6" y="6" width="3.5" height="5" fill="#d42a1a"/><path d="M1 11.5H12.5" stroke="#6a3a30" stroke-width="0.8"/></svg>
<span class="t" style="left:183px;top:226px;font-size:12px;color:#000;font-weight:400;letter-spacing:-0.12px;">Time</span>
<svg style="left:166px;top:242px" width="13" height="12"><rect x="1" y="3" width="3.5" height="8" fill="#d42a1a"/><rect x="4.8" y="0" width="3.5" height="11" fill="#d42a1a"/><rect x="8.6" y="6" width="3.5" height="5" fill="#d42a1a"/><path d="M1 11.5H12.5" stroke="#6a3a30" stroke-width="0.8"/></svg>
<span class="t" style="left:183px;top:242px;font-size:12px;color:#000;font-weight:400;letter-spacing:-0.12px;">Treatment</span>
<svg style="left:166px;top:258px" width="13" height="12"><rect x="1" y="3" width="3.5" height="8" fill="#d42a1a"/><rect x="4.8" y="0" width="3.5" height="11" fill="#d42a1a"/><rect x="8.6" y="6" width="3.5" height="5" fill="#d42a1a"/><path d="M1 11.5H12.5" stroke="#6a3a30" stroke-width="0.8"/></svg>
<span class="t" style="left:183px;top:258px;font-size:12px;color:#000;font-weight:400;letter-spacing:-0.12px;">Time+Treatment</span>
<svg style="left:166px;top:275px" width="13" height="12"><path d="M1 11L12 1V11Z" fill="#3566b8"/></svg>
<span class="t" style="left:183px;top:274px;font-size:12px;color:#000;font-weight:400;letter-spacing:-0.12px;">Treated</span>
<svg style="left:166px;top:290px" width="13" height="12"><rect x="1" y="3" width="3.5" height="8" fill="#d42a1a"/><rect x="4.8" y="0" width="3.5" height="11" fill="#d42a1a"/><rect x="8.6" y="6" width="3.5" height="5" fill="#d42a1a"/><path d="M1 11.5H12.5" stroke="#6a3a30" stroke-width="0.8"/></svg>
<span class="t" style="left:183px;top:290px;font-size:12px;color:#000;font-weight:400;letter-spacing:-0.12px;">ch1</span>
<svg style="left:170px;top:308px" width="9" height="13"><path d="M1.5 1L7 6L1.5 11Z" fill="none" stroke="#777" stroke-width="1.1"/></svg>
<span class="t" style="left:183px;top:306px;font-size:12px;color:#000;font-weight:400;letter-spacing:-0.12px;">Transcri...54675/0)</span>
<svg style="left:166px;top:323px" width="13" height="12"><path d="M1 11L12 1V11Z" fill="#3566b8"/></svg>
<span class="t" style="left:183px;top:322px;font-size:12px;color:#000;font-weight:400;letter-spacing:-0.12px;">Log2[1007_s_at]</span>
<svg style="left:244px;top:179px" width="13" height="13"><path d="M6.3 0.5V12.5M1.1 3.5L11.5 9.5M1.1 9.5L11.5 3.5" stroke="#000" stroke-width="2.3"/></svg>
<svg style="left:259px;top:210px" width="16" height="13"><path d="M4 6L7 2.5H14.5V9.5H7Z" fill="#f7c53a" stroke="#2a2a50" stroke-width="1"/><path d="M6.5 5.5A1.6 1.6 0 1 0 6.6 5.6" fill="#fff" stroke="#222" stroke-width="0.8"/><path d="M5.5 5Q1 7 3.5 11" fill="none" stroke="#2a2a50" stroke-width="0.9"/></svg>
<div style="left:164px;top:328px;width:138px;height:8px;background:#d8d8d8;"></div>
<div style="left:164px;top:328px;width:138px;height:3px;background:#b8b8b8;"></div>
<svg style="left:269px;top:321px" width="14" height="8"><path d="M1 6.5H13M7 1V6.5M4 6.5V3H10V6.5" stroke="#1e2a60" stroke-width="1.6" fill="none"/></svg>
<div style="left:164px;top:336px;width:138px;height:18px;background:#efefef;border-top:1px solid #a8a8a8;border-bottom:1px solid #a8a8a8;border-left:1px solid #d0d0d0;border-right:1px solid #d0d0d0;"></div>
<div style="left:167px;top:339px;width:13px;height:12px;background:#fafafa;border:1px solid #b8b8b8;border-radius:3px;"></div>
<svg style="left:169px;top:342px" width="9" height="6"><path d="M0.5 0.5H8.5L4.5 5Z" fill="#d40000"/></svg>
<span class="t" style="left:184px;top:338px;font-size:12px;color:#000;font-weight:400;letter-spacing:0px;">Rows</span>
<div style="left:164px;top:354px;width:138px;height:91px;background:#f7f7f7;"></div>
<span class="t" style="left:168px;top:355px;font-size:12px;color:#000;font-weight:400;letter-spacing:-0.1px;">All rows</span>
<span class="t" style="right:1194px;top:355px;font-size:12px;color:#000;font-weight:400;letter-spacing:0px;">18</span>
<span class="t" style="left:168px;top:370px;font-size:12px;color:#000;font-weight:400;letter-spacing:-0.1px;">Selected</span>
<span class="t" style="right:1194px;top:370px;font-size:12px;color:#000;font-weight:400;letter-spacing:0px;">0</span>
<span class="t" style="left:168px;top:385px;font-size:12px;color:#000;font-weight:400;letter-spacing:-0.1px;">Excluded</span>
<span class="t" style="right:1194px;top:385px;font-size:12px;color:#000;font-weight:400;letter-spacing:0px;">0</span>
<span class="t" style="left:168px;top:400px;font-size:12px;color:#000;font-weight:400;letter-spacing:-0.1px;">Hidden</span>
<span class="t" style="right:1194px;top:400px;font-size:12px;color:#000;font-weight:400;letter-spacing:0px;">0</span>
<span class="t" style="left:168px;top:415px;font-size:12px;color:#000;font-weight:400;letter-spacing:-0.1px;">Labeled</span>
<span class="t" style="right:1194px;top:415px;font-size:12px;color:#000;font-weight:400;letter-spacing:0px;">0</span>
<div style="left:305px;top:80px;width:111px;height:364px;background:#f7f7f7;"></div>
<div style="left:416px;top:80px;width:1058px;height:38px;background:#f7f7f7;"></div>
<div style="left:416px;top:118px;width:1058px;height:309px;background:#fff;"></div>
<div style="left:416px;top:80px;width:55px;height:38px;background:#0078d7;"></div>
<div style="left:416px;top:118px;width:55px;height:309px;background:#cce0f4;"></div>
<div style="left:897px;top:80px;width:114px;height:38px;background:#0078d7;"></div>
<div style="left:897px;top:118px;width:114px;height:309px;background:#cce0f4;"></div>
<div style="left:1011px;top:80px;width:114px;height:38px;background:#0078d7;"></div>
<div style="left:1011px;top:118px;width:114px;height:309px;background:#cce0f4;"></div>
<div style="left:1125px;top:80px;width:104px;height:38px;background:#0078d7;"></div>
<div style="left:1125px;top:118px;width:104px;height:309px;background:#cce0f4;"></div>
<div style="left:1334px;top:80px;width:113px;height:38px;background:#0078d7;"></div>
<div style="left:1334px;top:118px;width:113px;height:309px;background:#cce0f4;"></div>
<div style="left:416px;top:137px;width:1058px;height:1px;background:#dcdce4;"></div>
<div style="left:305px;top:137px;width:111px;height:1px;background:#a8a8a8;"></div>
<div style="left:416px;top:156px;width:1058px;height:1px;background:#dcdce4;"></div>
<div style="left:305px;top:156px;width:111px;height:1px;background:#a8a8a8;"></div>
<div style="left:416px;top:175px;width:1058px;height:1px;background:#dcdce4;"></div>
<div style="left:305px;top:175px;width:111px;height:1px;background:#a8a8a8;"></div>
<div style="left:416px;top:194px;width:1058px;height:1px;background:#dcdce4;"></div>
<div style="left:305px;top:194px;width:111px;height:1px;background:#a8a8a8;"></div>
<div style="left:416px;top:213px;width:1058px;height:1px;background:#dcdce4;"></div>
<div style="left:305px;top:213px;width:111px;height:1px;background:#a8a8a8;"></div>
<div style="left:416px;top:232px;width:1058px;height:1px;background:#dcdce4;"></div>
<div style="left:305px;top:232px;width:111px;height:1px;background:#a8a8a8;"></div>
<div style="left:416px;top:251px;width:1058px;height:1px;background:#dcdce4;"></div>
<div style="left:305px;top:251px;width:111px;height:1px;background:#a8a8a8;"></div>
<div style="left:416px;top:270px;width:1058px;height:1px;background:#dcdce4;"></div>
<div style="left:305px;top:270px;width:111px;height:1px;background:#a8a8a8;"></div>
<div style="left:416px;top:289px;width:1058px;height:1px;background:#dcdce4;"></div>
<div style="left:305px;top:289px;width:111px;height:1px;background:#a8a8a8;"></div>
<div style="left:416px;top:308px;width:1058px;height:1px;background:#dcdce4;"></div>
<div style="left:305px;top:308px;width:111px;height:1px;background:#a8a8a8;"></div>
<div style="left:416px;top:327px;width:1058px;height:1px;background:#dcdce4;"></div>
<div style="left:305px;top:327px;width:111px;height:1px;background:#a8a8a8;"></div>
<div style="left:416px;top:346px;width:1058px;height:1px;background:#dcdce4;"></div>
<div style="left:305px;top:346px;width:111px;height:1px;background:#a8a8a8;"></div>
<div style="left:416px;top:365px;width:1058px;height:1px;background:#dcdce4;"></div>
<div style="left:305px;top:365px;width:111px;height:1px;background:#a8a8a8;"></div>
<div style="left:416px;top:384px;width:1058px;height:1px;background:#dcdce4;"></div>
<div style="left:305px;top:384px;width:111px;height:1px;background:#a8a8a8;"></div>
<div style="left:416px;top:403px;width:1058px;height:1px;background:#dcdce4;"></div>
<div style="left:305px;top:403px;width:111px;height:1px;background:#a8a8a8;"></div>
<div style="left:416px;top:422px;width:1058px;height:1px;background:#dcdce4;"></div>
<div style="left:305px;top:422px;width:111px;height:1px;background:#a8a8a8;"></div>
<div style="left:305px;top:118px;width:111px;height:1px;background:#a8a8a8;"></div>
<div style="left:471px;top:80px;width:1px;height:38px;background:#d8d8d8;"></div>
<div style="left:471px;top:118px;width:1px;height:309px;background:#dcdce4;"></div>
<div style="left:575px;top:80px;width:1px;height:38px;background:#d8d8d8;"></div>
<div style="left:575px;top:118px;width:1px;height:309px;background:#dcdce4;"></div>
<div style="left:689px;top:80px;width:1px;height:38px;background:#d8d8d8;"></div>
<div style="left:689px;top:118px;width:1px;height:309px;background:#dcdce4;"></div>
<div style="left:793px;top:80px;width:1px;height:38px;background:#d8d8d8;"></div>
<div style="left:793px;top:118px;width:1px;height:309px;background:#dcdce4;"></div>
<div style="left:897px;top:80px;width:1px;height:38px;background:#d8d8d8;"></div>
<div style="left:897px;top:118px;width:1px;height:309px;background:#dcdce4;"></div>
<div style="left:1011px;top:80px;width:1px;height:38px;background:#d8d8d8;"></div>
<div style="left:1011px;top:118px;width:1px;height:309px;background:#dcdce4;"></div>
<div style="left:1125px;top:80px;width:1px;height:38px;background:#d8d8d8;"></div>
<div style="left:1125px;top:118px;width:1px;height:309px;background:#dcdce4;"></div>
<div style="left:1229px;top:80px;width:1px;height:38px;background:#d8d8d8;"></div>
<div style="left:1229px;top:118px;width:1px;height:309px;background:#dcdce4;"></div>
<div style="left:1334px;top:80px;width:1px;height:38px;background:#d8d8d8;"></div>
<div style="left:1334px;top:118px;width:1px;height:309px;background:#dcdce4;"></div>
<div style="left:1447px;top:80px;width:1px;height:38px;background:#d8d8d8;"></div>
<div style="left:1447px;top:118px;width:1px;height:309px;background:#dcdce4;"></div>
<div style="left:415px;top:80px;width:1px;height:347px;background:#a8a8a8;"></div>
<div style="left:416px;top:80px;width:1058px;height:347px;overflow:hidden">
<span class="t" style="right:1008.5px;top:22.5px;font-size:12px;font-weight:700;color:#fff;letter-spacing:-0.3px">Log2[200971_s_at]</span>
<span class="t" style="right:1008px;top:41px;font-size:12px;color:#111;letter-spacing:-0.25px">59586019</span>
<span class="t" style="right:1008px;top:60px;font-size:12px;color:#111;letter-spacing:-0.25px">48914228</span>
<span class="t" style="right:1008px;top:79px;font-size:12px;color:#111;letter-spacing:-0.25px">63945993</span>
<span class="t" style="right:1008px;top:98px;font-size:12px;color:#111;letter-spacing:-0.25px">41589975</span>
<span class="t" style="right:1008px;top:117px;font-size:12px;color:#111;letter-spacing:-0.25px">38445885</span>
<span class="t" style="right:1008px;top:136px;font-size:12px;color:#111;letter-spacing:-0.25px">72094483</span>
<span class="t" style="right:1008px;top:155px;font-size:12px;color:#111;letter-spacing:-0.25px">17914909</span>
<span class="t" style="right:1008px;top:174px;font-size:12px;color:#111;letter-spacing:-0.25px">49559131</span>
<span class="t" style="right:1008px;top:193px;font-size:12px;color:#111;letter-spacing:-0.25px">21339344</span>
<span class="t" style="right:1008px;top:212px;font-size:12px;color:#111;letter-spacing:-0.25px">42967103</span>
<span class="t" style="right:1008px;top:231px;font-size:12px;color:#111;letter-spacing:-0.25px">60904732</span>
<span class="t" style="right:1008px;top:250px;font-size:12px;color:#111;letter-spacing:-0.25px">82779478</span>
<span class="t" style="right:1008px;top:269px;font-size:12px;color:#111;letter-spacing:-0.25px">35030656</span>
<span class="t" style="right:1008px;top:288px;font-size:12px;color:#111;letter-spacing:-0.25px">73382833</span>
<span class="t" style="right:1008px;top:307px;font-size:12px;color:#111;letter-spacing:-0.25px">67493512</span>
<span class="t" style="right:1008px;top:326px;font-size:12px;color:#111;letter-spacing:-0.25px">60875339</span>
<div style="left:55px;top:22.5px;width:104px;height:16px;text-align:center;font-size:12px;line-height:14px;white-space:nowrap;"><span class="t" style="position:static;font-size:12px;font-weight:700;color:#000;letter-spacing:0px">Log2[200972_at]</span></div>
<span class="t" style="right:904px;top:41px;font-size:12px;color:#111;letter-spacing:-0.25px">12.31518514</span>
<span class="t" style="right:904px;top:60px;font-size:12px;color:#111;letter-spacing:-0.25px">12.404643785</span>
<span class="t" style="right:904px;top:79px;font-size:12px;color:#111;letter-spacing:-0.25px">12.475001208</span>
<span class="t" style="right:904px;top:98px;font-size:12px;color:#111;letter-spacing:-0.25px">12.545064984</span>
<span class="t" style="right:904px;top:117px;font-size:12px;color:#111;letter-spacing:-0.25px">12.468325816</span>
<span class="t" style="right:904px;top:136px;font-size:12px;color:#111;letter-spacing:-0.25px">12.507226316</span>
<span class="t" style="right:904px;top:155px;font-size:12px;color:#111;letter-spacing:-0.25px">12.314542936</span>
<span class="t" style="right:904px;top:174px;font-size:12px;color:#111;letter-spacing:-0.25px">12.3219729</span>
<span class="t" style="right:904px;top:193px;font-size:12px;color:#111;letter-spacing:-0.25px">12.392713752</span>
<span class="t" style="right:904px;top:212px;font-size:12px;color:#111;letter-spacing:-0.25px">12.352328549</span>
<span class="t" style="right:904px;top:231px;font-size:12px;color:#111;letter-spacing:-0.25px">12.19429706</span>
<span class="t" style="right:904px;top:250px;font-size:12px;color:#111;letter-spacing:-0.25px">12.173708023</span>
<span class="t" style="right:904px;top:269px;font-size:12px;color:#111;letter-spacing:-0.25px">12.146139443</span>
<span class="t" style="right:904px;top:288px;font-size:12px;color:#111;letter-spacing:-0.25px">12.357506476</span>
<span class="t" style="right:904px;top:307px;font-size:12px;color:#111;letter-spacing:-0.25px">12.293092427</span>
<span class="t" style="right:904px;top:326px;font-size:12px;color:#111;letter-spacing:-0.25px">11.921129175</span>
<div style="left:159px;top:22.5px;width:114px;height:16px;text-align:center;font-size:12px;line-height:14px;white-space:nowrap;"><span class="t" style="position:static;font-size:12px;font-weight:700;color:#000;letter-spacing:-0.15px">Log2[200973_s_at]</span></div>
<span class="t" style="right:790px;top:41px;font-size:12px;color:#111;letter-spacing:-0.25px">11.557736073</span>
<span class="t" style="right:790px;top:60px;font-size:12px;color:#111;letter-spacing:-0.25px">11.477919737</span>
<span class="t" style="right:790px;top:79px;font-size:12px;color:#111;letter-spacing:-0.25px">11.655990453</span>
<span class="t" style="right:790px;top:98px;font-size:12px;color:#111;letter-spacing:-0.25px">11.663659488</span>
<span class="t" style="right:790px;top:117px;font-size:12px;color:#111;letter-spacing:-0.25px">11.533672099</span>
<span class="t" style="right:790px;top:136px;font-size:12px;color:#111;letter-spacing:-0.25px">11.765516568</span>
<span class="t" style="right:790px;top:155px;font-size:12px;color:#111;letter-spacing:-0.25px">11.510486061</span>
<span class="t" style="right:790px;top:174px;font-size:12px;color:#111;letter-spacing:-0.25px">11.497562537</span>
<span class="t" style="right:790px;top:193px;font-size:12px;color:#111;letter-spacing:-0.25px">11.674588973</span>
<span class="t" style="right:790px;top:212px;font-size:12px;color:#111;letter-spacing:-0.25px">11.705889516</span>
<span class="t" style="right:790px;top:231px;font-size:12px;color:#111;letter-spacing:-0.25px">11.729928965</span>
<span class="t" style="right:790px;top:250px;font-size:12px;color:#111;letter-spacing:-0.25px">11.673309406</span>
<span class="t" style="right:790px;top:269px;font-size:12px;color:#111;letter-spacing:-0.25px">11.270141949</span>
<span class="t" style="right:790px;top:288px;font-size:12px;color:#111;letter-spacing:-0.25px">11.524895271</span>
<span class="t" style="right:790px;top:307px;font-size:12px;color:#111;letter-spacing:-0.25px">11.425144</span>
<span class="t" style="right:790px;top:326px;font-size:12px;color:#111;letter-spacing:-0.25px">11.301473199</span>
<div style="left:273px;top:22.5px;width:104px;height:16px;text-align:center;font-size:12px;line-height:14px;white-space:nowrap;"><span class="t" style="position:static;font-size:12px;font-weight:700;color:#000;letter-spacing:0px">Log2[200974_at]</span></div>
<span class="t" style="right:686px;top:41px;font-size:12px;color:#111;letter-spacing:-0.25px">9.2237996679</span>
<span class="t" style="right:686px;top:60px;font-size:12px;color:#111;letter-spacing:-0.25px">9.3475073105</span>
<span class="t" style="right:686px;top:79px;font-size:12px;color:#111;letter-spacing:-0.25px">9.0812520889</span>
<span class="t" style="right:686px;top:98px;font-size:12px;color:#111;letter-spacing:-0.25px">8.768100574</span>
<span class="t" style="right:686px;top:117px;font-size:12px;color:#111;letter-spacing:-0.25px">9.0409841802</span>
<span class="t" style="right:686px;top:136px;font-size:12px;color:#111;letter-spacing:-0.25px">8.8831444636</span>
<span class="t" style="right:686px;top:155px;font-size:12px;color:#111;letter-spacing:-0.25px">8.8212825457</span>
<span class="t" style="right:686px;top:174px;font-size:12px;color:#111;letter-spacing:-0.25px">8.9613821393</span>
<span class="t" style="right:686px;top:193px;font-size:12px;color:#111;letter-spacing:-0.25px">8.7668516041</span>
<span class="t" style="right:686px;top:212px;font-size:12px;color:#111;letter-spacing:-0.25px">8.6321215575</span>
<span class="t" style="right:686px;top:231px;font-size:12px;color:#111;letter-spacing:-0.25px">8.5812880996</span>
<span class="t" style="right:686px;top:250px;font-size:12px;color:#111;letter-spacing:-0.25px">8.3181929942</span>
<span class="t" style="right:686px;top:269px;font-size:12px;color:#111;letter-spacing:-0.25px">8.800712354</span>
<span class="t" style="right:686px;top:288px;font-size:12px;color:#111;letter-spacing:-0.25px">8.7573283111</span>
<span class="t" style="right:686px;top:307px;font-size:12px;color:#111;letter-spacing:-0.25px">8.7856642393</span>
<span class="t" style="right:686px;top:326px;font-size:12px;color:#111;letter-spacing:-0.25px">8.3548606343</span>
<div style="left:377px;top:22.5px;width:104px;height:16px;text-align:center;font-size:12px;line-height:14px;white-space:nowrap;"><span class="t" style="position:static;font-size:12px;font-weight:700;color:#000;letter-spacing:0px">Log2[200975_at]</span></div>
<span class="t" style="right:582px;top:41px;font-size:12px;color:#111;letter-spacing:-0.25px">14.197549769</span>
<span class="t" style="right:582px;top:60px;font-size:12px;color:#111;letter-spacing:-0.25px">14.278057066</span>
<span class="t" style="right:582px;top:79px;font-size:12px;color:#111;letter-spacing:-0.25px">14.277391974</span>
<span class="t" style="right:582px;top:98px;font-size:12px;color:#111;letter-spacing:-0.25px">14.015462748</span>
<span class="t" style="right:582px;top:117px;font-size:12px;color:#111;letter-spacing:-0.25px">13.885278535</span>
<span class="t" style="right:582px;top:136px;font-size:12px;color:#111;letter-spacing:-0.25px">13.966017421</span>
<span class="t" style="right:582px;top:155px;font-size:12px;color:#111;letter-spacing:-0.25px">14.03444406</span>
<span class="t" style="right:582px;top:174px;font-size:12px;color:#111;letter-spacing:-0.25px">14.104809691</span>
<span class="t" style="right:582px;top:193px;font-size:12px;color:#111;letter-spacing:-0.25px">14.221032626</span>
<span class="t" style="right:582px;top:212px;font-size:12px;color:#111;letter-spacing:-0.25px">13.819313705</span>
<span class="t" style="right:582px;top:231px;font-size:12px;color:#111;letter-spacing:-0.25px">13.669894564</span>
<span class="t" style="right:582px;top:250px;font-size:12px;color:#111;letter-spacing:-0.25px">13.740571445</span>
<span class="t" style="right:582px;top:269px;font-size:12px;color:#111;letter-spacing:-0.25px">13.879577176</span>
<span class="t" style="right:582px;top:288px;font-size:12px;color:#111;letter-spacing:-0.25px">14.059261698</span>
<span class="t" style="right:582px;top:307px;font-size:12px;color:#111;letter-spacing:-0.25px">13.997062551</span>
<span class="t" style="right:582px;top:326px;font-size:12px;color:#111;letter-spacing:-0.25px">13.333589842</span>
<div style="left:481px;top:22.5px;width:114px;height:16px;text-align:center;font-size:12px;line-height:14px;white-space:nowrap;"><span class="t" style="position:static;font-size:12px;font-weight:700;color:#fff;letter-spacing:-0.15px">Log2[200976_s_at]</span></div>
<span class="t" style="right:468px;top:41px;font-size:12px;color:#111;letter-spacing:-0.25px">11.303166716</span>
<span class="t" style="right:468px;top:60px;font-size:12px;color:#111;letter-spacing:-0.25px">11.208332131</span>
<span class="t" style="right:468px;top:79px;font-size:12px;color:#111;letter-spacing:-0.25px">11.36548174</span>
<span class="t" style="right:468px;top:98px;font-size:12px;color:#111;letter-spacing:-0.25px">11.321789223</span>
<span class="t" style="right:468px;top:117px;font-size:12px;color:#111;letter-spacing:-0.25px">11.264500927</span>
<span class="t" style="right:468px;top:136px;font-size:12px;color:#111;letter-spacing:-0.25px">11.319775193</span>
<span class="t" style="right:468px;top:155px;font-size:12px;color:#111;letter-spacing:-0.25px">11.44680519</span>
<span class="t" style="right:468px;top:174px;font-size:12px;color:#111;letter-spacing:-0.25px">11.445325189</span>
<span class="t" style="right:468px;top:193px;font-size:12px;color:#111;letter-spacing:-0.25px">11.221412295</span>
<span class="t" style="right:468px;top:212px;font-size:12px;color:#111;letter-spacing:-0.25px">11.573020496</span>
<span class="t" style="right:468px;top:231px;font-size:12px;color:#111;letter-spacing:-0.25px">11.772662586</span>
<span class="t" style="right:468px;top:250px;font-size:12px;color:#111;letter-spacing:-0.25px">11.641917328</span>
<span class="t" style="right:468px;top:269px;font-size:12px;color:#111;letter-spacing:-0.25px">11.183116828</span>
<span class="t" style="right:468px;top:288px;font-size:12px;color:#111;letter-spacing:-0.25px">11.04932101</span>
<span class="t" style="right:468px;top:307px;font-size:12px;color:#111;letter-spacing:-0.25px">11.239763438</span>
<span class="t" style="right:468px;top:326px;font-size:12px;color:#111;letter-spacing:-0.25px">11.272221526</span>
<div style="left:595px;top:22.5px;width:114px;height:16px;text-align:center;font-size:12px;line-height:14px;white-space:nowrap;"><span class="t" style="position:static;font-size:12px;font-weight:700;color:#fff;letter-spacing:-0.15px">Log2[200977_s_at]</span></div>
<span class="t" style="right:354px;top:41px;font-size:12px;color:#111;letter-spacing:-0.25px">11.990151118</span>
<span class="t" style="right:354px;top:60px;font-size:12px;color:#111;letter-spacing:-0.25px">12.107158887</span>
<span class="t" style="right:354px;top:79px;font-size:12px;color:#111;letter-spacing:-0.25px">12.002070711</span>
<span class="t" style="right:354px;top:98px;font-size:12px;color:#111;letter-spacing:-0.25px">12.068029706</span>
<span class="t" style="right:354px;top:117px;font-size:12px;color:#111;letter-spacing:-0.25px">12.104377095</span>
<span class="t" style="right:354px;top:136px;font-size:12px;color:#111;letter-spacing:-0.25px">12.085573303</span>
<span class="t" style="right:354px;top:155px;font-size:12px;color:#111;letter-spacing:-0.25px">12.220495493</span>
<span class="t" style="right:354px;top:174px;font-size:12px;color:#111;letter-spacing:-0.25px">12.319118306</span>
<span class="t" style="right:354px;top:193px;font-size:12px;color:#111;letter-spacing:-0.25px">12.095321136</span>
<span class="t" style="right:354px;top:212px;font-size:12px;color:#111;letter-spacing:-0.25px">12.250372674</span>
<span class="t" style="right:354px;top:231px;font-size:12px;color:#111;letter-spacing:-0.25px">12.340974347</span>
<span class="t" style="right:354px;top:250px;font-size:12px;color:#111;letter-spacing:-0.25px">12.400508028</span>
<span class="t" style="right:354px;top:269px;font-size:12px;color:#111;letter-spacing:-0.25px">12.165991903</span>
<span class="t" style="right:354px;top:288px;font-size:12px;color:#111;letter-spacing:-0.25px">12.142586539</span>
<span class="t" style="right:354px;top:307px;font-size:12px;color:#111;letter-spacing:-0.25px">12.131378431</span>
<span class="t" style="right:354px;top:326px;font-size:12px;color:#111;letter-spacing:-0.25px">12.197424785</span>
<div style="left:709px;top:22.5px;width:104px;height:16px;text-align:center;font-size:12px;line-height:14px;white-space:nowrap;"><span class="t" style="position:static;font-size:12px;font-weight:700;color:#fff;letter-spacing:0px">Log2[200978_at]</span></div>
<span class="t" style="right:250px;top:41px;font-size:12px;color:#111;letter-spacing:-0.25px">13.767919184</span>
<span class="t" style="right:250px;top:60px;font-size:12px;color:#111;letter-spacing:-0.25px">13.75125391</span>
<span class="t" style="right:250px;top:79px;font-size:12px;color:#111;letter-spacing:-0.25px">13.755198677</span>
<span class="t" style="right:250px;top:98px;font-size:12px;color:#111;letter-spacing:-0.25px">13.763175298</span>
<span class="t" style="right:250px;top:117px;font-size:12px;color:#111;letter-spacing:-0.25px">13.706700383</span>
<span class="t" style="right:250px;top:136px;font-size:12px;color:#111;letter-spacing:-0.25px">13.68653782</span>
<span class="t" style="right:250px;top:155px;font-size:12px;color:#111;letter-spacing:-0.25px">13.64828641</span>
<span class="t" style="right:250px;top:174px;font-size:12px;color:#111;letter-spacing:-0.25px">13.737526782</span>
<span class="t" style="right:250px;top:193px;font-size:12px;color:#111;letter-spacing:-0.25px">13.795509436</span>
<span class="t" style="right:250px;top:212px;font-size:12px;color:#111;letter-spacing:-0.25px">13.863938262</span>
<span class="t" style="right:250px;top:231px;font-size:12px;color:#111;letter-spacing:-0.25px">14.00143981</span>
<span class="t" style="right:250px;top:250px;font-size:12px;color:#111;letter-spacing:-0.25px">13.887891646</span>
<span class="t" style="right:250px;top:269px;font-size:12px;color:#111;letter-spacing:-0.25px">13.592316731</span>
<span class="t" style="right:250px;top:288px;font-size:12px;color:#111;letter-spacing:-0.25px">13.784255942</span>
<span class="t" style="right:250px;top:307px;font-size:12px;color:#111;letter-spacing:-0.25px">13.661443456</span>
<span class="t" style="right:250px;top:326px;font-size:12px;color:#111;letter-spacing:-0.25px">14.064376423</span>
<div style="left:813px;top:22.5px;width:105px;height:16px;text-align:center;font-size:12px;line-height:14px;white-space:nowrap;"><span class="t" style="position:static;font-size:12px;font-weight:700;color:#000;letter-spacing:0px">Log2[200979_at]</span></div>
<span class="t" style="right:145px;top:41px;font-size:12px;color:#111;letter-spacing:-0.25px">9.6378574829</span>
<span class="t" style="right:145px;top:60px;font-size:12px;color:#111;letter-spacing:-0.25px">9.2822503902</span>
<span class="t" style="right:145px;top:79px;font-size:12px;color:#111;letter-spacing:-0.25px">9.0594563065</span>
<span class="t" style="right:145px;top:98px;font-size:12px;color:#111;letter-spacing:-0.25px">9.195267592</span>
<span class="t" style="right:145px;top:117px;font-size:12px;color:#111;letter-spacing:-0.25px">9.5686991057</span>
<span class="t" style="right:145px;top:136px;font-size:12px;color:#111;letter-spacing:-0.25px">9.0288188453</span>
<span class="t" style="right:145px;top:155px;font-size:12px;color:#111;letter-spacing:-0.25px">9.0883816786</span>
<span class="t" style="right:145px;top:174px;font-size:12px;color:#111;letter-spacing:-0.25px">8.7009151236</span>
<span class="t" style="right:145px;top:193px;font-size:12px;color:#111;letter-spacing:-0.25px">8.8165744669</span>
<span class="t" style="right:145px;top:212px;font-size:12px;color:#111;letter-spacing:-0.25px">8.8946377911</span>
<span class="t" style="right:145px;top:231px;font-size:12px;color:#111;letter-spacing:-0.25px">8.8933353029</span>
<span class="t" style="right:145px;top:250px;font-size:12px;color:#111;letter-spacing:-0.25px">8.9514568768</span>
<span class="t" style="right:145px;top:269px;font-size:12px;color:#111;letter-spacing:-0.25px">9.2409667568</span>
<span class="t" style="right:145px;top:288px;font-size:12px;color:#111;letter-spacing:-0.25px">8.9205904251</span>
<span class="t" style="right:145px;top:307px;font-size:12px;color:#111;letter-spacing:-0.25px">8.8911288034</span>
<span class="t" style="right:145px;top:326px;font-size:12px;color:#111;letter-spacing:-0.25px">8.9762961053</span>
<div style="left:918px;top:22.5px;width:113px;height:16px;text-align:center;font-size:12px;line-height:14px;white-space:nowrap;"><span class="t" style="position:static;font-size:12px;font-weight:700;color:#fff;letter-spacing:-0.15px">Log2[200980_s_at]</span></div>
<span class="t" style="right:32px;top:41px;font-size:12px;color:#111;letter-spacing:-0.25px">12.604427696</span>
<span class="t" style="right:32px;top:60px;font-size:12px;color:#111;letter-spacing:-0.25px">12.655069316</span>
<span class="t" style="right:32px;top:79px;font-size:12px;color:#111;letter-spacing:-0.25px">12.68436364</span>
<span class="t" style="right:32px;top:98px;font-size:12px;color:#111;letter-spacing:-0.25px">12.851695838</span>
<span class="t" style="right:32px;top:117px;font-size:12px;color:#111;letter-spacing:-0.25px">12.766753193</span>
<span class="t" style="right:32px;top:136px;font-size:12px;color:#111;letter-spacing:-0.25px">12.797482685</span>
<span class="t" style="right:32px;top:155px;font-size:12px;color:#111;letter-spacing:-0.25px">12.635338644</span>
<span class="t" style="right:32px;top:174px;font-size:12px;color:#111;letter-spacing:-0.25px">12.672060881</span>
<span class="t" style="right:32px;top:193px;font-size:12px;color:#111;letter-spacing:-0.25px">12.7376665</span>
<span class="t" style="right:32px;top:212px;font-size:12px;color:#111;letter-spacing:-0.25px">12.727640575</span>
<span class="t" style="right:32px;top:231px;font-size:12px;color:#111;letter-spacing:-0.25px">12.93822839</span>
<span class="t" style="right:32px;top:250px;font-size:12px;color:#111;letter-spacing:-0.25px">12.939014978</span>
<span class="t" style="right:32px;top:269px;font-size:12px;color:#111;letter-spacing:-0.25px">12.580922531</span>
<span class="t" style="right:32px;top:288px;font-size:12px;color:#111;letter-spacing:-0.25px">12.633772261</span>
<span class="t" style="right:32px;top:307px;font-size:12px;color:#111;letter-spacing:-0.25px">12.570895962</span>
<span class="t" style="right:32px;top:326px;font-size:12px;color:#111;letter-spacing:-0.25px">12.897134759</span>
<span class="t" style="left:1036px;top:22.5px;font-size:12px;font-weight:700;color:#000;letter-spacing:-0.3px">Log2[200981_x_at]</span>
</div>
<span class="t" style="right:1081px;top:121px;font-size:12px;color:#111;font-weight:400;letter-spacing:-0.2px;">1</span>
<span class="t" style="right:1081px;top:140px;font-size:12px;color:#111;font-weight:400;letter-spacing:-0.2px;">2</span>
<span class="t" style="right:1081px;top:159px;font-size:12px;color:#111;font-weight:400;letter-spacing:-0.2px;">3</span>
<span class="t" style="right:1081px;top:178px;font-size:12px;color:#111;font-weight:400;letter-spacing:-0.2px;">4</span>
<span class="t" style="right:1081px;top:197px;font-size:12px;color:#111;font-weight:400;letter-spacing:-0.2px;">5</span>
<span class="t" style="right:1081px;top:216px;font-size:12px;color:#111;font-weight:400;letter-spacing:-0.2px;">6</span>
<span class="t" style="right:1081px;top:235px;font-size:12px;color:#111;font-weight:400;letter-spacing:-0.2px;">7</span>
<span class="t" style="right:1081px;top:254px;font-size:12px;color:#111;font-weight:400;letter-spacing:-0.2px;">8</span>
<span class="t" style="right:1081px;top:273px;font-size:12px;color:#111;font-weight:400;letter-spacing:-0.2px;">9</span>
<span class="t" style="right:1081px;top:292px;font-size:12px;color:#111;font-weight:400;letter-spacing:-0.2px;">10</span>
<span class="t" style="right:1081px;top:311px;font-size:12px;color:#111;font-weight:400;letter-spacing:-0.2px;">11</span>
<span class="t" style="right:1081px;top:330px;font-size:12px;color:#111;font-weight:400;letter-spacing:-0.2px;">12</span>
<span class="t" style="right:1081px;top:349px;font-size:12px;color:#111;font-weight:400;letter-spacing:-0.2px;">13</span>
<span class="t" style="right:1081px;top:368px;font-size:12px;color:#111;font-weight:400;letter-spacing:-0.2px;">14</span>
<span class="t" style="right:1081px;top:387px;font-size:12px;color:#111;font-weight:400;letter-spacing:-0.2px;">15</span>
<span class="t" style="right:1081px;top:406px;font-size:12px;color:#111;font-weight:400;letter-spacing:-0.2px;">16</span>
<svg style="left:309px;top:81px" width="10" height="15"><path d="M7.5 1.5L1.5 7L7.5 12.5Z" fill="none" stroke="#666" stroke-width="1.1"/></svg>
<svg style="left:305px;top:80px" width="112" height="40"><line x1="19" y1="7" x2="111" y2="38" stroke="#999" stroke-width="1"/></svg>
<div style="left:397px;top:82px;width:14px;height:12px;background:#fafafa;border:1px solid #b8b8b8;border-radius:3px;"></div>
<svg style="left:399px;top:85px" width="10" height="6"><path d="M0.5 0.5H9.5L5.0 5Z" fill="#d40000"/></svg>
<div style="left:310px;top:106px;width:14px;height:11px;background:#fafafa;border:1px solid #b8b8b8;border-radius:3px;"></div>
<svg style="left:312px;top:109px" width="10" height="6"><path d="M0.5 0.5H9.5L5.0 5Z" fill="#d40000"/></svg>
<svg style="left:396px;top:96px" width="14" height="14"><rect x="1" y="1" width="1.2" height="11" fill="#7a8ab0"/><rect x="2.5" y="3" width="6" height="2" fill="#8a9a80"/><rect x="2.5" y="6" width="9" height="2" fill="#8a9a80"/><rect x="2.5" y="9" width="5" height="2" fill="#8a9a80"/></svg>
<div style="left:1474px;top:118px;width:17px;height:309px;background:#f0f0f0;"></div>
<div style="left:1474px;top:80px;width:17px;height:38px;background:#fafafa;"></div>
<svg style="left:1476px;top:124px" width="12" height="8"><path d="M1.5 6.5L6 2L10.5 6.5" fill="none" stroke="#a0a0a0" stroke-width="1"/></svg>
<div style="left:1474px;top:135px;width:17px;height:224px;background:#cdcdcd;"></div>
<svg style="left:1476px;top:414px" width="12" height="8"><path d="M1.5 1.5L6 6L10.5 1.5" fill="none" stroke="#a0a0a0" stroke-width="1"/></svg>
<div style="left:416px;top:427px;width:1075px;height:18px;background:#efefef;"></div>
<svg style="left:420px;top:430px" width="8" height="12"><path d="M6 1.5L2 6L6 10.5" fill="none" stroke="#a0a0a0" stroke-width="1"/></svg>
<div style="left:986px;top:428px;width:8px;height:16px;background:#cdcdcd;"></div>
<svg style="left:1461px;top:430px" width="8" height="12"><path d="M2 1.5L6 6L2 10.5" fill="none" stroke="#a0a0a0" stroke-width="1"/></svg>
</div></div>
<div style="left:544px;top:474px;width:46px;height:17px;background:#c6e0f2;border:1px solid #4aa0dc;"></div>
<span class="t" style="left:552px;top:476px;font-size:12px;color:#000;font-weight:400;letter-spacing:-0.2px;">Tables</span>
<div style="left:544px;top:491px;width:208px;height:111px;background:#f0f0f0;border-left:1px solid #a0a0a0;border-right:1px solid #a0a0a0;"></div>
<div style="left:576px;top:494px;width:1px;height:108px;background:#d8d8d8;"></div>
<div style="left:577px;top:521px;width:171px;height:1px;background:#d8d8d8;"></div>
<div style="left:577px;top:522px;width:171px;height:1px;background:#fff;"></div>
<div style="left:547px;top:525px;width:202px;height:24px;background:#c3dfef;border:1px solid #5eb0e2;"></div>
<div style="left:576px;top:526px;width:1px;height:22px;background:#b8cfe0;"></div>
<svg style="left:551px;top:498px" width="15" height="15"><rect x="1" y="1.0" width="3.4" height="2.6" fill="#dfe6f4" stroke="#1e2a60" stroke-width="0.9"/><rect x="1" y="4.2" width="3.4" height="2.6" fill="#dfe6f4" stroke="#1e2a60" stroke-width="0.9"/><rect x="1" y="7.4" width="3.4" height="2.6" fill="#dfe6f4" stroke="#1e2a60" stroke-width="0.9"/><rect x="1" y="10.600000000000001" width="3.4" height="2.6" fill="#e04050" stroke="#1e2a60" stroke-width="0.9"/><rect x="10" y="5" width="3.4" height="2.6" fill="#d8e0f0" stroke="#1e2a60" stroke-width="0.9"/><rect x="10" y="8.2" width="3.4" height="2.6" fill="#e04050" stroke="#1e2a60" stroke-width="0.9"/><path d="M5 2.5H7V10.5H5M7 7H10" fill="none" stroke="#1e2a60" stroke-width="0.9"/></svg>
<svg style="left:551px;top:529px" width="15" height="15"><rect x="1" y="1.0" width="3.4" height="2.6" fill="#eef2fa" stroke="#3a4a80" stroke-width="0.9"/><rect x="1" y="3.9" width="3.4" height="2.6" fill="#eef2fa" stroke="#3a4a80" stroke-width="0.9"/><rect x="1" y="6.8" width="3.4" height="2.6" fill="#eef2fa" stroke="#3a4a80" stroke-width="0.9"/><rect x="1" y="9.7" width="3.4" height="2.6" fill="#eef2fa" stroke="#3a4a80" stroke-width="0.9"/><rect x="1" y="12.6" width="3.4" height="2.6" fill="#eef2fa" stroke="#3a4a80" stroke-width="0.9"/><rect x="9" y="4.5" width="3.4" height="2.6" fill="#dfe6f4" stroke="#1e2a60" stroke-width="0.9"/><rect x="9" y="7.6" width="3.4" height="2.6" fill="#dfe6f4" stroke="#1e2a60" stroke-width="0.9"/><path d="M5 2.5H6.5V6H9M5 8H6.5" fill="none" stroke="#1e2a60" stroke-width="0.9"/></svg>
<svg style="left:551px;top:553px" width="15" height="15"><rect x="1" y="1.0" width="4.5" height="3.6" fill="#4a5a8a" stroke="#1e2a60" stroke-width="0.8"/><rect x="1" y="5.2" width="4.5" height="3.6" fill="#4a5a8a" stroke="#1e2a60" stroke-width="0.8"/><rect x="1" y="9.4" width="4.5" height="3.6" fill="#4a5a8a" stroke="#1e2a60" stroke-width="0.8"/><rect x="9.5" y="1.0" width="4.5" height="3.6" fill="#4a5a8a" stroke="#1e2a60" stroke-width="0.8"/><rect x="9.5" y="5.2" width="4.5" height="3.6" fill="#4a5a8a" stroke="#1e2a60" stroke-width="0.8"/><rect x="9.5" y="9.4" width="4.5" height="3.6" fill="#4a5a8a" stroke="#1e2a60" stroke-width="0.8"/><path d="M5.5 3H7.5V11H9.5" fill="none" stroke="#1e2a60" stroke-width="0.9"/></svg>
<svg style="left:551px;top:577px" width="15" height="15"><rect x="0.5" y="5.5" width="3.4" height="2.6" fill="#dfe6f4" stroke="#1e2a60" stroke-width="0.9"/><rect x="4.2" y="5.5" width="3.4" height="2.6" fill="#e04050" stroke="#1e2a60" stroke-width="0.9"/><rect x="10.5" y="1.0" width="3.4" height="2.6" fill="#dfe6f4" stroke="#1e2a60" stroke-width="0.9"/><rect x="10.5" y="4.2" width="3.4" height="2.6" fill="#e04050" stroke="#1e2a60" stroke-width="0.9"/><rect x="10.5" y="7.4" width="3.4" height="2.6" fill="#dfe6f4" stroke="#1e2a60" stroke-width="0.9"/><rect x="10.5" y="10.600000000000001" width="3.4" height="2.6" fill="#e04050" stroke="#1e2a60" stroke-width="0.9"/><path d="M7.6 7H9V2.5H10.5M9 10.5H10.5" fill="none" stroke="#1e2a60" stroke-width="0.9"/></svg>
<span class="t" style="left:584px;top:499px;font-size:12px;color:#000;font-weight:400;letter-spacing:-0.1px;">Summary</span>
<span class="t" style="left:584px;top:530px;font-size:12px;color:#000;font-weight:400;letter-spacing:-0.1px;">Subset</span>
<span class="t" style="left:584px;top:554px;font-size:12px;color:#000;font-weight:400;letter-spacing:-0.1px;">Sort</span>
<span class="t" style="left:584px;top:578px;font-size:12px;color:#000;font-weight:400;letter-spacing:-0.1px;">Stack</span>
<div style="left:759px;top:525px;width:191px;height:55px;background:#f1f2f5;border:1px solid #7a7a7a;"></div>
<span class="t" style="left:766px;top:531px;font-size:12px;color:#575757;font-weight:400;letter-spacing:-0.05px;">Creates a new data table from the</span>
<span class="t" style="left:766px;top:546px;font-size:12px;color:#575757;font-weight:400;letter-spacing:-0.05px;">selected rows and columns of the</span>
<span class="t" style="left:766px;top:561px;font-size:12px;color:#575757;font-weight:400;letter-spacing:-0.05px;">source data table.</span>
<svg style="left:0;top:0" width="1492" height="602"><circle cx="104" cy="257" r="5" fill="#fd4040"/><line x1="104" y1="257" x2="186" y2="257.5" stroke="#fd4040" stroke-width="10" stroke-linecap="butt"/><path d="M182 242.5L211.5 258L182 272.5Z" fill="#fd4040"/><circle cx="474" cy="397" r="5" fill="#fd4040"/><line x1="474" y1="397" x2="546" y2="458" stroke="#fd4040" stroke-width="10" stroke-linecap="butt"/><path d="M533 466.5L551.5 444L565 473Z" fill="#fd4040"/></svg>
<svg style="left:0;top:0" width="1492" height="602"><path d="M71.5 273 L71.5 305 L79.5 296.5 L85.5 309.3 L91.8 306 L87 296 L95.5 296 Z" fill="#f2f2f2" stroke="#000" stroke-width="2.2" stroke-linejoin="miter"/><path d="M686 538.5 L686 562 L690.9 556.6 L695.4 565.6 L700 563.2 L696.4 554.6 L702.4 554.6 Z" fill="#f4f4f4" stroke="#000" stroke-width="1.9" stroke-linejoin="miter"/></svg>
</body></html>
